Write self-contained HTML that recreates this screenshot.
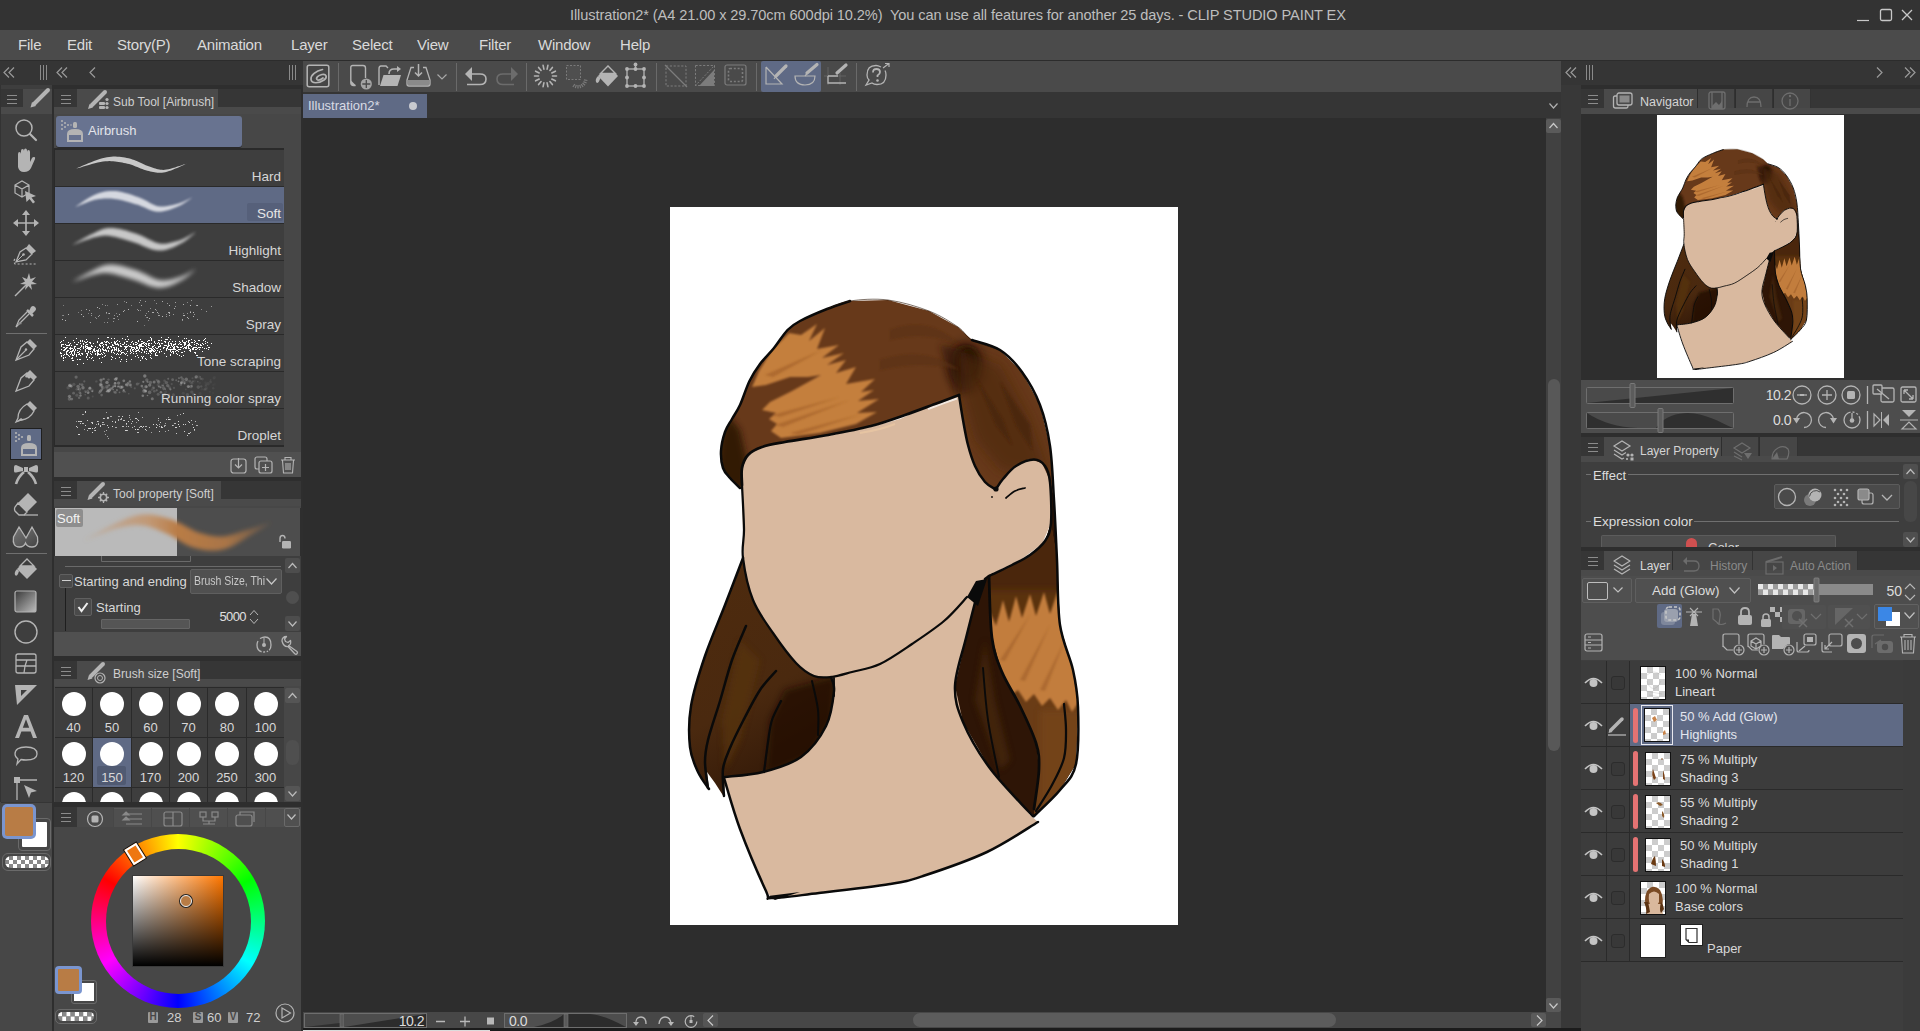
<!DOCTYPE html>
<html><head><meta charset="utf-8">
<style>
*{margin:0;padding:0;box-sizing:border-box}
html,body{width:1920px;height:1031px;overflow:hidden;background:#2e2e2e;font-family:"Liberation Sans",sans-serif;color:#d2d2d2}
.a{position:absolute}
svg{position:absolute;overflow:visible}
.t{position:absolute;white-space:nowrap;line-height:1}
</style></head><body>
<div class="a" style="left:0px;top:0px;width:1920px;height:30px;background:#333333;"></div>
<div class="t" style="left:570px;top:8px;font-size:14.6px;color:#bebebe;letter-spacing:-0.1px">Illustration2* (A4 21.00 x 29.70cm 600dpi 10.2%)&nbsp; You can use all features for another 25 days. - CLIP STUDIO PAINT EX</div>
<svg style="left:1855px;top:8px;" width="60" height="16" viewBox="0 0 60 16"><path d="M2 12.5H14" stroke="#c8c8c8" stroke-width="1.2"/><rect x="25.5" y="1.5" width="11" height="11" rx="1.5" stroke="#c8c8c8" stroke-width="1.3" fill="none"/><path d="M47 2L57 12M57 2L47 12" stroke="#c8c8c8" stroke-width="1.3"/></svg>
<div class="a" style="left:0px;top:30px;width:1920px;height:30px;background:#4b4b4b;"></div>
<div class="t" style="left:18px;top:37px;font-size:15px;color:#dadada;letter-spacing:-0.2px">File</div>
<div class="t" style="left:67px;top:37px;font-size:15px;color:#dadada;letter-spacing:-0.2px">Edit</div>
<div class="t" style="left:117px;top:37px;font-size:15px;color:#dadada;letter-spacing:-0.2px">Story(P)</div>
<div class="t" style="left:197px;top:37px;font-size:15px;color:#dadada;letter-spacing:-0.2px">Animation</div>
<div class="t" style="left:291px;top:37px;font-size:15px;color:#dadada;letter-spacing:-0.2px">Layer</div>
<div class="t" style="left:352px;top:37px;font-size:15px;color:#dadada;letter-spacing:-0.2px">Select</div>
<div class="t" style="left:417px;top:37px;font-size:15px;color:#dadada;letter-spacing:-0.2px">View</div>
<div class="t" style="left:479px;top:37px;font-size:15px;color:#dadada;letter-spacing:-0.2px">Filter</div>
<div class="t" style="left:538px;top:37px;font-size:15px;color:#dadada;letter-spacing:-0.2px">Window</div>
<div class="t" style="left:620px;top:37px;font-size:15px;color:#dadada;letter-spacing:-0.2px">Help</div>
<div class="a" style="left:0px;top:60px;width:1920px;height:1px;background:#2c2c2c;"></div>
<div class="a" style="left:303px;top:61px;width:1258px;height:31px;background:#4a4a4a;"></div>
<svg style="left:306px;top:64px;" width="24" height="24" viewBox="0 0 24 24"><rect x="1.2" y="1.2" width="21.6" height="21.6" rx="2" stroke="#b4b4b4" stroke-width="1.5" fill="#454545"/><path d="M16.5 5.5C10 7 4.5 11 5 15.5C5.5 20 13 19.5 18 16C22 13 20 9.5 16 10.5C12.5 11.5 9.5 13.5 11 15.5C12 16.5 15 15.5 17 14" stroke="#b4b4b4" stroke-width="1.7" fill="none" stroke-linecap="round"/></svg>
<div class="a" style="left:338px;top:63px;width:1px;height:28px;background:#6a6a6a;"></div>
<div class="a" style="left:456px;top:63px;width:1px;height:28px;background:#6a6a6a;"></div>
<div class="a" style="left:526px;top:63px;width:1px;height:28px;background:#6a6a6a;"></div>
<div class="a" style="left:656px;top:63px;width:1px;height:28px;background:#6a6a6a;"></div>
<div class="a" style="left:756px;top:63px;width:1px;height:28px;background:#6a6a6a;"></div>
<div class="a" style="left:856px;top:63px;width:1px;height:28px;background:#6a6a6a;"></div>
<svg style="left:349px;top:64px;" width="26" height="28" viewBox="0 0 26 28"><path d="M6.5 21.5H4.5Q1.8 21.5 1.8 18.8V3.5Q1.8 1.5 3.8 1.5H14Q16.5 1.5 16.5 4V14" stroke="#b4b4b4" stroke-width="1.4" fill="none"/><path d="M2 16.5L7 21.5H4Q2 21.5 2 19.5Z" fill="#b4b4b4"/><circle cx="17.3" cy="20" r="5.6" fill="#a4a4a4"/><path d="M17.3 16V24M13.3 20H21.3" stroke="#4a4a4a" stroke-width="1.3"/></svg>
<svg style="left:378px;top:65px;" width="25" height="22" viewBox="0 0 25 22"><path d="M1 20V4Q1 1 3 1H8L10 3" stroke="#b4b4b4" stroke-width="1.4" fill="none"/><path d="M2 21L5.5 10H23L19.5 21Z" fill="#b4b4b4"/><path d="M11 9Q11 4 16 4H20" stroke="#b4b4b4" stroke-width="1.6" fill="none"/><path d="M19 1L23 4L19 7Z" fill="#b4b4b4"/></svg>
<svg style="left:406px;top:63px;" width="26" height="26" viewBox="0 0 26 26"><path d="M8 4.5H5L1 17V21Q1 23 3 23H22Q24 23 24 21V17L20 4.5H17" stroke="#b4b4b4" stroke-width="1.3" fill="none"/><rect x="2" y="17" width="21" height="5" fill="#8a8a8a"/><path d="M12.5 1V13M9 9.5L12.5 13L16 9.5" stroke="#b4b4b4" stroke-width="1.5" fill="none"/></svg>
<svg style="left:437px;top:74px;" width="10" height="6" viewBox="0 0 10 6"><path d="M0.5 0.5L5.0 5L9.5 0.5" stroke="#a8a8a8" stroke-width="1.2" fill="none"/></svg>
<svg style="left:465px;top:64px;" width="23" height="24" viewBox="0 0 23 24"><path d="M6 10H15Q21 10 21 15Q21 20.5 15 20.5H2" stroke="#b4b4b4" stroke-width="1.6" fill="none"/><path d="M0 10L7 3V17Z" fill="#b4b4b4"/></svg>
<svg style="left:495px;top:64px;" width="23" height="24" viewBox="0 0 23 24"><path d="M17 10H8Q2 10 2 15Q2 20.5 8 20.5H19" stroke="#6c6c6c" stroke-width="1.6" fill="none"/><path d="M23 10L16 3V17Z" fill="#6c6c6c"/></svg>
<svg style="left:534px;top:64px;" width="24" height="24" viewBox="0 0 24 24"><path d="M18.5 12.0L22.5 12.0M17.8 15.0L21.4 16.8M15.9 17.5L18.4 20.6M13.1 18.8L13.9 22.7M9.9 18.8L9.1 22.7M7.1 17.5L4.6 20.6M5.2 15.0L1.6 16.8M4.5 12.0L0.5 12.0M5.2 9.0L1.6 7.2M7.1 6.5L4.6 3.4M9.9 5.2L9.1 1.3M13.1 5.2L13.9 1.3M15.9 6.5L18.4 3.4M17.8 9.0L21.4 7.2" stroke="#b4b4b4" stroke-width="1.6" stroke-linecap="round"/></svg>
<svg style="left:564px;top:64px;" width="24" height="24" viewBox="0 0 24 24"><rect x="2.5" y="1.5" width="14" height="14" stroke="#7a7a7a" stroke-width="1" stroke-dasharray="2 1.5" fill="#4f4f4f"/><path d="M19.9 15.9L23.4 16.5M19.4 17.6L22.6 19.0M18.5 19.0L21.1 21.3M17.2 20.1L19.1 23.0M15.7 20.8L16.7 24.1M14.0 21.0L14.0 24.5M12.3 20.8L11.3 24.1M10.8 20.1L8.9 23.0" stroke="#7a7a7a" stroke-width="1.2"/></svg>
<svg style="left:594px;top:64px;" width="26" height="25" viewBox="0 0 26 25"><path d="M14 1.5L24 12L14 22.5L4 12Z" fill="#b4b4b4"/><path d="M6.5 9.5L14 2L21.5 9.5Z" fill="#4a4a4a"/><path d="M14 2L21.5 9.5H6.5Z" stroke="#b4b4b4" stroke-width="1.4" fill="none"/><path d="M4 12Q1 15 2 18Q3.5 20 5 17.5L6.5 14Z" fill="#b4b4b4"/></svg>
<svg style="left:625px;top:63px;" width="22" height="27" viewBox="0 0 22 27"><rect x="2" y="6" width="17" height="17" stroke="#b4b4b4" stroke-width="1.3" fill="none"/><path d="M10.5 6V1" stroke="#b4b4b4" stroke-width="1.3"/><circle cx="2" cy="6" r="1.9" fill="#b4b4b4"/><circle cx="10.5" cy="6" r="1.9" fill="#b4b4b4"/><circle cx="19" cy="6" r="1.9" fill="#b4b4b4"/><circle cx="2" cy="14.5" r="1.9" fill="#b4b4b4"/><circle cx="19" cy="14.5" r="1.9" fill="#b4b4b4"/><circle cx="2" cy="23" r="1.9" fill="#b4b4b4"/><circle cx="10.5" cy="23" r="1.9" fill="#b4b4b4"/><circle cx="19" cy="23" r="1.9" fill="#b4b4b4"/><circle cx="10.5" cy="1.5" r="1.9" fill="#b4b4b4"/></svg>
<svg style="left:664px;top:64px;" width="25" height="25" viewBox="0 0 25 25"><rect x="2" y="2" width="20" height="20" stroke="#7c7c7c" stroke-width="1" stroke-dasharray="2.2 1.6" fill="none"/><path d="M1 1L23 23" stroke="#7c7c7c" stroke-width="1.3"/></svg>
<svg style="left:694px;top:64px;" width="25" height="25" viewBox="0 0 25 25"><rect x="1.5" y="1.5" width="19" height="20" stroke="#7c7c7c" stroke-width="1" stroke-dasharray="2.2 1.6" fill="none"/><path d="M1 22L21 1" stroke="#7c7c7c" stroke-width="1" stroke-dasharray="2 1.5"/><path d="M5 22L20 6V22Z" fill="#7c7c7c"/></svg>
<svg style="left:724px;top:64px;" width="24" height="25" viewBox="0 0 24 25"><rect x="1" y="1" width="21" height="20" rx="2" stroke="#7c7c7c" stroke-width="1.2" fill="none"/><rect x="4.5" y="4.5" width="14" height="13" rx="1.5" stroke="#7c7c7c" stroke-width="1.6" stroke-dasharray="2 1.8" fill="none"/></svg>
<div class="a" style="left:761px;top:61px;width:60px;height:31px;background:#5f6a85;border-radius:2px"></div>
<svg style="left:764px;top:63px;" width="26" height="26" viewBox="0 0 26 26"><path d="M2 4V21H18L2 4" stroke="#b4b4b4" stroke-width="1.2" fill="none"/><path d="M12 13L22 3" stroke="#b4b4b4" stroke-width="3.2" stroke-linecap="round"/><path d="M10 16L12.5 12.5" stroke="#b4b4b4" stroke-width="1.2"/></svg>
<svg style="left:794px;top:63px;" width="26" height="26" viewBox="0 0 26 26"><path d="M1 13H21Q21 22 11 22Q1 22 1 13Z" stroke="#b4b4b4" stroke-width="1.2" fill="none"/><path d="M13 10L23 1.5" stroke="#b4b4b4" stroke-width="3.2" stroke-linecap="round"/><path d="M11 13L13.5 10" stroke="#b4b4b4" stroke-width="1.2"/></svg>
<svg style="left:824px;top:63px;" width="26" height="26" viewBox="0 0 26 26"><path d="M4 4V22M0 13H22M16 10V22" stroke="#6a6a6a" stroke-width="0.8"/><path d="M4 13H14M4 13V20H22" stroke="#b4b4b4" stroke-width="1.3" fill="none"/><path d="M13 10L22 2" stroke="#b4b4b4" stroke-width="3.2" stroke-linecap="round"/></svg>
<svg style="left:864px;top:63px;" width="28" height="27" viewBox="0 0 28 27"><path d="M17 4Q14 2.5 12 2.5Q3 2.5 3 12Q3 15 5 17L2 22L8 20Q10 21.5 13 21.5Q22 21.5 22 12Q22 9 21 7.5" stroke="#b4b4b4" stroke-width="1.3" fill="none"/><path d="M9 9.5Q9 6 12.5 6Q16 6 16 9Q16 11 13.5 12.5V14" stroke="#b4b4b4" stroke-width="1.8" fill="none"/><circle cx="13.5" cy="17.5" r="1.3" fill="#b4b4b4"/><path d="M19 5L25 0.5M21 0.5H25V4" stroke="#b4b4b4" stroke-width="1.2" fill="none"/></svg>
<div class="a" style="left:0px;top:61px;width:303px;height:24px;background:#353535;"></div>
<svg style="left:3px;top:67px;" width="12" height="11" viewBox="0 0 12 11"><path d="M6 0.5L1 5.5L6 10.5M11 0.5L6 5.5L11 10.5" stroke="#9a9a9a" stroke-width="1.2" fill="none"/></svg>
<svg style="left:40px;top:65px;" width="8" height="16" viewBox="0 0 8 16"><path d="M0.5 0V15M3.5 0V15M6.5 0V15" stroke="#8a8a8a" stroke-width="1" fill="none"/></svg>
<svg style="left:56px;top:67px;" width="12" height="11" viewBox="0 0 12 11"><path d="M6 0.5L1 5.5L6 10.5M11 0.5L6 5.5L11 10.5" stroke="#9a9a9a" stroke-width="1.2" fill="none"/></svg>
<svg style="left:89px;top:67px;" width="7" height="11" viewBox="0 0 7 11"><path d="M6 0.5L1 5.5L6 10.5" stroke="#9a9a9a" stroke-width="1.2" fill="none"/></svg>
<svg style="left:289px;top:65px;" width="8" height="16" viewBox="0 0 8 16"><path d="M0.5 0V15M3.5 0V15M6.5 0V15" stroke="#8a8a8a" stroke-width="1" fill="none"/></svg>
<div class="a" style="left:1561px;top:61px;width:359px;height:24px;background:#353535;"></div>
<svg style="left:1565px;top:67px;" width="12" height="11" viewBox="0 0 12 11"><path d="M6 0.5L1 5.5L6 10.5M11 0.5L6 5.5L11 10.5" stroke="#9a9a9a" stroke-width="1.2" fill="none"/></svg>
<svg style="left:1586px;top:65px;" width="8" height="16" viewBox="0 0 8 16"><path d="M0.5 0V15M3.5 0V15M6.5 0V15" stroke="#8a8a8a" stroke-width="1" fill="none"/></svg>
<svg style="left:1876px;top:67px;" width="7" height="11" viewBox="0 0 7 11"><path d="M1 0.5L6 5.5L1 10.5" stroke="#9a9a9a" stroke-width="1.2" fill="none"/></svg>
<svg style="left:1904px;top:67px;" width="12" height="11" viewBox="0 0 12 11"><path d="M1 0.5L6 5.5L1 10.5M6 0.5L11 5.5L6 10.5" stroke="#9a9a9a" stroke-width="1.2" fill="none"/></svg>
<div class="a" style="left:302px;top:92px;width:1259px;height:26px;background:#353535;"></div>
<div class="a" style="left:302px;top:94px;width:125px;height:24px;background:#5f6a85;"></div>
<div class="t" style="left:308px;top:99px;font-size:13px;color:#d8dbe4;">Illustration2*</div>
<div class="a" style="left:409px;top:102px;width:8px;height:8px;border-radius:50%;background:#c8cad0"></div>
<svg style="left:1549px;top:103px;" width="9" height="6" viewBox="0 0 9 6"><path d="M0.5 0.5L4.5 5L8.5 0.5" stroke="#b0b0b0" stroke-width="1.2" fill="none"/></svg>
<div class="a" style="left:302px;top:118px;width:1244px;height:894px;background:#2d2d2d;"></div>
<div class="a" style="left:1546px;top:118px;width:15px;height:895px;background:#414141;"></div>
<div class="a" style="left:1546px;top:119px;width:15px;height:14px;background:#5a5a5a;border-radius:2px"></div>
<svg style="left:1549px;top:123px;" width="9" height="6" viewBox="0 0 9 6"><path d="M0.5 5L4.5 0.5L8.5 5" stroke="#c8c8c8" stroke-width="1.2" fill="none"/></svg>
<div class="a" style="left:1548px;top:379px;width:12px;height:372px;background:#585858;border-radius:6px"></div>
<div class="a" style="left:1546px;top:998px;width:15px;height:14px;background:#5a5a5a;border-radius:2px"></div>
<svg style="left:1549px;top:1003px;" width="9" height="6" viewBox="0 0 9 6"><path d="M0.5 0.5L4.5 5L8.5 0.5" stroke="#c8c8c8" stroke-width="1.2" fill="none"/></svg>
<div class="a" style="left:1561px;top:85px;width:20px;height:946px;background:#383838;"></div>
<div class="a" style="left:302px;top:1012px;width:1259px;height:16px;background:#474747;"></div>
<div class="a" style="left:0px;top:1028px;width:1920px;height:3px;background:#1c1c1c;"></div>
<div class="a" style="left:60px;top:1030px;width:430px;height:1px;background:#dcdcdc;"></div>
<svg style="left:304px;top:1013px;" width="123" height="15" viewBox="0 0 123 15"><rect x="0.5" y="0.5" width="122" height="14" fill="#3a3a3a" stroke="#6e6e6e"/><path d="M1 14L122 1V14Z" fill="#2c2c2c"/><path d="M1 14L36 10V14Z" fill="#2c2c2c"/><rect x="1" y="1" width="35" height="13" fill="#474747"/><path d="M1 14L36 10V14Z" fill="#2f2f2f"/><rect x="36" y="1" width="4" height="13" fill="#5a5a5a" stroke="#777" stroke-width="0.6"/><path d="M40 14L122 1V1H40Z" fill="#4d4d4d"/></svg>
<div class="t" style="right:1496px;top:1014px;font-size:14px;color:#dcdcdc;letter-spacing:-0.5px">10.2</div>
<svg style="left:435px;top:1015px;" width="60" height="12" viewBox="0 0 60 12"><path d="M1 6.5H10M25 6.5H35M30 1.5V11.5" stroke="#b8b8b8" stroke-width="1.3"/><rect x="52" y="2.5" width="7" height="7" fill="#b8b8b8"/></svg>
<svg style="left:504px;top:1013px;" width="123" height="15" viewBox="0 0 123 15"><rect x="0.5" y="0.5" width="122" height="14" fill="#2c2c2c" stroke="#6e6e6e"/><path d="M1 1H60Q40 14 1 14Z" fill="#4d4d4d"/><path d="M1 1V14H30Q50 10 60 1Z" fill="#4f4f4f"/><path d="M1 14Q40 14 60 1" fill="none" stroke="none"/><rect x="60" y="1" width="4" height="13" fill="#5a5a5a" stroke="#777" stroke-width="0.6"/><path d="M64 1H86Q100 2 122 14V1Z" fill="#4d4d4d"/></svg>
<div class="t" style="left:509px;top:1014px;font-size:14px;color:#dcdcdc;letter-spacing:-0.5px">0.0</div>
<svg style="left:633px;top:1014px;" width="66" height="14" viewBox="0 0 66 14"><path d="M3 11Q2 3 8 3Q13 3 13 10" stroke="#b8b8b8" stroke-width="1.3" fill="none"/><path d="M0 8L3 12L6 8Z" fill="#b8b8b8"/><path d="M38 11Q38 3 32 3Q27 3 26 10" stroke="#b8b8b8" stroke-width="1.3" fill="none"/><path d="M35 8L38 12L41 8Z" fill="#b8b8b8"/><circle cx="58" cy="7.5" r="5.8" stroke="#b8b8b8" stroke-width="1.2" fill="none" stroke-dasharray="30 6"/><rect x="56.5" y="6" width="3" height="3" fill="#b8b8b8"/><path d="M58 1.5V7" stroke="#b8b8b8" stroke-width="1"/></svg>
<div class="a" style="left:703px;top:1013px;width:15px;height:14px;background:#555555;border-radius:2px"></div>
<svg style="left:707px;top:1015px;" width="7" height="11" viewBox="0 0 7 11"><path d="M6 0.5L1 5.5L6 10.5" stroke="#c8c8c8" stroke-width="1.2" fill="none"/></svg>
<div class="a" style="left:913px;top:1013px;width:423px;height:14px;background:#5c5c5c;border-radius:7px"></div>
<div class="a" style="left:1531px;top:1013px;width:15px;height:14px;background:#5a5a5a;border-radius:2px"></div>
<svg style="left:1536px;top:1015px;" width="7" height="11" viewBox="0 0 7 11"><path d="M1 0.5L6 5.5L1 10.5" stroke="#c8c8c8" stroke-width="1.2" fill="none"/></svg>
<div class="a" style="left:670px;top:207px;width:508px;height:718px;background:#ffffff;"></div>
<div class="a" style="left:0px;top:85px;width:303px;height:946px;background:#2e2e2e;"></div>
<div class="a" style="left:0px;top:85px;width:52px;height:946px;background:#3e3e3e;"></div>
<div class="a" style="left:0px;top:85px;width:1px;height:946px;background:#333;"></div>
<div class="a" style="left:1px;top:89px;width:22px;height:18px;background:#363636;"></div>
<div class="a" style="left:23px;top:89px;width:29px;height:25px;background:#4a4a4a;"></div>
<div class="a" style="left:1px;top:107px;width:51px;height:7px;background:#4a4a4a;"></div>
<svg style="left:7px;top:94px;" width="10" height="10" viewBox="0 0 10 10"><path d="M0 1.5H10M0 5.5H10M0 9.5H10" stroke="#8c8c8c" stroke-width="1" fill="none"/></svg>
<svg style="left:28px;top:88px;" width="24" height="20" viewBox="0 0 24 20"><path d="M20 2L6 16" stroke="#b4b4b4" stroke-width="4" stroke-linecap="round"/><path d="M2.5 19.5L4 14L8 18Z" fill="#b4b4b4"/></svg>
<svg style="left:12px;top:117px;" width="28" height="28" viewBox="0 0 28 28"><circle cx="12" cy="11" r="8" stroke="#b4b4b4" stroke-width="1.5" fill="none"/><path d="M18 17L24 23" stroke="#b4b4b4" stroke-width="2.2" stroke-linecap="round"/></svg>
<svg style="left:12px;top:147px;" width="28" height="28" viewBox="0 0 28 28"><path d="M6 13V7Q6 5 7.5 5Q9 5 9 7V12V4Q9 2 10.5 2Q12 2 12 4V11V3.5Q12 1.5 13.5 1.5Q15 1.5 15 3.5V11V5Q15 3 16.5 3Q18 3 18 5V15L20 11Q21 9.5 22.5 10Q23.5 10.5 23 12L19 21Q17 25 12 25Q7 25 6 20Z" fill="#b4b4b4"/></svg>
<svg style="left:12px;top:178px;" width="28" height="28" viewBox="0 0 28 28"><path d="M3 7L10 3L17 7V15L10 19L3 15Z M3 7L10 11L17 7M10 11V19" stroke="#b4b4b4" stroke-width="1.2" fill="none"/><path d="M13 13L24 18L19.5 19.5L23 24L21 25.5L17.5 21L14.5 24Z" fill="#b4b4b4"/></svg>
<svg style="left:12px;top:209px;" width="28" height="28" viewBox="0 0 28 28"><path d="M14 3V25M3 14H25" stroke="#b4b4b4" stroke-width="1.6"/><path d="M14 1L10 6H18Z M14 27L10 22H18Z M1 14L6 10V18Z M27 14L22 10V18Z" fill="#b4b4b4"/></svg>
<svg style="left:12px;top:240px;" width="28" height="28" viewBox="0 0 28 28"><path d="M17 4L24 11L20 14L14 8Z" fill="#b4b4b4"/><path d="M14 8L20 14L14 20L4 22L8 12Z" stroke="#b4b4b4" stroke-width="1.3" fill="none"/><path d="M5 21L11 15" stroke="#b4b4b4" stroke-width="1"/><circle cx="11.5" cy="14.5" r="1.3" fill="#b4b4b4"/><path d="M3 19Q1 21 3 24H24" stroke="#b4b4b4" stroke-width="1.2" stroke-dasharray="2 2" fill="none"/></svg>
<svg style="left:12px;top:271px;" width="28" height="28" viewBox="0 0 28 28"><path d="M17 2L18.5 8L24 6L20 10.5L25 13L19 13.5L20 19L16.5 15L13 19L14 13.5L8 13L13 10.5L10 6L15 8Z" fill="#b4b4b4"/><path d="M15 13L3 25" stroke="#b4b4b4" stroke-width="1.5"/></svg>
<svg style="left:12px;top:303px;" width="28" height="28" viewBox="0 0 28 28"><path d="M19 4Q21 2 23 4Q25 6 23 8L20 11L17 8Z" fill="#b4b4b4"/><path d="M15 7L21 13" stroke="#b4b4b4" stroke-width="2.5"/><path d="M17 11L8 20L4 24L7 17L15 9" stroke="#b4b4b4" stroke-width="1.3" fill="none"/><path d="M5 22L8 19L10 21Z" fill="#8a8a8a"/></svg>
<div class="a" style="left:6px;top:333px;width:41px;height:1px;background:#6f6f6f;"></div>
<svg style="left:12px;top:336px;" width="28" height="28" viewBox="0 0 28 28"><path d="M18 3L25 10L22 13L15 6Z" fill="#b4b4b4"/><path d="M15 6L22 13L17 19L4 24L9 11Z" stroke="#b4b4b4" stroke-width="1.3" fill="none"/><path d="M5 23L14 14" stroke="#b4b4b4" stroke-width="1.1"/><circle cx="14" cy="13.5" r="1.2" fill="#b4b4b4"/></svg>
<svg style="left:12px;top:367px;" width="28" height="28" viewBox="0 0 28 28"><path d="M18 3L25 10L22 13L15 6Z" fill="#b4b4b4"/><path d="M15 6L22 13L17 19L4 24L9 11Z" stroke="#b4b4b4" stroke-width="1.3" fill="none"/><path d="M15 6L19 10Q17 13 15 10Q14 12 13 9Z" fill="#b4b4b4"/></svg>
<svg style="left:12px;top:398px;" width="28" height="28" viewBox="0 0 28 28"><path d="M18 3L25 10L22 13L15 6Z" fill="#b4b4b4"/><path d="M15 6L22 13Q18 21 9 22L4 24L6 20Q6 11 15 6Z" stroke="#b4b4b4" stroke-width="1.3" fill="none"/><path d="M4 24L9 20L12 22Z" fill="#b4b4b4"/></svg>
<div class="a" style="left:11px;top:429px;width:30px;height:30px;background:#5f6a85;outline:1px solid #1f1f1f"></div>
<svg style="left:11px;top:429px;" width="30" height="30" viewBox="0 0 30 30"><g fill="#b4b4b4"><circle cx="5" cy="4" r="1.1"/><circle cx="5" cy="8" r="1.1"/><circle cx="5" cy="12" r="1.1"/><circle cx="8" cy="6" r="1.1"/><circle cx="8" cy="10" r="1.1"/><circle cx="11" cy="8" r="1.1"/><rect x="16" y="6" width="4" height="6" rx="1.5"/><path d="M10 27V19Q10 14 18 14Q26 14 26 19V27Z"/></g><rect x="12" y="20" width="12" height="5" fill="#5f6a85"/></svg>
<svg style="left:12px;top:460px;" width="28" height="28" viewBox="0 0 28 28"><path d="M12 7H16V12H12Z M11 8L4 5Q2 5 2 7V11Q2 13 4 12.5L11 11Z M17 8L24 5Q26 5 26 7V11Q26 13 24 12.5L17 11Z" fill="#b4b4b4"/><path d="M12 12Q6 17 4 24M16 12Q22 17 24 24" stroke="#b4b4b4" stroke-width="2.6" fill="none"/></svg>
<svg style="left:12px;top:491px;" width="28" height="28" viewBox="0 0 28 28"><path d="M16 2L25 11L15 21L6 12Z" fill="#b4b4b4"/><path d="M6 12L15 21L12 24H7L3 20Q2 18 3 16Z" stroke="#b4b4b4" stroke-width="1.3" fill="none"/><path d="M12 24H26" stroke="#b4b4b4" stroke-width="1.3"/></svg>
<svg style="left:12px;top:525px;" width="28" height="24" viewBox="0 0 28 24"><defs><linearGradient id="bl" x1="0" y1="0" x2="1" y2="1"><stop offset="0" stop-color="#777"/><stop offset="1" stop-color="#444"/></linearGradient></defs><path d="M7 2L1.5 12Q0 22 7.5 22Q12 22 13.5 18Q15 22 20 22Q27 22 25.5 12L20 2L14 13Z" fill="url(#bl)" stroke="#b4b4b4" stroke-width="1.3"/></svg>
<div class="a" style="left:6px;top:553px;width:41px;height:1px;background:#6f6f6f;"></div>
<svg style="left:12px;top:556px;" width="28" height="28" viewBox="0 0 28 28"><path d="M15 3L25 13L15 23L5 13Z" fill="#b4b4b4"/><path d="M8 10L15 3L22 10Z" fill="#3e3e3e" stroke="#b4b4b4" stroke-width="1.3"/><path d="M5 13Q2 16 3 19Q4.5 21 6 18L7 15Z" fill="#b4b4b4"/></svg>
<svg style="left:13px;top:589px;" width="26" height="26" viewBox="0 0 26 26"><defs><linearGradient id="gr" x1="0" y1="0" x2="1" y2="1"><stop offset="0" stop-color="#383838"/><stop offset="1" stop-color="#bdbdbd"/></linearGradient></defs><rect x="2" y="2" width="21" height="21" rx="2" fill="url(#gr)" stroke="#b4b4b4" stroke-width="1.2"/></svg>
<svg style="left:12px;top:618px;" width="28" height="28" viewBox="0 0 28 28"><circle cx="14" cy="14" r="11" stroke="#b4b4b4" stroke-width="1.4" fill="none"/></svg>
<svg style="left:12px;top:650px;" width="28" height="28" viewBox="0 0 28 28"><rect x="4" y="4" width="20" height="19" rx="2" stroke="#b4b4b4" stroke-width="1.3" fill="none"/><path d="M4 10H24M4 16H13L15 10M13 16L12 23M13 16H24" stroke="#b4b4b4" stroke-width="1.3" fill="none"/></svg>
<svg style="left:12px;top:681px;" width="28" height="28" viewBox="0 0 28 28"><path d="M3 4H25L5 24Z" fill="#b4b4b4"/><path d="M9 9H15L9 15Z" fill="#3e3e3e"/></svg>
<svg style="left:12px;top:712px;" width="28" height="28" viewBox="0 0 28 28"><path d="M3 26L12 3H16L25 26H21L18.6 19.5H9.4L7 26Z M10.8 15.8H17.2L14 7.2Z" fill="#b4b4b4" fill-rule="evenodd"/></svg>
<svg style="left:12px;top:743px;" width="28" height="28" viewBox="0 0 28 28"><path d="M14 4Q25 4 25 11Q25 17 14 17Q11 17 9 16.5L5 21L6 16Q3 14 3 11Q3 4 14 4Z" stroke="#b4b4b4" stroke-width="1.3" fill="none"/></svg>
<svg style="left:12px;top:774px;" width="28" height="28" viewBox="0 0 28 28"><rect x="2" y="3" width="6" height="6" fill="#b4b4b4"/><path d="M8 6H25M5 9V26" stroke="#b4b4b4" stroke-width="1.3"/><path d="M12 11L25 17L19 18.5L17 24Z" fill="#b4b4b4"/></svg>
<div class="a" style="left:0px;top:802px;width:52px;height:229px;background:#474747;"></div>
<div class="a" style="left:1px;top:802px;width:51px;height:1px;background:#353535;"></div>
<div class="a" style="left:18px;top:818px;width:33px;height:33px;background:#474747;border:1px solid #6a6a6a;border-radius:4px"></div>
<div class="a" style="left:22px;top:822px;width:25px;height:25px;background:#ffffff;border-radius:1px"></div>
<div class="a" style="left:2px;top:804px;width:34px;height:35px;background:#7a95cf;border-radius:5px"></div>
<div class="a" style="left:5px;top:807px;width:28px;height:29px;background:#b87c45;border-radius:2px"></div>
<div class="a" style="left:2px;top:853px;width:49px;height:18px;background:#474747;border:1px solid #6a6a6a;border-radius:6px"></div>
<svg style="left:5px;top:856px;" width="44" height="12" viewBox="0 0 44 12"><clipPath id="ck"><rect x="0" y="0" width="44" height="12" rx="6"/></clipPath><g clip-path="url(#ck)"><rect x="0" y="0" width="4" height="4" fill="#fff"/><rect x="0" y="4" width="4" height="4" fill="#888"/><rect x="0" y="8" width="4" height="4" fill="#fff"/><rect x="4" y="0" width="4" height="4" fill="#888"/><rect x="4" y="4" width="4" height="4" fill="#fff"/><rect x="4" y="8" width="4" height="4" fill="#888"/><rect x="8" y="0" width="4" height="4" fill="#fff"/><rect x="8" y="4" width="4" height="4" fill="#888"/><rect x="8" y="8" width="4" height="4" fill="#fff"/><rect x="12" y="0" width="4" height="4" fill="#888"/><rect x="12" y="4" width="4" height="4" fill="#fff"/><rect x="12" y="8" width="4" height="4" fill="#888"/><rect x="16" y="0" width="4" height="4" fill="#fff"/><rect x="16" y="4" width="4" height="4" fill="#888"/><rect x="16" y="8" width="4" height="4" fill="#fff"/><rect x="20" y="0" width="4" height="4" fill="#888"/><rect x="20" y="4" width="4" height="4" fill="#fff"/><rect x="20" y="8" width="4" height="4" fill="#888"/><rect x="24" y="0" width="4" height="4" fill="#fff"/><rect x="24" y="4" width="4" height="4" fill="#888"/><rect x="24" y="8" width="4" height="4" fill="#fff"/><rect x="28" y="0" width="4" height="4" fill="#888"/><rect x="28" y="4" width="4" height="4" fill="#fff"/><rect x="28" y="8" width="4" height="4" fill="#888"/><rect x="32" y="0" width="4" height="4" fill="#fff"/><rect x="32" y="4" width="4" height="4" fill="#888"/><rect x="32" y="8" width="4" height="4" fill="#fff"/><rect x="36" y="0" width="4" height="4" fill="#888"/><rect x="36" y="4" width="4" height="4" fill="#fff"/><rect x="36" y="8" width="4" height="4" fill="#888"/><rect x="40" y="0" width="4" height="4" fill="#fff"/><rect x="40" y="4" width="4" height="4" fill="#888"/><rect x="40" y="8" width="4" height="4" fill="#fff"/></g></svg>
<div class="a" style="left:54px;top:85px;width:247px;height:4px;background:#2e2e2e;"></div>
<div class="a" style="left:54px;top:89px;width:23px;height:18px;background:#363636;"></div>
<div class="a" style="left:77px;top:89px;width:141px;height:18px;background:#4a4a4a;"></div>
<div class="a" style="left:218px;top:89px;width:83px;height:18px;background:#363636;"></div>
<div class="a" style="left:54px;top:107px;width:247px;height:7px;background:#4a4a4a;"></div>
<svg style="left:61px;top:94px;" width="10" height="10" viewBox="0 0 10 10"><path d="M0 1.5H10M0 5.5H10M0 9.5H10" stroke="#8c8c8c" stroke-width="1" fill="none"/></svg>
<svg style="left:86px;top:90px;" width="26" height="22" viewBox="0 0 26 22"><path d="M19 2L6 15" stroke="#b4b4b4" stroke-width="4" stroke-linecap="round"/><path d="M2 19L3.5 14L7 17.5Z" fill="#b4b4b4"/><g fill="#b4b4b4"><rect x="13" y="12" width="6" height="3" rx="1"/><rect x="13" y="16" width="6" height="3" rx="1"/><circle cx="21" cy="13.5" r="1.6"/><circle cx="21" cy="17.5" r="1.6"/><circle cx="21" cy="9.5" r="1.6"/></g></svg>
<div class="t" style="left:113px;top:96px;font-size:12px;color:#cfcfcf;">Sub Tool [Airbrush]</div>
<div class="a" style="left:54px;top:114px;width:247px;height:34px;background:#474747;"></div>
<div class="a" style="left:56px;top:116px;width:186px;height:31px;background:#687390;border-radius:3px;box-shadow:0 1px 0 #2a2a2a"></div>
<svg style="left:59px;top:118px;" width="26" height="26" viewBox="0 0 26 26"><g fill="#b4b4b4"><circle cx="3" cy="3" r="1"/><circle cx="3" cy="7" r="1"/><circle cx="3" cy="11" r="1"/><circle cx="6" cy="5" r="1"/><circle cx="6" cy="9" r="1"/><circle cx="9" cy="7" r="1"/><circle cx="12" cy="7" r="0.8"/><rect x="14" y="4" width="4" height="6" rx="1.5"/><path d="M8 24V16Q8 11 16 11Q24 11 24 16V24Z"/></g><rect x="10" y="17" width="12" height="5" fill="#687390"/></svg>
<div class="t" style="left:88px;top:124px;font-size:13px;color:#e2e4ea;">Airbrush</div>
<div class="a" style="left:54px;top:148px;width:230px;height:299px;background:#2a2a2a;"></div>
<div class="a" style="left:284px;top:148px;width:17px;height:304px;background:#474747;"></div>
<div class="a" style="left:55px;top:150px;width:229px;height:36px;background:#3e3e3e;"></div>
<svg style="left:0;top:0" width="1920" height="1031"><defs><filter id="bf0" x="-20%" y="-100%" width="140%" height="300%"><feGaussianBlur stdDeviation="0.5"/></filter></defs><path d="M75.0,169.0 L76.5,168.6 L78.4,168.1 L80.7,167.4 L83.2,166.6 L86.0,165.8 L88.8,165.0 L91.8,164.1 L94.8,163.3 L97.7,162.6 L100.4,162.0 L103.0,161.6 L105.3,161.3 L107.4,161.2 L109.4,161.1 L111.4,161.2 L113.2,161.3 L115.1,161.5 L116.9,161.7 L118.7,161.9 L120.4,162.3 L122.2,162.6 L123.9,162.9 L125.7,163.3 L127.4,163.7 L129.1,164.1 L130.7,164.6 L132.3,165.1 L134.0,165.7 L135.6,166.4 L137.3,167.1 L139.0,167.8 L140.6,168.5 L142.3,169.1 L144.0,169.8 L145.7,170.3 L147.4,170.7 L148.9,171.1 L150.3,171.4 L151.8,171.7 L153.2,172.0 L154.6,172.3 L156.0,172.5 L157.4,172.7 L158.8,172.7 L160.3,172.7 L161.9,172.7 L163.5,172.5 L165.2,172.2 L167.0,171.7 L169.0,171.1 L171.1,170.4 L173.3,169.5 L175.5,168.6 L177.8,167.7 L179.9,166.7 L181.9,165.8 L183.8,164.9 L185.5,164.1 L186.9,163.5 L188.0,163.0 L188.0,163.0 L186.8,163.4 L185.4,163.9 L183.6,164.5 L181.7,165.2 L179.6,165.9 L177.4,166.6 L175.1,167.4 L172.8,168.1 L170.6,168.7 L168.5,169.2 L166.5,169.6 L164.8,169.8 L163.3,169.9 L161.8,169.8 L160.5,169.7 L159.2,169.5 L157.9,169.3 L156.7,168.9 L155.4,168.6 L154.2,168.2 L152.9,167.7 L151.5,167.2 L150.1,166.8 L148.6,166.3 L147.2,165.8 L145.7,165.2 L144.2,164.5 L142.7,163.8 L141.1,163.1 L139.4,162.3 L137.8,161.5 L136.0,160.7 L134.2,160.0 L132.4,159.4 L130.5,158.8 L128.6,158.3 L126.8,157.9 L124.9,157.6 L123.1,157.3 L121.2,157.0 L119.3,156.8 L117.4,156.7 L115.4,156.6 L113.3,156.6 L111.3,156.8 L109.1,157.0 L107.0,157.3 L104.7,157.7 L102.3,158.3 L99.7,159.1 L96.9,160.0 L94.0,161.1 L91.1,162.2 L88.3,163.3 L85.5,164.5 L82.9,165.6 L80.4,166.7 L78.3,167.6 L76.4,168.4 L75.0,169.0 Z" fill="#d4d4d4" filter="url(#bf0)" opacity="0.92"/></svg>
<div class="t" style="right:1639px;top:169.5px;font-size:13.5px;color:#d6d6d6;">Hard</div>
<div class="a" style="left:55px;top:187px;width:229px;height:36px;background:#5f6a85;"></div>
<svg style="left:0;top:0" width="1920" height="1031"><defs><filter id="bf1" x="-20%" y="-100%" width="140%" height="300%"><feGaussianBlur stdDeviation="0.9"/></filter></defs><path d="M75.0,207.0 L76.3,206.5 L78.1,205.9 L80.1,205.1 L82.4,204.2 L84.9,203.2 L87.4,202.2 L89.9,201.3 L92.4,200.5 L94.7,199.8 L96.7,199.4 L98.7,199.1 L100.5,198.9 L102.3,198.7 L104.1,198.6 L105.8,198.5 L107.4,198.5 L109.1,198.5 L110.9,198.6 L112.7,198.8 L114.6,199.0 L116.6,199.2 L118.6,199.6 L120.8,200.0 L123.1,200.6 L125.4,201.2 L127.7,201.8 L130.0,202.5 L132.4,203.2 L134.6,203.9 L136.8,204.5 L138.8,205.1 L140.7,205.9 L142.7,206.7 L144.7,207.6 L146.7,208.6 L148.8,209.4 L150.9,210.3 L153.1,210.9 L155.4,211.4 L157.7,211.7 L160.0,211.7 L162.3,211.5 L164.5,211.1 L166.7,210.6 L168.8,210.0 L170.9,209.3 L172.9,208.5 L174.8,207.8 L176.7,207.0 L178.4,206.2 L180.2,205.4 L182.0,204.4 L183.7,203.4 L185.4,202.3 L187.0,201.3 L188.5,200.2 L189.9,199.2 L191.1,198.3 L192.2,197.6 L193.0,197.0 L193.0,197.0 L192.1,197.4 L190.9,198.0 L189.6,198.7 L188.1,199.4 L186.5,200.2 L184.7,201.1 L182.9,201.9 L181.1,202.6 L179.3,203.3 L177.6,203.8 L175.7,204.2 L173.8,204.7 L171.9,205.2 L169.9,205.6 L167.8,206.0 L165.8,206.3 L163.8,206.5 L161.9,206.6 L160.0,206.5 L158.3,206.3 L156.6,205.9 L155.0,205.3 L153.2,204.6 L151.5,203.7 L149.6,202.7 L147.7,201.6 L145.7,200.5 L143.7,199.4 L141.5,198.4 L139.2,197.5 L137.0,196.7 L134.7,195.9 L132.3,195.1 L129.9,194.3 L127.5,193.6 L125.1,192.9 L122.6,192.3 L120.2,191.7 L117.7,191.3 L115.4,191.0 L113.2,190.9 L111.1,190.9 L109.0,191.0 L107.0,191.2 L105.0,191.5 L103.0,191.9 L101.1,192.4 L99.2,193.1 L97.2,193.8 L95.3,194.6 L93.1,195.6 L90.8,196.8 L88.5,198.1 L86.1,199.6 L83.8,201.1 L81.6,202.5 L79.5,203.9 L77.7,205.2 L76.2,206.2 L75.0,207.0 Z" fill="#e0e2e8" filter="url(#bf1)" opacity="0.92"/></svg>
<div class="a" style="left:247px;top:203px;width:36px;height:18px;background:#56607a;border-radius:2px"></div>
<div class="t" style="right:1639px;top:206.5px;font-size:13.5px;color:#e6e6e6;">Soft</div>
<div class="a" style="left:55px;top:224px;width:229px;height:36px;background:#3e3e3e;"></div>
<svg style="left:0;top:0" width="1920" height="1031"><defs><filter id="bf2" x="-20%" y="-100%" width="140%" height="300%"><feGaussianBlur stdDeviation="1.6"/></filter></defs><path d="M72.0,245.0 L73.5,244.5 L75.4,243.8 L77.7,243.0 L80.2,242.1 L82.9,241.1 L85.7,240.1 L88.5,239.2 L91.1,238.3 L93.6,237.6 L95.7,237.1 L97.6,236.7 L99.4,236.3 L100.9,236.0 L102.3,235.8 L103.7,235.7 L104.9,235.6 L106.2,235.6 L107.5,235.7 L109.0,235.8 L110.7,236.0 L112.5,236.4 L114.5,236.8 L116.7,237.3 L119.0,237.9 L121.3,238.6 L123.8,239.3 L126.3,240.0 L128.7,240.8 L131.2,241.5 L133.6,242.2 L135.8,243.0 L138.1,243.8 L140.5,244.8 L143.0,245.9 L145.5,246.9 L148.0,248.0 L150.6,248.9 L153.3,249.7 L156.0,250.2 L158.7,250.5 L161.3,250.5 L163.8,250.2 L166.2,249.7 L168.5,249.1 L170.7,248.3 L172.9,247.4 L175.0,246.5 L177.0,245.5 L178.9,244.6 L180.7,243.6 L182.6,242.6 L184.4,241.4 L186.3,240.1 L188.1,238.7 L189.8,237.3 L191.3,236.0 L192.8,234.8 L194.1,233.7 L195.1,232.7 L196.0,232.0 L196.0,232.0 L195.0,232.5 L193.7,233.2 L192.3,234.1 L190.6,235.0 L188.9,236.0 L187.0,237.1 L185.1,238.0 L183.1,239.0 L181.2,239.7 L179.3,240.4 L177.4,240.9 L175.4,241.5 L173.4,242.1 L171.3,242.6 L169.3,243.1 L167.2,243.4 L165.2,243.7 L163.2,243.8 L161.2,243.7 L159.3,243.5 L157.5,243.1 L155.5,242.4 L153.4,241.6 L151.2,240.6 L148.9,239.4 L146.5,238.2 L144.1,237.0 L141.6,235.8 L139.0,234.7 L136.4,233.8 L133.9,233.0 L131.4,232.2 L128.8,231.4 L126.3,230.6 L123.7,229.9 L121.1,229.3 L118.5,228.8 L116.1,228.4 L113.6,228.1 L111.3,228.0 L109.2,228.0 L107.3,228.1 L105.5,228.4 L103.8,228.8 L102.2,229.3 L100.7,229.9 L99.2,230.6 L97.7,231.3 L96.1,232.1 L94.3,232.9 L92.2,233.9 L89.8,235.1 L87.3,236.4 L84.7,237.8 L82.1,239.3 L79.6,240.7 L77.2,242.0 L75.1,243.2 L73.3,244.2 L72.0,245.0 Z" fill="#d4d4d4" filter="url(#bf2)" opacity="0.92"/></svg>
<div class="t" style="right:1639px;top:243.5px;font-size:13.5px;color:#d6d6d6;">Highlight</div>
<div class="a" style="left:55px;top:261px;width:229px;height:36px;background:#3e3e3e;"></div>
<svg style="left:0;top:0" width="1920" height="1031"><defs><filter id="bf3" x="-20%" y="-100%" width="140%" height="300%"><feGaussianBlur stdDeviation="2.2"/></filter></defs><path d="M72.0,282.0 L73.5,281.5 L75.4,280.9 L77.7,280.1 L80.2,279.2 L83.0,278.2 L85.8,277.2 L88.5,276.3 L91.2,275.5 L93.7,274.8 L95.8,274.3 L97.7,273.9 L99.5,273.6 L101.0,273.3 L102.4,273.1 L103.7,273.0 L105.0,273.0 L106.2,273.0 L107.5,273.1 L109.0,273.3 L110.6,273.5 L112.5,273.8 L114.4,274.2 L116.6,274.8 L118.8,275.4 L121.2,276.0 L123.6,276.7 L126.1,277.5 L128.6,278.2 L131.1,279.0 L133.5,279.7 L135.7,280.4 L137.9,281.3 L140.3,282.2 L142.8,283.3 L145.3,284.3 L147.9,285.4 L150.5,286.3 L153.2,287.1 L155.9,287.6 L158.6,287.9 L161.3,287.8 L163.8,287.5 L166.2,287.0 L168.6,286.4 L170.8,285.6 L173.0,284.7 L175.1,283.7 L177.0,282.8 L178.9,281.8 L180.8,280.8 L182.6,279.7 L184.5,278.5 L186.4,277.2 L188.1,275.8 L189.8,274.4 L191.4,273.1 L192.8,271.8 L194.1,270.7 L195.1,269.7 L196.0,269.0 L196.0,269.0 L195.0,269.5 L193.7,270.2 L192.3,271.0 L190.6,272.0 L188.8,273.0 L186.9,274.0 L185.0,274.9 L183.0,275.8 L181.1,276.6 L179.2,277.2 L177.3,277.7 L175.3,278.3 L173.3,278.9 L171.2,279.4 L169.2,279.8 L167.1,280.1 L165.1,280.3 L163.1,280.4 L161.2,280.3 L159.4,280.1 L157.6,279.7 L155.6,279.0 L153.5,278.2 L151.4,277.2 L149.1,276.0 L146.7,274.8 L144.3,273.6 L141.7,272.4 L139.2,271.3 L136.5,270.3 L134.0,269.5 L131.5,268.7 L129.0,267.9 L126.4,267.2 L123.8,266.5 L121.2,265.8 L118.6,265.3 L116.1,264.9 L113.7,264.6 L111.4,264.5 L109.2,264.5 L107.3,264.7 L105.4,265.0 L103.7,265.4 L102.1,266.0 L100.6,266.6 L99.1,267.3 L97.6,268.0 L96.0,268.8 L94.2,269.7 L92.1,270.7 L89.8,271.9 L87.2,273.3 L84.6,274.7 L82.0,276.2 L79.5,277.6 L77.2,279.0 L75.1,280.2 L73.3,281.2 L72.0,282.0 Z" fill="#d4d4d4" filter="url(#bf3)" opacity="0.92"/></svg>
<div class="t" style="right:1639px;top:280.5px;font-size:13.5px;color:#d6d6d6;">Shadow</div>
<div class="a" style="left:55px;top:298px;width:229px;height:36px;background:#3e3e3e;"></div>
<svg style="left:0;top:0" width="1920" height="1031"><rect x="97" y="307" width="1" height="1" fill="#b8b8b8" opacity="0.80"/><rect x="155" y="309" width="1" height="1" fill="#b8b8b8" opacity="0.53"/><rect x="63" y="315" width="1" height="1" fill="#b8b8b8" opacity="0.62"/><rect x="211" y="306" width="1" height="1" fill="#b8b8b8" opacity="0.74"/><rect x="187" y="302" width="1" height="1" fill="#b8b8b8" opacity="0.58"/><rect x="157" y="312" width="1" height="1" fill="#b8b8b8" opacity="0.93"/><rect x="140" y="310" width="1" height="1" fill="#b8b8b8" opacity="0.53"/><rect x="175" y="302" width="1" height="1" fill="#b8b8b8" opacity="0.80"/><rect x="107" y="322" width="1" height="1" fill="#b8b8b8" opacity="0.74"/><rect x="169" y="312" width="1" height="1" fill="#b8b8b8" opacity="0.94"/><rect x="169" y="315" width="1" height="1" fill="#b8b8b8" opacity="0.90"/><rect x="128" y="309" width="1" height="1" fill="#b8b8b8" opacity="0.97"/><rect x="193" y="312" width="1" height="1" fill="#b8b8b8" opacity="0.61"/><rect x="206" y="311" width="1" height="1" fill="#b8b8b8" opacity="0.72"/><rect x="155" y="309" width="1" height="1" fill="#b8b8b8" opacity="0.69"/><rect x="114" y="318" width="1" height="1" fill="#b8b8b8" opacity="0.79"/><rect x="149" y="318" width="1" height="1" fill="#b8b8b8" opacity="0.96"/><rect x="190" y="305" width="1" height="1" fill="#b8b8b8" opacity="1.00"/><rect x="162" y="316" width="1" height="1" fill="#b8b8b8" opacity="0.98"/><rect x="197" y="319" width="1" height="1" fill="#b8b8b8" opacity="0.78"/><rect x="169" y="313" width="1" height="1" fill="#b8b8b8" opacity="0.79"/><rect x="104" y="322" width="1" height="1" fill="#b8b8b8" opacity="0.53"/><rect x="190" y="312" width="1" height="1" fill="#b8b8b8" opacity="0.90"/><rect x="123" y="311" width="1" height="1" fill="#b8b8b8" opacity="0.58"/><rect x="106" y="313" width="1" height="1" fill="#b8b8b8" opacity="0.52"/><rect x="154" y="300" width="1" height="1" fill="#b8b8b8" opacity="0.52"/><rect x="169" y="305" width="1" height="1" fill="#b8b8b8" opacity="0.99"/><rect x="137" y="321" width="1" height="1" fill="#b8b8b8" opacity="1.00"/><rect x="108" y="318" width="1" height="1" fill="#b8b8b8" opacity="0.52"/><rect x="91" y="315" width="1" height="1" fill="#b8b8b8" opacity="0.70"/><rect x="153" y="312" width="1" height="1" fill="#b8b8b8" opacity="0.93"/><rect x="109" y="313" width="1" height="1" fill="#b8b8b8" opacity="0.98"/><rect x="196" y="305" width="1" height="1" fill="#b8b8b8" opacity="0.76"/><rect x="158" y="315" width="1" height="1" fill="#b8b8b8" opacity="0.80"/><rect x="145" y="301" width="1" height="1" fill="#b8b8b8" opacity="0.75"/><rect x="126" y="302" width="1" height="1" fill="#b8b8b8" opacity="0.86"/><rect x="97" y="307" width="1" height="1" fill="#b8b8b8" opacity="0.76"/><rect x="144" y="325" width="1" height="1" fill="#b8b8b8" opacity="0.51"/><rect x="124" y="310" width="1" height="1" fill="#b8b8b8" opacity="0.81"/><rect x="156" y="310" width="1" height="1" fill="#b8b8b8" opacity="0.53"/><rect x="156" y="303" width="1" height="1" fill="#b8b8b8" opacity="0.68"/><rect x="168" y="312" width="1" height="1" fill="#b8b8b8" opacity="0.87"/><rect x="65" y="320" width="1" height="1" fill="#b8b8b8" opacity="0.98"/><rect x="99" y="315" width="1" height="1" fill="#b8b8b8" opacity="0.73"/><rect x="150" y="308" width="1" height="1" fill="#b8b8b8" opacity="0.66"/><rect x="117" y="316" width="1" height="1" fill="#b8b8b8" opacity="0.80"/><rect x="107" y="305" width="1" height="1" fill="#b8b8b8" opacity="0.51"/><rect x="147" y="317" width="1" height="1" fill="#b8b8b8" opacity="0.87"/><rect x="108" y="313" width="1" height="1" fill="#b8b8b8" opacity="0.62"/><rect x="90" y="322" width="1" height="1" fill="#b8b8b8" opacity="0.72"/><rect x="166" y="314" width="1" height="1" fill="#b8b8b8" opacity="0.67"/><rect x="187" y="313" width="1" height="1" fill="#b8b8b8" opacity="0.72"/><rect x="190" y="312" width="1" height="1" fill="#b8b8b8" opacity="0.83"/><rect x="194" y="314" width="1" height="1" fill="#b8b8b8" opacity="0.73"/><rect x="95" y="317" width="1" height="1" fill="#b8b8b8" opacity="0.60"/><rect x="183" y="315" width="1" height="1" fill="#b8b8b8" opacity="0.92"/><rect x="89" y="310" width="1" height="1" fill="#b8b8b8" opacity="0.82"/><rect x="182" y="320" width="1" height="1" fill="#b8b8b8" opacity="0.67"/><rect x="81" y="310" width="1" height="1" fill="#b8b8b8" opacity="0.64"/><rect x="113" y="321" width="1" height="1" fill="#b8b8b8" opacity="0.71"/><rect x="124" y="301" width="1" height="1" fill="#b8b8b8" opacity="0.58"/><rect x="62" y="319" width="1" height="1" fill="#b8b8b8" opacity="0.97"/><rect x="193" y="316" width="1" height="1" fill="#b8b8b8" opacity="0.98"/><rect x="201" y="309" width="1" height="1" fill="#b8b8b8" opacity="0.61"/><rect x="173" y="314" width="1" height="1" fill="#b8b8b8" opacity="0.76"/><rect x="105" y="305" width="1" height="1" fill="#b8b8b8" opacity="0.67"/><rect x="96" y="318" width="1" height="1" fill="#b8b8b8" opacity="0.64"/><rect x="183" y="313" width="1" height="1" fill="#b8b8b8" opacity="0.52"/><rect x="197" y="305" width="1" height="1" fill="#b8b8b8" opacity="0.95"/><rect x="148" y="320" width="1" height="1" fill="#b8b8b8" opacity="0.59"/><rect x="106" y="312" width="1" height="1" fill="#b8b8b8" opacity="0.83"/><rect x="140" y="300" width="1" height="1" fill="#b8b8b8" opacity="0.81"/><rect x="113" y="318" width="1" height="1" fill="#b8b8b8" opacity="0.63"/><rect x="191" y="300" width="1" height="1" fill="#b8b8b8" opacity="0.68"/><rect x="91" y="313" width="1" height="1" fill="#b8b8b8" opacity="0.77"/><rect x="184" y="315" width="1" height="1" fill="#b8b8b8" opacity="0.96"/><rect x="182" y="319" width="1" height="1" fill="#b8b8b8" opacity="0.91"/><rect x="63" y="305" width="1" height="1" fill="#b8b8b8" opacity="0.52"/><rect x="102" y="304" width="1" height="1" fill="#b8b8b8" opacity="0.63"/><rect x="141" y="305" width="1" height="1" fill="#b8b8b8" opacity="0.89"/><rect x="62" y="315" width="1" height="1" fill="#b8b8b8" opacity="0.53"/><rect x="81" y="314" width="1" height="1" fill="#b8b8b8" opacity="0.99"/><rect x="190" y="311" width="1" height="1" fill="#b8b8b8" opacity="0.54"/><rect x="137" y="309" width="1" height="1" fill="#b8b8b8" opacity="0.68"/><rect x="159" y="315" width="1" height="1" fill="#b8b8b8" opacity="0.79"/><rect x="116" y="313" width="1" height="1" fill="#b8b8b8" opacity="0.56"/><rect x="145" y="315" width="1" height="1" fill="#b8b8b8" opacity="0.86"/><rect x="119" y="314" width="1" height="1" fill="#b8b8b8" opacity="0.69"/><rect x="152" y="312" width="1" height="1" fill="#b8b8b8" opacity="0.89"/><rect x="119" y="314" width="1" height="1" fill="#b8b8b8" opacity="0.72"/><rect x="117" y="304" width="1" height="1" fill="#b8b8b8" opacity="0.75"/><rect x="167" y="303" width="1" height="1" fill="#b8b8b8" opacity="0.73"/><rect x="98" y="316" width="1" height="1" fill="#b8b8b8" opacity="0.77"/><rect x="166" y="316" width="1" height="1" fill="#b8b8b8" opacity="0.71"/><rect x="193" y="312" width="1" height="1" fill="#b8b8b8" opacity="0.97"/><rect x="118" y="319" width="1" height="1" fill="#b8b8b8" opacity="0.63"/><rect x="131" y="305" width="1" height="1" fill="#b8b8b8" opacity="0.56"/><rect x="183" y="304" width="1" height="1" fill="#b8b8b8" opacity="0.90"/><rect x="162" y="301" width="1" height="1" fill="#b8b8b8" opacity="0.87"/><rect x="146" y="317" width="1" height="1" fill="#b8b8b8" opacity="0.50"/><rect x="83" y="316" width="1" height="1" fill="#b8b8b8" opacity="0.89"/><rect x="68" y="314" width="1" height="1" fill="#b8b8b8" opacity="0.94"/><rect x="88" y="313" width="1" height="1" fill="#b8b8b8" opacity="0.51"/><rect x="188" y="318" width="1" height="1" fill="#b8b8b8" opacity="0.84"/><rect x="187" y="317" width="1" height="1" fill="#b8b8b8" opacity="0.98"/><rect x="148" y="311" width="1" height="1" fill="#b8b8b8" opacity="0.88"/><rect x="138" y="310" width="1" height="1" fill="#b8b8b8" opacity="0.86"/><rect x="78" y="312" width="1" height="1" fill="#b8b8b8" opacity="0.53"/><rect x="146" y="313" width="1" height="1" fill="#b8b8b8" opacity="0.59"/><rect x="99" y="308" width="1" height="1" fill="#b8b8b8" opacity="0.81"/><rect x="175" y="306" width="1" height="1" fill="#b8b8b8" opacity="0.70"/><rect x="114" y="315" width="1" height="1" fill="#b8b8b8" opacity="0.71"/><rect x="123" y="311" width="1" height="1" fill="#b8b8b8" opacity="0.87"/><rect x="86" y="309" width="1" height="1" fill="#b8b8b8" opacity="0.84"/><rect x="139" y="302" width="1" height="1" fill="#b8b8b8" opacity="0.74"/><rect x="158" y="313" width="1" height="1" fill="#b8b8b8" opacity="0.55"/><rect x="174" y="308" width="1" height="1" fill="#b8b8b8" opacity="0.96"/></svg>
<div class="t" style="right:1639px;top:317.5px;font-size:13.5px;color:#d6d6d6;">Spray</div>
<div class="a" style="left:55px;top:335px;width:229px;height:36px;background:#3e3e3e;"></div>
<svg style="left:0;top:0" width="1920" height="1031"><rect x="138" y="340" width="1" height="1" fill="#ffffff"/><rect x="100" y="351" width="1" height="1" fill="#ffffff"/><rect x="149" y="345" width="1" height="1" fill="#ffffff"/><rect x="204" y="348" width="1" height="1" fill="#ffffff"/><rect x="167" y="339" width="1" height="1" fill="#ffffff"/><rect x="100" y="354" width="1" height="1" fill="#ffffff"/><rect x="63" y="344" width="1" height="1" fill="#ffffff"/><rect x="114" y="349" width="1" height="1" fill="#ffffff"/><rect x="177" y="354" width="1" height="1" fill="#ffffff"/><rect x="151" y="358" width="1" height="1" fill="#ffffff"/><rect x="186" y="348" width="1" height="1" fill="#ffffff"/><rect x="169" y="341" width="1" height="1" fill="#ffffff"/><rect x="120" y="346" width="1" height="1" fill="#ffffff"/><rect x="189" y="340" width="1" height="1" fill="#ffffff"/><rect x="88" y="348" width="1" height="1" fill="#ffffff"/><rect x="98" y="351" width="1" height="1" fill="#ffffff"/><rect x="170" y="343" width="1" height="1" fill="#ffffff"/><rect x="74" y="351" width="1" height="1" fill="#ffffff"/><rect x="148" y="343" width="1" height="1" fill="#ffffff"/><rect x="61" y="346" width="1" height="1" fill="#ffffff"/><rect x="91" y="354" width="1" height="1" fill="#ffffff"/><rect x="205" y="341" width="1" height="1" fill="#ffffff"/><rect x="101" y="353" width="1" height="1" fill="#ffffff"/><rect x="77" y="359" width="1" height="1" fill="#ffffff"/><rect x="203" y="340" width="1" height="1" fill="#ffffff"/><rect x="177" y="346" width="1" height="1" fill="#ffffff"/><rect x="159" y="343" width="1" height="1" fill="#ffffff"/><rect x="100" y="349" width="1" height="1" fill="#ffffff"/><rect x="77" y="344" width="1" height="1" fill="#ffffff"/><rect x="163" y="347" width="1" height="1" fill="#ffffff"/><rect x="87" y="344" width="1" height="1" fill="#ffffff"/><rect x="195" y="341" width="1" height="1" fill="#ffffff"/><rect x="78" y="352" width="1" height="1" fill="#ffffff"/><rect x="169" y="345" width="1" height="1" fill="#ffffff"/><rect x="144" y="344" width="1" height="1" fill="#ffffff"/><rect x="86" y="344" width="1" height="1" fill="#ffffff"/><rect x="168" y="346" width="1" height="1" fill="#ffffff"/><rect x="114" y="341" width="1" height="1" fill="#ffffff"/><rect x="118" y="349" width="1" height="1" fill="#ffffff"/><rect x="97" y="347" width="1" height="1" fill="#ffffff"/><rect x="113" y="345" width="1" height="1" fill="#ffffff"/><rect x="177" y="350" width="1" height="1" fill="#ffffff"/><rect x="188" y="348" width="1" height="1" fill="#ffffff"/><rect x="77" y="352" width="1" height="1" fill="#ffffff"/><rect x="170" y="347" width="1" height="1" fill="#ffffff"/><rect x="172" y="349" width="1" height="1" fill="#ffffff"/><rect x="173" y="344" width="1" height="1" fill="#ffffff"/><rect x="89" y="347" width="1" height="1" fill="#ffffff"/><rect x="146" y="348" width="1" height="1" fill="#ffffff"/><rect x="64" y="354" width="1" height="1" fill="#ffffff"/><rect x="195" y="349" width="1" height="1" fill="#ffffff"/><rect x="148" y="345" width="1" height="1" fill="#ffffff"/><rect x="133" y="343" width="1" height="1" fill="#ffffff"/><rect x="170" y="354" width="1" height="1" fill="#ffffff"/><rect x="134" y="347" width="1" height="1" fill="#ffffff"/><rect x="130" y="350" width="1" height="1" fill="#ffffff"/><rect x="136" y="353" width="1" height="1" fill="#ffffff"/><rect x="127" y="336" width="1" height="1" fill="#ffffff"/><rect x="80" y="343" width="1" height="1" fill="#ffffff"/><rect x="154" y="351" width="1" height="1" fill="#ffffff"/><rect x="71" y="351" width="1" height="1" fill="#ffffff"/><rect x="80" y="359" width="1" height="1" fill="#ffffff"/><rect x="151" y="353" width="1" height="1" fill="#ffffff"/><rect x="112" y="344" width="1" height="1" fill="#ffffff"/><rect x="133" y="343" width="1" height="1" fill="#ffffff"/><rect x="66" y="353" width="1" height="1" fill="#ffffff"/><rect x="135" y="349" width="1" height="1" fill="#ffffff"/><rect x="141" y="341" width="1" height="1" fill="#ffffff"/><rect x="130" y="351" width="1" height="1" fill="#ffffff"/><rect x="121" y="352" width="1" height="1" fill="#ffffff"/><rect x="115" y="358" width="1" height="1" fill="#ffffff"/><rect x="140" y="344" width="1" height="1" fill="#ffffff"/><rect x="91" y="346" width="1" height="1" fill="#ffffff"/><rect x="81" y="345" width="1" height="1" fill="#ffffff"/><rect x="85" y="350" width="1" height="1" fill="#ffffff"/><rect x="85" y="351" width="1" height="1" fill="#ffffff"/><rect x="134" y="348" width="1" height="1" fill="#ffffff"/><rect x="63" y="344" width="1" height="1" fill="#ffffff"/><rect x="67" y="351" width="1" height="1" fill="#ffffff"/><rect x="120" y="361" width="1" height="1" fill="#ffffff"/><rect x="74" y="352" width="1" height="1" fill="#ffffff"/><rect x="85" y="345" width="1" height="1" fill="#ffffff"/><rect x="67" y="345" width="1" height="1" fill="#ffffff"/><rect x="105" y="342" width="1" height="1" fill="#ffffff"/><rect x="100" y="351" width="1" height="1" fill="#ffffff"/><rect x="74" y="342" width="1" height="1" fill="#ffffff"/><rect x="207" y="345" width="1" height="1" fill="#ffffff"/><rect x="73" y="349" width="1" height="1" fill="#ffffff"/><rect x="65" y="337" width="1" height="1" fill="#ffffff"/><rect x="152" y="349" width="1" height="1" fill="#ffffff"/><rect x="189" y="345" width="1" height="1" fill="#ffffff"/><rect x="86" y="356" width="1" height="1" fill="#ffffff"/><rect x="115" y="342" width="1" height="1" fill="#ffffff"/><rect x="94" y="350" width="1" height="1" fill="#ffffff"/><rect x="85" y="342" width="1" height="1" fill="#ffffff"/><rect x="152" y="346" width="1" height="1" fill="#ffffff"/><rect x="83" y="343" width="1" height="1" fill="#ffffff"/><rect x="63" y="340" width="1" height="1" fill="#ffffff"/><rect x="74" y="351" width="1" height="1" fill="#ffffff"/><rect x="188" y="340" width="1" height="1" fill="#ffffff"/><rect x="128" y="339" width="1" height="1" fill="#ffffff"/><rect x="171" y="344" width="1" height="1" fill="#ffffff"/><rect x="75" y="346" width="1" height="1" fill="#ffffff"/><rect x="158" y="346" width="1" height="1" fill="#ffffff"/><rect x="67" y="354" width="1" height="1" fill="#ffffff"/><rect x="61" y="356" width="1" height="1" fill="#ffffff"/><rect x="178" y="351" width="1" height="1" fill="#ffffff"/><rect x="179" y="343" width="1" height="1" fill="#ffffff"/><rect x="72" y="348" width="1" height="1" fill="#ffffff"/><rect x="77" y="364" width="1" height="1" fill="#ffffff"/><rect x="195" y="347" width="1" height="1" fill="#ffffff"/><rect x="130" y="349" width="1" height="1" fill="#ffffff"/><rect x="157" y="355" width="1" height="1" fill="#ffffff"/><rect x="192" y="342" width="1" height="1" fill="#ffffff"/><rect x="76" y="355" width="1" height="1" fill="#ffffff"/><rect x="150" y="348" width="1" height="1" fill="#ffffff"/><rect x="130" y="344" width="1" height="1" fill="#ffffff"/><rect x="71" y="345" width="1" height="1" fill="#ffffff"/><rect x="144" y="351" width="1" height="1" fill="#ffffff"/><rect x="124" y="343" width="1" height="1" fill="#ffffff"/><rect x="110" y="346" width="1" height="1" fill="#ffffff"/><rect x="170" y="355" width="1" height="1" fill="#ffffff"/><rect x="133" y="344" width="1" height="1" fill="#ffffff"/><rect x="121" y="359" width="1" height="1" fill="#ffffff"/><rect x="201" y="345" width="1" height="1" fill="#ffffff"/><rect x="74" y="348" width="1" height="1" fill="#ffffff"/><rect x="157" y="343" width="1" height="1" fill="#ffffff"/><rect x="173" y="345" width="1" height="1" fill="#ffffff"/><rect x="172" y="351" width="1" height="1" fill="#ffffff"/><rect x="103" y="352" width="1" height="1" fill="#ffffff"/><rect x="71" y="352" width="1" height="1" fill="#ffffff"/><rect x="116" y="350" width="1" height="1" fill="#ffffff"/><rect x="139" y="351" width="1" height="1" fill="#ffffff"/><rect x="114" y="350" width="1" height="1" fill="#ffffff"/><rect x="105" y="349" width="1" height="1" fill="#ffffff"/><rect x="79" y="359" width="1" height="1" fill="#ffffff"/><rect x="141" y="348" width="1" height="1" fill="#ffffff"/><rect x="177" y="347" width="1" height="1" fill="#ffffff"/><rect x="208" y="347" width="1" height="1" fill="#ffffff"/><rect x="62" y="344" width="1" height="1" fill="#ffffff"/><rect x="142" y="349" width="1" height="1" fill="#ffffff"/><rect x="107" y="348" width="1" height="1" fill="#ffffff"/><rect x="99" y="358" width="1" height="1" fill="#ffffff"/><rect x="182" y="341" width="1" height="1" fill="#ffffff"/><rect x="80" y="349" width="1" height="1" fill="#ffffff"/><rect x="186" y="338" width="1" height="1" fill="#ffffff"/><rect x="102" y="349" width="1" height="1" fill="#ffffff"/><rect x="131" y="342" width="1" height="1" fill="#ffffff"/><rect x="151" y="338" width="1" height="1" fill="#ffffff"/><rect x="138" y="349" width="1" height="1" fill="#ffffff"/><rect x="122" y="344" width="1" height="1" fill="#ffffff"/><rect x="83" y="346" width="1" height="1" fill="#ffffff"/><rect x="189" y="350" width="1" height="1" fill="#ffffff"/><rect x="143" y="346" width="1" height="1" fill="#ffffff"/><rect x="102" y="345" width="1" height="1" fill="#ffffff"/><rect x="161" y="337" width="1" height="1" fill="#ffffff"/><rect x="138" y="357" width="1" height="1" fill="#ffffff"/><rect x="87" y="341" width="1" height="1" fill="#ffffff"/><rect x="203" y="344" width="1" height="1" fill="#ffffff"/><rect x="79" y="354" width="1" height="1" fill="#ffffff"/><rect x="72" y="351" width="1" height="1" fill="#ffffff"/><rect x="172" y="349" width="1" height="1" fill="#ffffff"/><rect x="60" y="342" width="1" height="1" fill="#ffffff"/><rect x="100" y="350" width="1" height="1" fill="#ffffff"/><rect x="67" y="351" width="1" height="1" fill="#ffffff"/><rect x="197" y="355" width="1" height="1" fill="#ffffff"/><rect x="68" y="342" width="1" height="1" fill="#ffffff"/><rect x="86" y="353" width="1" height="1" fill="#ffffff"/><rect x="141" y="345" width="1" height="1" fill="#ffffff"/><rect x="79" y="351" width="1" height="1" fill="#ffffff"/><rect x="199" y="347" width="1" height="1" fill="#ffffff"/><rect x="97" y="341" width="1" height="1" fill="#ffffff"/><rect x="204" y="339" width="1" height="1" fill="#ffffff"/><rect x="63" y="350" width="1" height="1" fill="#ffffff"/><rect x="173" y="347" width="1" height="1" fill="#ffffff"/><rect x="141" y="341" width="1" height="1" fill="#ffffff"/><rect x="141" y="349" width="1" height="1" fill="#ffffff"/><rect x="87" y="359" width="1" height="1" fill="#ffffff"/><rect x="100" y="346" width="1" height="1" fill="#ffffff"/><rect x="68" y="355" width="1" height="1" fill="#ffffff"/><rect x="77" y="348" width="1" height="1" fill="#ffffff"/><rect x="192" y="349" width="1" height="1" fill="#ffffff"/><rect x="176" y="350" width="1" height="1" fill="#ffffff"/><rect x="82" y="353" width="1" height="1" fill="#ffffff"/><rect x="109" y="343" width="1" height="1" fill="#ffffff"/><rect x="114" y="348" width="1" height="1" fill="#ffffff"/><rect x="101" y="353" width="1" height="1" fill="#ffffff"/><rect x="111" y="352" width="1" height="1" fill="#ffffff"/><rect x="102" y="354" width="1" height="1" fill="#ffffff"/><rect x="140" y="346" width="1" height="1" fill="#ffffff"/><rect x="70" y="348" width="1" height="1" fill="#ffffff"/><rect x="188" y="346" width="1" height="1" fill="#ffffff"/><rect x="115" y="349" width="1" height="1" fill="#ffffff"/><rect x="125" y="354" width="1" height="1" fill="#ffffff"/><rect x="168" y="344" width="1" height="1" fill="#ffffff"/><rect x="120" y="351" width="1" height="1" fill="#ffffff"/><rect x="159" y="351" width="1" height="1" fill="#ffffff"/><rect x="93" y="343" width="1" height="1" fill="#ffffff"/><rect x="153" y="348" width="1" height="1" fill="#ffffff"/><rect x="103" y="350" width="1" height="1" fill="#ffffff"/><rect x="141" y="352" width="1" height="1" fill="#ffffff"/><rect x="185" y="343" width="1" height="1" fill="#ffffff"/><rect x="198" y="340" width="1" height="1" fill="#ffffff"/><rect x="193" y="348" width="1" height="1" fill="#ffffff"/><rect x="132" y="350" width="1" height="1" fill="#ffffff"/><rect x="185" y="344" width="1" height="1" fill="#ffffff"/><rect x="72" y="354" width="1" height="1" fill="#ffffff"/><rect x="186" y="346" width="1" height="1" fill="#ffffff"/><rect x="101" y="343" width="1" height="1" fill="#ffffff"/><rect x="155" y="350" width="1" height="1" fill="#ffffff"/><rect x="126" y="359" width="1" height="1" fill="#ffffff"/><rect x="72" y="358" width="1" height="1" fill="#ffffff"/><rect x="174" y="348" width="1" height="1" fill="#ffffff"/><rect x="132" y="347" width="1" height="1" fill="#ffffff"/><rect x="195" y="347" width="1" height="1" fill="#ffffff"/><rect x="148" y="343" width="1" height="1" fill="#ffffff"/><rect x="90" y="347" width="1" height="1" fill="#ffffff"/><rect x="139" y="345" width="1" height="1" fill="#ffffff"/><rect x="131" y="346" width="1" height="1" fill="#ffffff"/><rect x="141" y="344" width="1" height="1" fill="#ffffff"/><rect x="140" y="360" width="1" height="1" fill="#ffffff"/><rect x="105" y="350" width="1" height="1" fill="#ffffff"/><rect x="154" y="345" width="1" height="1" fill="#ffffff"/><rect x="176" y="353" width="1" height="1" fill="#ffffff"/><rect x="90" y="343" width="1" height="1" fill="#ffffff"/><rect x="125" y="346" width="1" height="1" fill="#ffffff"/><rect x="92" y="352" width="1" height="1" fill="#ffffff"/><rect x="202" y="351" width="1" height="1" fill="#ffffff"/><rect x="92" y="357" width="1" height="1" fill="#ffffff"/><rect x="65" y="344" width="1" height="1" fill="#ffffff"/><rect x="186" y="346" width="1" height="1" fill="#ffffff"/><rect x="120" y="345" width="1" height="1" fill="#ffffff"/><rect x="100" y="350" width="1" height="1" fill="#ffffff"/><rect x="111" y="351" width="1" height="1" fill="#ffffff"/><rect x="145" y="349" width="1" height="1" fill="#ffffff"/><rect x="166" y="348" width="1" height="1" fill="#ffffff"/><rect x="86" y="357" width="1" height="1" fill="#ffffff"/><rect x="119" y="341" width="1" height="1" fill="#ffffff"/><rect x="127" y="346" width="1" height="1" fill="#ffffff"/><rect x="179" y="349" width="1" height="1" fill="#ffffff"/><rect x="100" y="343" width="1" height="1" fill="#ffffff"/><rect x="133" y="351" width="1" height="1" fill="#ffffff"/><rect x="171" y="352" width="1" height="1" fill="#ffffff"/><rect x="76" y="338" width="1" height="1" fill="#ffffff"/><rect x="141" y="345" width="1" height="1" fill="#ffffff"/><rect x="127" y="341" width="1" height="1" fill="#ffffff"/><rect x="90" y="349" width="1" height="1" fill="#ffffff"/><rect x="175" y="343" width="1" height="1" fill="#ffffff"/><rect x="194" y="344" width="1" height="1" fill="#ffffff"/><rect x="61" y="341" width="1" height="1" fill="#ffffff"/><rect x="171" y="343" width="1" height="1" fill="#ffffff"/><rect x="97" y="353" width="1" height="1" fill="#ffffff"/><rect x="145" y="345" width="1" height="1" fill="#ffffff"/><rect x="108" y="350" width="1" height="1" fill="#ffffff"/><rect x="86" y="346" width="1" height="1" fill="#ffffff"/><rect x="147" y="349" width="1" height="1" fill="#ffffff"/><rect x="68" y="345" width="1" height="1" fill="#ffffff"/><rect x="85" y="349" width="1" height="1" fill="#ffffff"/><rect x="141" y="356" width="1" height="1" fill="#ffffff"/><rect x="120" y="343" width="1" height="1" fill="#ffffff"/><rect x="102" y="343" width="1" height="1" fill="#ffffff"/><rect x="125" y="347" width="1" height="1" fill="#ffffff"/><rect x="146" y="359" width="1" height="1" fill="#ffffff"/><rect x="90" y="351" width="1" height="1" fill="#ffffff"/><rect x="74" y="346" width="1" height="1" fill="#ffffff"/><rect x="109" y="348" width="1" height="1" fill="#ffffff"/><rect x="100" y="345" width="1" height="1" fill="#ffffff"/><rect x="116" y="354" width="1" height="1" fill="#ffffff"/><rect x="164" y="341" width="1" height="1" fill="#ffffff"/><rect x="182" y="346" width="1" height="1" fill="#ffffff"/><rect x="118" y="354" width="1" height="1" fill="#ffffff"/><rect x="85" y="346" width="1" height="1" fill="#ffffff"/><rect x="188" y="345" width="1" height="1" fill="#ffffff"/><rect x="144" y="342" width="1" height="1" fill="#ffffff"/><rect x="172" y="349" width="1" height="1" fill="#ffffff"/><rect x="172" y="349" width="1" height="1" fill="#ffffff"/><rect x="151" y="351" width="1" height="1" fill="#ffffff"/><rect x="80" y="341" width="1" height="1" fill="#ffffff"/><rect x="61" y="341" width="1" height="1" fill="#ffffff"/><rect x="152" y="350" width="1" height="1" fill="#ffffff"/><rect x="166" y="350" width="1" height="1" fill="#ffffff"/><rect x="85" y="349" width="1" height="1" fill="#ffffff"/><rect x="138" y="341" width="1" height="1" fill="#ffffff"/><rect x="181" y="356" width="1" height="1" fill="#ffffff"/><rect x="182" y="340" width="1" height="1" fill="#ffffff"/><rect x="94" y="351" width="1" height="1" fill="#ffffff"/><rect x="181" y="344" width="1" height="1" fill="#ffffff"/><rect x="74" y="353" width="1" height="1" fill="#ffffff"/><rect x="147" y="341" width="1" height="1" fill="#ffffff"/><rect x="63" y="347" width="1" height="1" fill="#ffffff"/><rect x="111" y="350" width="1" height="1" fill="#ffffff"/><rect x="175" y="351" width="1" height="1" fill="#ffffff"/><rect x="160" y="346" width="1" height="1" fill="#ffffff"/><rect x="106" y="342" width="1" height="1" fill="#ffffff"/><rect x="148" y="347" width="1" height="1" fill="#ffffff"/><rect x="126" y="361" width="1" height="1" fill="#ffffff"/><rect x="78" y="342" width="1" height="1" fill="#ffffff"/><rect x="200" y="345" width="1" height="1" fill="#ffffff"/><rect x="61" y="349" width="1" height="1" fill="#ffffff"/><rect x="67" y="347" width="1" height="1" fill="#ffffff"/><rect x="105" y="344" width="1" height="1" fill="#ffffff"/><rect x="89" y="357" width="1" height="1" fill="#ffffff"/><rect x="176" y="350" width="1" height="1" fill="#ffffff"/><rect x="155" y="353" width="1" height="1" fill="#ffffff"/><rect x="206" y="348" width="1" height="1" fill="#ffffff"/><rect x="70" y="343" width="1" height="1" fill="#ffffff"/><rect x="168" y="337" width="1" height="1" fill="#ffffff"/><rect x="119" y="341" width="1" height="1" fill="#ffffff"/><rect x="106" y="350" width="1" height="1" fill="#ffffff"/><rect x="99" y="344" width="1" height="1" fill="#ffffff"/><rect x="158" y="347" width="1" height="1" fill="#ffffff"/><rect x="68" y="350" width="1" height="1" fill="#ffffff"/><rect x="148" y="344" width="1" height="1" fill="#ffffff"/><rect x="74" y="346" width="1" height="1" fill="#ffffff"/><rect x="136" y="347" width="1" height="1" fill="#ffffff"/><rect x="111" y="359" width="1" height="1" fill="#ffffff"/><rect x="66" y="348" width="1" height="1" fill="#ffffff"/><rect x="170" y="339" width="1" height="1" fill="#ffffff"/><rect x="93" y="349" width="1" height="1" fill="#ffffff"/><rect x="157" y="350" width="1" height="1" fill="#ffffff"/><rect x="75" y="350" width="1" height="1" fill="#ffffff"/><rect x="136" y="342" width="1" height="1" fill="#ffffff"/><rect x="90" y="342" width="1" height="1" fill="#ffffff"/><rect x="199" y="349" width="1" height="1" fill="#ffffff"/><rect x="80" y="340" width="1" height="1" fill="#ffffff"/><rect x="104" y="353" width="1" height="1" fill="#ffffff"/><rect x="197" y="343" width="1" height="1" fill="#ffffff"/><rect x="186" y="347" width="1" height="1" fill="#ffffff"/><rect x="107" y="337" width="1" height="1" fill="#ffffff"/><rect x="108" y="337" width="1" height="1" fill="#ffffff"/><rect x="73" y="360" width="1" height="1" fill="#ffffff"/><rect x="97" y="351" width="1" height="1" fill="#ffffff"/><rect x="196" y="355" width="1" height="1" fill="#ffffff"/><rect x="106" y="350" width="1" height="1" fill="#ffffff"/><rect x="120" y="354" width="1" height="1" fill="#ffffff"/><rect x="105" y="355" width="1" height="1" fill="#ffffff"/><rect x="184" y="338" width="1" height="1" fill="#ffffff"/><rect x="144" y="351" width="1" height="1" fill="#ffffff"/><rect x="197" y="348" width="1" height="1" fill="#ffffff"/><rect x="107" y="347" width="1" height="1" fill="#ffffff"/><rect x="76" y="354" width="1" height="1" fill="#ffffff"/><rect x="159" y="344" width="1" height="1" fill="#ffffff"/><rect x="98" y="353" width="1" height="1" fill="#ffffff"/><rect x="192" y="349" width="1" height="1" fill="#ffffff"/><rect x="85" y="347" width="1" height="1" fill="#ffffff"/><rect x="142" y="349" width="1" height="1" fill="#ffffff"/><rect x="110" y="346" width="1" height="1" fill="#ffffff"/><rect x="126" y="353" width="1" height="1" fill="#ffffff"/><rect x="133" y="349" width="1" height="1" fill="#ffffff"/><rect x="132" y="349" width="1" height="1" fill="#ffffff"/><rect x="138" y="350" width="1" height="1" fill="#ffffff"/><rect x="115" y="344" width="1" height="1" fill="#ffffff"/><rect x="142" y="341" width="1" height="1" fill="#ffffff"/><rect x="131" y="348" width="1" height="1" fill="#ffffff"/><rect x="88" y="351" width="1" height="1" fill="#ffffff"/><rect x="86" y="348" width="1" height="1" fill="#ffffff"/><rect x="99" y="354" width="1" height="1" fill="#ffffff"/><rect x="188" y="348" width="1" height="1" fill="#ffffff"/><rect x="208" y="349" width="1" height="1" fill="#ffffff"/><rect x="174" y="347" width="1" height="1" fill="#ffffff"/><rect x="173" y="351" width="1" height="1" fill="#ffffff"/><rect x="143" y="356" width="1" height="1" fill="#ffffff"/><rect x="73" y="355" width="1" height="1" fill="#ffffff"/><rect x="102" y="348" width="1" height="1" fill="#ffffff"/><rect x="168" y="345" width="1" height="1" fill="#ffffff"/><rect x="137" y="350" width="1" height="1" fill="#ffffff"/><rect x="173" y="345" width="1" height="1" fill="#ffffff"/><rect x="176" y="346" width="1" height="1" fill="#ffffff"/><rect x="92" y="346" width="1" height="1" fill="#ffffff"/><rect x="127" y="346" width="1" height="1" fill="#ffffff"/><rect x="161" y="351" width="1" height="1" fill="#ffffff"/><rect x="190" y="351" width="1" height="1" fill="#ffffff"/><rect x="95" y="354" width="1" height="1" fill="#ffffff"/><rect x="119" y="357" width="1" height="1" fill="#ffffff"/><rect x="166" y="345" width="1" height="1" fill="#ffffff"/><rect x="178" y="349" width="1" height="1" fill="#ffffff"/><rect x="71" y="358" width="1" height="1" fill="#ffffff"/><rect x="125" y="348" width="1" height="1" fill="#ffffff"/><rect x="151" y="349" width="1" height="1" fill="#ffffff"/><rect x="151" y="343" width="1" height="1" fill="#ffffff"/><rect x="135" y="342" width="1" height="1" fill="#ffffff"/><rect x="89" y="348" width="1" height="1" fill="#ffffff"/><rect x="105" y="349" width="1" height="1" fill="#ffffff"/><rect x="127" y="346" width="1" height="1" fill="#ffffff"/><rect x="90" y="348" width="1" height="1" fill="#ffffff"/><rect x="147" y="349" width="1" height="1" fill="#ffffff"/><rect x="87" y="353" width="1" height="1" fill="#ffffff"/><rect x="145" y="358" width="1" height="1" fill="#ffffff"/><rect x="160" y="349" width="1" height="1" fill="#ffffff"/><rect x="126" y="341" width="1" height="1" fill="#ffffff"/><rect x="66" y="351" width="1" height="1" fill="#ffffff"/><rect x="155" y="343" width="1" height="1" fill="#ffffff"/><rect x="135" y="351" width="1" height="1" fill="#ffffff"/><rect x="69" y="344" width="1" height="1" fill="#ffffff"/><rect x="115" y="343" width="1" height="1" fill="#ffffff"/><rect x="65" y="348" width="1" height="1" fill="#ffffff"/><rect x="74" y="354" width="1" height="1" fill="#ffffff"/><rect x="168" y="342" width="1" height="1" fill="#ffffff"/><rect x="81" y="345" width="1" height="1" fill="#ffffff"/><rect x="97" y="355" width="1" height="1" fill="#ffffff"/><rect x="82" y="341" width="1" height="1" fill="#ffffff"/><rect x="166" y="356" width="1" height="1" fill="#ffffff"/><rect x="153" y="350" width="1" height="1" fill="#ffffff"/><rect x="78" y="348" width="1" height="1" fill="#ffffff"/><rect x="181" y="352" width="1" height="1" fill="#ffffff"/><rect x="193" y="349" width="1" height="1" fill="#ffffff"/><rect x="164" y="347" width="1" height="1" fill="#ffffff"/><rect x="116" y="347" width="1" height="1" fill="#ffffff"/><rect x="165" y="341" width="1" height="1" fill="#ffffff"/><rect x="137" y="347" width="1" height="1" fill="#ffffff"/><rect x="114" y="338" width="1" height="1" fill="#ffffff"/><rect x="94" y="349" width="1" height="1" fill="#ffffff"/><rect x="133" y="347" width="1" height="1" fill="#ffffff"/><rect x="194" y="347" width="1" height="1" fill="#ffffff"/><rect x="175" y="344" width="1" height="1" fill="#ffffff"/><rect x="92" y="351" width="1" height="1" fill="#ffffff"/><rect x="147" y="349" width="1" height="1" fill="#ffffff"/><rect x="117" y="343" width="1" height="1" fill="#ffffff"/><rect x="138" y="345" width="1" height="1" fill="#ffffff"/><rect x="89" y="342" width="1" height="1" fill="#ffffff"/><rect x="184" y="344" width="1" height="1" fill="#ffffff"/><rect x="139" y="344" width="1" height="1" fill="#ffffff"/><rect x="149" y="340" width="1" height="1" fill="#ffffff"/><rect x="209" y="347" width="1" height="1" fill="#ffffff"/><rect x="146" y="353" width="1" height="1" fill="#ffffff"/><rect x="189" y="344" width="1" height="1" fill="#ffffff"/><rect x="180" y="342" width="1" height="1" fill="#ffffff"/><rect x="154" y="342" width="1" height="1" fill="#ffffff"/><rect x="139" y="347" width="1" height="1" fill="#ffffff"/><rect x="131" y="359" width="1" height="1" fill="#ffffff"/><rect x="118" y="345" width="1" height="1" fill="#ffffff"/><rect x="176" y="346" width="1" height="1" fill="#ffffff"/><rect x="72" y="350" width="1" height="1" fill="#ffffff"/><rect x="134" y="347" width="1" height="1" fill="#ffffff"/><rect x="124" y="353" width="1" height="1" fill="#ffffff"/><rect x="183" y="342" width="1" height="1" fill="#ffffff"/><rect x="70" y="351" width="1" height="1" fill="#ffffff"/><rect x="177" y="350" width="1" height="1" fill="#ffffff"/><rect x="149" y="351" width="1" height="1" fill="#ffffff"/><rect x="175" y="349" width="1" height="1" fill="#ffffff"/><rect x="108" y="342" width="1" height="1" fill="#ffffff"/><rect x="94" y="348" width="1" height="1" fill="#ffffff"/><rect x="90" y="353" width="1" height="1" fill="#ffffff"/><rect x="123" y="344" width="1" height="1" fill="#ffffff"/><rect x="66" y="347" width="1" height="1" fill="#ffffff"/><rect x="186" y="341" width="1" height="1" fill="#ffffff"/><rect x="127" y="351" width="1" height="1" fill="#ffffff"/><rect x="136" y="350" width="1" height="1" fill="#ffffff"/><rect x="95" y="346" width="1" height="1" fill="#ffffff"/><rect x="69" y="345" width="1" height="1" fill="#ffffff"/><rect x="154" y="349" width="1" height="1" fill="#ffffff"/><rect x="86" y="344" width="1" height="1" fill="#ffffff"/><rect x="63" y="357" width="1" height="1" fill="#ffffff"/><rect x="190" y="350" width="1" height="1" fill="#ffffff"/><rect x="144" y="352" width="1" height="1" fill="#ffffff"/><rect x="124" y="342" width="1" height="1" fill="#ffffff"/><rect x="73" y="349" width="1" height="1" fill="#ffffff"/><rect x="172" y="349" width="1" height="1" fill="#ffffff"/><rect x="205" y="343" width="1" height="1" fill="#ffffff"/><rect x="79" y="353" width="1" height="1" fill="#ffffff"/><rect x="122" y="338" width="1" height="1" fill="#ffffff"/><rect x="77" y="350" width="1" height="1" fill="#ffffff"/><rect x="64" y="354" width="1" height="1" fill="#ffffff"/><rect x="131" y="346" width="1" height="1" fill="#ffffff"/><rect x="76" y="344" width="1" height="1" fill="#ffffff"/><rect x="150" y="357" width="1" height="1" fill="#ffffff"/><rect x="70" y="354" width="1" height="1" fill="#ffffff"/><rect x="155" y="354" width="1" height="1" fill="#ffffff"/><rect x="184" y="345" width="1" height="1" fill="#ffffff"/><rect x="83" y="343" width="1" height="1" fill="#ffffff"/><rect x="91" y="348" width="1" height="1" fill="#ffffff"/><rect x="143" y="343" width="1" height="1" fill="#ffffff"/><rect x="83" y="348" width="1" height="1" fill="#ffffff"/><rect x="139" y="346" width="1" height="1" fill="#ffffff"/><rect x="163" y="348" width="1" height="1" fill="#ffffff"/><rect x="130" y="353" width="1" height="1" fill="#ffffff"/><rect x="198" y="347" width="1" height="1" fill="#ffffff"/><rect x="166" y="339" width="1" height="1" fill="#ffffff"/><rect x="116" y="348" width="1" height="1" fill="#ffffff"/><rect x="149" y="343" width="1" height="1" fill="#ffffff"/><rect x="180" y="344" width="1" height="1" fill="#ffffff"/><rect x="173" y="353" width="1" height="1" fill="#ffffff"/><rect x="72" y="357" width="1" height="1" fill="#ffffff"/><rect x="130" y="346" width="1" height="1" fill="#ffffff"/><rect x="95" y="353" width="1" height="1" fill="#ffffff"/><rect x="84" y="341" width="1" height="1" fill="#ffffff"/><rect x="117" y="340" width="1" height="1" fill="#ffffff"/><rect x="172" y="346" width="1" height="1" fill="#ffffff"/><rect x="103" y="349" width="1" height="1" fill="#ffffff"/><rect x="88" y="347" width="1" height="1" fill="#ffffff"/><rect x="132" y="341" width="1" height="1" fill="#ffffff"/><rect x="83" y="363" width="1" height="1" fill="#ffffff"/><rect x="75" y="349" width="1" height="1" fill="#ffffff"/><rect x="166" y="348" width="1" height="1" fill="#ffffff"/><rect x="113" y="352" width="1" height="1" fill="#ffffff"/><rect x="107" y="341" width="1" height="1" fill="#ffffff"/><rect x="158" y="342" width="1" height="1" fill="#ffffff"/><rect x="91" y="345" width="1" height="1" fill="#ffffff"/><rect x="72" y="350" width="1" height="1" fill="#ffffff"/><rect x="148" y="353" width="1" height="1" fill="#ffffff"/><rect x="189" y="348" width="1" height="1" fill="#ffffff"/><rect x="200" y="347" width="1" height="1" fill="#ffffff"/><rect x="83" y="347" width="1" height="1" fill="#ffffff"/><rect x="74" y="352" width="1" height="1" fill="#ffffff"/><rect x="97" y="350" width="1" height="1" fill="#ffffff"/><rect x="111" y="346" width="1" height="1" fill="#ffffff"/><rect x="191" y="346" width="1" height="1" fill="#ffffff"/><rect x="108" y="351" width="1" height="1" fill="#ffffff"/><rect x="184" y="343" width="1" height="1" fill="#ffffff"/><rect x="192" y="348" width="1" height="1" fill="#ffffff"/><rect x="112" y="350" width="1" height="1" fill="#ffffff"/><rect x="79" y="353" width="1" height="1" fill="#ffffff"/><rect x="154" y="341" width="1" height="1" fill="#ffffff"/><rect x="89" y="348" width="1" height="1" fill="#ffffff"/><rect x="90" y="347" width="1" height="1" fill="#ffffff"/><rect x="155" y="350" width="1" height="1" fill="#ffffff"/><rect x="112" y="357" width="1" height="1" fill="#ffffff"/><rect x="71" y="348" width="1" height="1" fill="#ffffff"/><rect x="67" y="350" width="1" height="1" fill="#ffffff"/><rect x="190" y="350" width="1" height="1" fill="#ffffff"/><rect x="164" y="341" width="1" height="1" fill="#ffffff"/><rect x="133" y="343" width="1" height="1" fill="#ffffff"/><rect x="198" y="344" width="1" height="1" fill="#ffffff"/><rect x="76" y="356" width="1" height="1" fill="#ffffff"/><rect x="111" y="347" width="1" height="1" fill="#ffffff"/><rect x="106" y="344" width="1" height="1" fill="#ffffff"/><rect x="87" y="346" width="1" height="1" fill="#ffffff"/><rect x="139" y="348" width="1" height="1" fill="#ffffff"/><rect x="141" y="348" width="1" height="1" fill="#ffffff"/><rect x="196" y="349" width="1" height="1" fill="#ffffff"/><rect x="123" y="352" width="1" height="1" fill="#ffffff"/><rect x="80" y="355" width="1" height="1" fill="#ffffff"/><rect x="102" y="349" width="1" height="1" fill="#ffffff"/><rect x="181" y="347" width="1" height="1" fill="#ffffff"/><rect x="73" y="350" width="1" height="1" fill="#ffffff"/><rect x="82" y="340" width="1" height="1" fill="#ffffff"/><rect x="101" y="342" width="1" height="1" fill="#ffffff"/><rect x="166" y="349" width="1" height="1" fill="#ffffff"/><rect x="136" y="348" width="1" height="1" fill="#ffffff"/><rect x="160" y="346" width="1" height="1" fill="#ffffff"/><rect x="93" y="360" width="1" height="1" fill="#ffffff"/><rect x="79" y="351" width="1" height="1" fill="#ffffff"/><rect x="136" y="344" width="1" height="1" fill="#ffffff"/><rect x="112" y="349" width="1" height="1" fill="#ffffff"/><rect x="151" y="350" width="1" height="1" fill="#ffffff"/><rect x="131" y="342" width="1" height="1" fill="#ffffff"/><rect x="188" y="342" width="1" height="1" fill="#ffffff"/><rect x="111" y="356" width="1" height="1" fill="#ffffff"/><rect x="63" y="347" width="1" height="1" fill="#ffffff"/><rect x="126" y="346" width="1" height="1" fill="#ffffff"/><rect x="98" y="350" width="1" height="1" fill="#ffffff"/><rect x="140" y="345" width="1" height="1" fill="#ffffff"/><rect x="72" y="360" width="1" height="1" fill="#ffffff"/><rect x="159" y="351" width="1" height="1" fill="#ffffff"/><rect x="96" y="350" width="1" height="1" fill="#ffffff"/><rect x="63" y="355" width="1" height="1" fill="#ffffff"/><rect x="124" y="343" width="1" height="1" fill="#ffffff"/><rect x="151" y="339" width="1" height="1" fill="#ffffff"/><rect x="129" y="346" width="1" height="1" fill="#ffffff"/><rect x="136" y="346" width="1" height="1" fill="#ffffff"/><rect x="97" y="351" width="1" height="1" fill="#ffffff"/><rect x="103" y="344" width="1" height="1" fill="#ffffff"/><rect x="120" y="345" width="1" height="1" fill="#ffffff"/><rect x="136" y="351" width="1" height="1" fill="#ffffff"/><rect x="202" y="343" width="1" height="1" fill="#ffffff"/><rect x="165" y="345" width="1" height="1" fill="#ffffff"/><rect x="156" y="352" width="1" height="1" fill="#ffffff"/><rect x="159" y="346" width="1" height="1" fill="#ffffff"/><rect x="190" y="345" width="1" height="1" fill="#ffffff"/><rect x="149" y="350" width="1" height="1" fill="#ffffff"/><rect x="190" y="349" width="1" height="1" fill="#ffffff"/><rect x="165" y="341" width="1" height="1" fill="#ffffff"/><rect x="182" y="352" width="1" height="1" fill="#ffffff"/><rect x="102" y="357" width="1" height="1" fill="#ffffff"/><rect x="151" y="340" width="1" height="1" fill="#ffffff"/><rect x="193" y="347" width="1" height="1" fill="#ffffff"/><rect x="126" y="347" width="1" height="1" fill="#ffffff"/><rect x="104" y="341" width="1" height="1" fill="#ffffff"/><rect x="64" y="349" width="1" height="1" fill="#ffffff"/><rect x="73" y="360" width="1" height="1" fill="#ffffff"/><rect x="116" y="341" width="1" height="1" fill="#ffffff"/><rect x="108" y="347" width="1" height="1" fill="#ffffff"/><rect x="60" y="352" width="1" height="1" fill="#ffffff"/><rect x="106" y="344" width="1" height="1" fill="#ffffff"/><rect x="117" y="344" width="1" height="1" fill="#ffffff"/><rect x="178" y="344" width="1" height="1" fill="#ffffff"/><rect x="174" y="349" width="1" height="1" fill="#ffffff"/><rect x="79" y="351" width="1" height="1" fill="#ffffff"/><rect x="178" y="336" width="1" height="1" fill="#ffffff"/><rect x="179" y="341" width="1" height="1" fill="#ffffff"/><rect x="159" y="346" width="1" height="1" fill="#ffffff"/><rect x="104" y="350" width="1" height="1" fill="#ffffff"/><rect x="196" y="345" width="1" height="1" fill="#ffffff"/><rect x="199" y="340" width="1" height="1" fill="#ffffff"/><rect x="65" y="349" width="1" height="1" fill="#ffffff"/><rect x="149" y="348" width="1" height="1" fill="#ffffff"/><rect x="97" y="353" width="1" height="1" fill="#ffffff"/><rect x="156" y="348" width="1" height="1" fill="#ffffff"/><rect x="183" y="355" width="1" height="1" fill="#ffffff"/><rect x="155" y="347" width="1" height="1" fill="#ffffff"/><rect x="173" y="345" width="1" height="1" fill="#ffffff"/><rect x="170" y="350" width="1" height="1" fill="#ffffff"/><rect x="83" y="344" width="1" height="1" fill="#ffffff"/><rect x="150" y="352" width="1" height="1" fill="#ffffff"/><rect x="157" y="348" width="1" height="1" fill="#ffffff"/><rect x="63" y="358" width="1" height="1" fill="#ffffff"/><rect x="170" y="350" width="1" height="1" fill="#ffffff"/><rect x="91" y="354" width="1" height="1" fill="#ffffff"/><rect x="189" y="343" width="1" height="1" fill="#ffffff"/><rect x="117" y="353" width="1" height="1" fill="#ffffff"/><rect x="118" y="348" width="1" height="1" fill="#ffffff"/><rect x="174" y="346" width="1" height="1" fill="#ffffff"/><rect x="69" y="348" width="1" height="1" fill="#ffffff"/><rect x="88" y="352" width="1" height="1" fill="#ffffff"/><rect x="143" y="342" width="1" height="1" fill="#ffffff"/><rect x="137" y="355" width="1" height="1" fill="#ffffff"/><rect x="121" y="353" width="1" height="1" fill="#ffffff"/><rect x="142" y="358" width="1" height="1" fill="#ffffff"/><rect x="153" y="346" width="1" height="1" fill="#ffffff"/><rect x="196" y="347" width="1" height="1" fill="#ffffff"/><rect x="101" y="362" width="1" height="1" fill="#ffffff"/><rect x="195" y="353" width="1" height="1" fill="#ffffff"/><rect x="142" y="346" width="1" height="1" fill="#ffffff"/><rect x="185" y="347" width="1" height="1" fill="#ffffff"/><rect x="61" y="353" width="1" height="1" fill="#ffffff"/><rect x="166" y="349" width="1" height="1" fill="#ffffff"/><rect x="73" y="349" width="1" height="1" fill="#ffffff"/><rect x="87" y="348" width="1" height="1" fill="#ffffff"/><rect x="185" y="342" width="1" height="1" fill="#ffffff"/><rect x="66" y="345" width="1" height="1" fill="#ffffff"/><rect x="191" y="339" width="1" height="1" fill="#ffffff"/><rect x="153" y="351" width="1" height="1" fill="#ffffff"/><rect x="111" y="338" width="1" height="1" fill="#ffffff"/><rect x="180" y="347" width="1" height="1" fill="#ffffff"/><rect x="137" y="350" width="1" height="1" fill="#ffffff"/><rect x="141" y="349" width="1" height="1" fill="#ffffff"/><rect x="70" y="347" width="1" height="1" fill="#ffffff"/><rect x="64" y="347" width="1" height="1" fill="#ffffff"/><rect x="82" y="354" width="1" height="1" fill="#ffffff"/><rect x="127" y="346" width="1" height="1" fill="#ffffff"/><rect x="187" y="345" width="1" height="1" fill="#ffffff"/><rect x="189" y="348" width="1" height="1" fill="#ffffff"/><rect x="79" y="348" width="1" height="1" fill="#ffffff"/><rect x="195" y="352" width="1" height="1" fill="#ffffff"/><rect x="164" y="345" width="1" height="1" fill="#ffffff"/><rect x="155" y="343" width="1" height="1" fill="#ffffff"/><rect x="140" y="339" width="1" height="1" fill="#ffffff"/><rect x="86" y="339" width="1" height="1" fill="#ffffff"/><rect x="150" y="337" width="1" height="1" fill="#ffffff"/><rect x="137" y="348" width="1" height="1" fill="#ffffff"/><rect x="90" y="343" width="1" height="1" fill="#ffffff"/><rect x="72" y="355" width="1" height="1" fill="#ffffff"/><rect x="69" y="356" width="1" height="1" fill="#ffffff"/><rect x="74" y="347" width="1" height="1" fill="#ffffff"/><rect x="107" y="337" width="1" height="1" fill="#ffffff"/><rect x="106" y="351" width="1" height="1" fill="#ffffff"/><rect x="66" y="354" width="1" height="1" fill="#ffffff"/><rect x="188" y="347" width="1" height="1" fill="#ffffff"/><rect x="142" y="343" width="1" height="1" fill="#ffffff"/><rect x="106" y="341" width="1" height="1" fill="#ffffff"/><rect x="113" y="347" width="1" height="1" fill="#ffffff"/><rect x="121" y="350" width="1" height="1" fill="#ffffff"/><rect x="80" y="347" width="1" height="1" fill="#ffffff"/><rect x="154" y="351" width="1" height="1" fill="#ffffff"/><rect x="118" y="351" width="1" height="1" fill="#ffffff"/><rect x="188" y="344" width="1" height="1" fill="#ffffff"/><rect x="150" y="355" width="1" height="1" fill="#ffffff"/><rect x="146" y="346" width="1" height="1" fill="#ffffff"/><rect x="158" y="340" width="1" height="1" fill="#ffffff"/><rect x="130" y="351" width="1" height="1" fill="#ffffff"/><rect x="146" y="344" width="1" height="1" fill="#ffffff"/><rect x="87" y="347" width="1" height="1" fill="#ffffff"/><rect x="128" y="345" width="1" height="1" fill="#ffffff"/><rect x="131" y="347" width="1" height="1" fill="#ffffff"/><rect x="66" y="352" width="1" height="1" fill="#ffffff"/><rect x="106" y="345" width="1" height="1" fill="#ffffff"/><rect x="103" y="347" width="1" height="1" fill="#ffffff"/><rect x="170" y="351" width="1" height="1" fill="#ffffff"/><rect x="89" y="349" width="1" height="1" fill="#ffffff"/><rect x="161" y="340" width="1" height="1" fill="#ffffff"/><rect x="179" y="355" width="1" height="1" fill="#ffffff"/><rect x="165" y="339" width="1" height="1" fill="#ffffff"/><rect x="81" y="346" width="1" height="1" fill="#ffffff"/><rect x="64" y="347" width="1" height="1" fill="#ffffff"/><rect x="83" y="344" width="1" height="1" fill="#ffffff"/><rect x="196" y="343" width="1" height="1" fill="#ffffff"/><rect x="126" y="344" width="1" height="1" fill="#ffffff"/><rect x="99" y="345" width="1" height="1" fill="#ffffff"/><rect x="86" y="342" width="1" height="1" fill="#ffffff"/><rect x="168" y="343" width="1" height="1" fill="#ffffff"/><rect x="175" y="341" width="1" height="1" fill="#ffffff"/><rect x="173" y="344" width="1" height="1" fill="#ffffff"/><rect x="117" y="344" width="1" height="1" fill="#ffffff"/><rect x="174" y="344" width="1" height="1" fill="#ffffff"/><rect x="150" y="352" width="1" height="1" fill="#ffffff"/><rect x="114" y="343" width="1" height="1" fill="#ffffff"/><rect x="124" y="346" width="1" height="1" fill="#ffffff"/><rect x="146" y="343" width="1" height="1" fill="#ffffff"/><rect x="131" y="342" width="1" height="1" fill="#ffffff"/><rect x="171" y="349" width="1" height="1" fill="#ffffff"/><rect x="87" y="354" width="1" height="1" fill="#ffffff"/><rect x="151" y="348" width="1" height="1" fill="#ffffff"/><rect x="202" y="347" width="1" height="1" fill="#ffffff"/><rect x="141" y="343" width="1" height="1" fill="#ffffff"/><rect x="150" y="351" width="1" height="1" fill="#ffffff"/><rect x="98" y="351" width="1" height="1" fill="#ffffff"/><rect x="173" y="349" width="1" height="1" fill="#ffffff"/><rect x="195" y="353" width="1" height="1" fill="#ffffff"/><rect x="93" y="350" width="1" height="1" fill="#ffffff"/><rect x="171" y="345" width="1" height="1" fill="#ffffff"/><rect x="103" y="344" width="1" height="1" fill="#ffffff"/><rect x="97" y="342" width="1" height="1" fill="#ffffff"/><rect x="69" y="352" width="1" height="1" fill="#ffffff"/><rect x="148" y="340" width="1" height="1" fill="#ffffff"/><rect x="73" y="340" width="1" height="1" fill="#ffffff"/><rect x="170" y="349" width="1" height="1" fill="#ffffff"/><rect x="211" y="343" width="1" height="1" fill="#ffffff"/><rect x="114" y="342" width="1" height="1" fill="#ffffff"/><rect x="126" y="349" width="1" height="1" fill="#ffffff"/><rect x="81" y="353" width="1" height="1" fill="#ffffff"/><rect x="135" y="344" width="1" height="1" fill="#ffffff"/><rect x="177" y="347" width="1" height="1" fill="#ffffff"/><rect x="184" y="347" width="1" height="1" fill="#ffffff"/><rect x="63" y="360" width="1" height="1" fill="#ffffff"/><rect x="116" y="349" width="1" height="1" fill="#ffffff"/><rect x="126" y="346" width="1" height="1" fill="#ffffff"/><rect x="160" y="345" width="1" height="1" fill="#ffffff"/><rect x="131" y="352" width="1" height="1" fill="#ffffff"/><rect x="88" y="349" width="1" height="1" fill="#ffffff"/><rect x="180" y="349" width="1" height="1" fill="#ffffff"/><rect x="108" y="346" width="1" height="1" fill="#ffffff"/><rect x="165" y="342" width="1" height="1" fill="#ffffff"/><rect x="135" y="356" width="1" height="1" fill="#ffffff"/><rect x="122" y="352" width="1" height="1" fill="#ffffff"/><rect x="131" y="346" width="1" height="1" fill="#ffffff"/><rect x="137" y="343" width="1" height="1" fill="#ffffff"/><rect x="61" y="355" width="1" height="1" fill="#ffffff"/><rect x="118" y="350" width="1" height="1" fill="#ffffff"/><rect x="97" y="352" width="1" height="1" fill="#ffffff"/><rect x="87" y="355" width="1" height="1" fill="#ffffff"/><rect x="178" y="347" width="1" height="1" fill="#ffffff"/><rect x="142" y="357" width="1" height="1" fill="#ffffff"/><rect x="95" y="353" width="1" height="1" fill="#ffffff"/><rect x="149" y="345" width="1" height="1" fill="#ffffff"/><rect x="61" y="345" width="1" height="1" fill="#ffffff"/><rect x="168" y="349" width="1" height="1" fill="#ffffff"/><rect x="167" y="348" width="1" height="1" fill="#ffffff"/><rect x="156" y="355" width="1" height="1" fill="#ffffff"/><rect x="79" y="348" width="1" height="1" fill="#ffffff"/><rect x="78" y="354" width="1" height="1" fill="#ffffff"/><rect x="116" y="344" width="1" height="1" fill="#ffffff"/><rect x="126" y="347" width="1" height="1" fill="#ffffff"/><rect x="188" y="341" width="1" height="1" fill="#ffffff"/><rect x="173" y="348" width="1" height="1" fill="#ffffff"/><rect x="114" y="353" width="1" height="1" fill="#ffffff"/><rect x="92" y="351" width="1" height="1" fill="#ffffff"/><rect x="184" y="342" width="1" height="1" fill="#ffffff"/><rect x="61" y="344" width="1" height="1" fill="#ffffff"/><rect x="119" y="350" width="1" height="1" fill="#ffffff"/><rect x="194" y="352" width="1" height="1" fill="#ffffff"/><rect x="115" y="344" width="1" height="1" fill="#ffffff"/><rect x="64" y="350" width="1" height="1" fill="#ffffff"/><rect x="162" y="343" width="1" height="1" fill="#ffffff"/><rect x="112" y="345" width="1" height="1" fill="#ffffff"/><rect x="124" y="349" width="1" height="1" fill="#ffffff"/><rect x="98" y="350" width="1" height="1" fill="#ffffff"/><rect x="63" y="340" width="1" height="1" fill="#ffffff"/><rect x="98" y="354" width="1" height="1" fill="#ffffff"/><rect x="194" y="342" width="1" height="1" fill="#ffffff"/><rect x="64" y="349" width="1" height="1" fill="#ffffff"/><rect x="183" y="348" width="1" height="1" fill="#ffffff"/><rect x="173" y="352" width="1" height="1" fill="#ffffff"/><rect x="165" y="345" width="1" height="1" fill="#ffffff"/><rect x="159" y="346" width="1" height="1" fill="#ffffff"/><rect x="127" y="355" width="1" height="1" fill="#ffffff"/><rect x="167" y="346" width="1" height="1" fill="#ffffff"/><rect x="133" y="353" width="1" height="1" fill="#ffffff"/><rect x="169" y="349" width="1" height="1" fill="#ffffff"/><rect x="146" y="351" width="1" height="1" fill="#ffffff"/><rect x="101" y="342" width="1" height="1" fill="#ffffff"/><rect x="145" y="343" width="1" height="1" fill="#ffffff"/><rect x="116" y="350" width="1" height="1" fill="#ffffff"/><rect x="60" y="353" width="1" height="1" fill="#ffffff"/><rect x="145" y="349" width="1" height="1" fill="#ffffff"/><rect x="207" y="342" width="1" height="1" fill="#ffffff"/><rect x="114" y="347" width="1" height="1" fill="#ffffff"/><rect x="103" y="346" width="1" height="1" fill="#ffffff"/><rect x="138" y="349" width="1" height="1" fill="#ffffff"/><rect x="102" y="342" width="1" height="1" fill="#ffffff"/><rect x="205" y="338" width="1" height="1" fill="#ffffff"/><rect x="120" y="346" width="1" height="1" fill="#ffffff"/><rect x="200" y="344" width="1" height="1" fill="#ffffff"/><rect x="141" y="346" width="1" height="1" fill="#ffffff"/><rect x="115" y="344" width="1" height="1" fill="#ffffff"/><rect x="124" y="353" width="1" height="1" fill="#ffffff"/><rect x="98" y="338" width="1" height="1" fill="#ffffff"/><rect x="99" y="348" width="1" height="1" fill="#ffffff"/><rect x="97" y="347" width="1" height="1" fill="#ffffff"/><rect x="153" y="346" width="1" height="1" fill="#ffffff"/><rect x="125" y="339" width="1" height="1" fill="#ffffff"/><rect x="71" y="353" width="1" height="1" fill="#ffffff"/><rect x="79" y="351" width="1" height="1" fill="#ffffff"/><rect x="65" y="357" width="1" height="1" fill="#ffffff"/><rect x="152" y="347" width="1" height="1" fill="#ffffff"/><rect x="184" y="351" width="1" height="1" fill="#ffffff"/><rect x="164" y="353" width="1" height="1" fill="#ffffff"/><rect x="91" y="358" width="1" height="1" fill="#ffffff"/><rect x="178" y="344" width="1" height="1" fill="#ffffff"/><rect x="97" y="354" width="1" height="1" fill="#ffffff"/><rect x="121" y="346" width="1" height="1" fill="#ffffff"/><rect x="159" y="340" width="1" height="1" fill="#ffffff"/><rect x="167" y="347" width="1" height="1" fill="#ffffff"/><rect x="172" y="341" width="1" height="1" fill="#ffffff"/><rect x="161" y="343" width="1" height="1" fill="#ffffff"/><rect x="118" y="344" width="1" height="1" fill="#ffffff"/><rect x="104" y="356" width="1" height="1" fill="#ffffff"/><rect x="98" y="349" width="1" height="1" fill="#ffffff"/><rect x="188" y="342" width="1" height="1" fill="#ffffff"/><rect x="70" y="349" width="1" height="1" fill="#ffffff"/><rect x="186" y="341" width="1" height="1" fill="#ffffff"/><rect x="194" y="340" width="1" height="1" fill="#ffffff"/><rect x="159" y="352" width="1" height="1" fill="#ffffff"/><rect x="155" y="355" width="1" height="1" fill="#ffffff"/><rect x="146" y="351" width="1" height="1" fill="#ffffff"/><rect x="185" y="348" width="1" height="1" fill="#ffffff"/><rect x="191" y="342" width="1" height="1" fill="#ffffff"/><rect x="142" y="350" width="1" height="1" fill="#ffffff"/><rect x="149" y="350" width="1" height="1" fill="#ffffff"/><rect x="189" y="350" width="1" height="1" fill="#ffffff"/><rect x="115" y="344" width="1" height="1" fill="#ffffff"/><rect x="180" y="344" width="1" height="1" fill="#ffffff"/><rect x="125" y="347" width="1" height="1" fill="#ffffff"/><rect x="111" y="342" width="1" height="1" fill="#ffffff"/><rect x="150" y="350" width="1" height="1" fill="#ffffff"/><rect x="92" y="346" width="1" height="1" fill="#ffffff"/><rect x="95" y="351" width="1" height="1" fill="#ffffff"/><rect x="131" y="346" width="1" height="1" fill="#ffffff"/></svg>
<div class="t" style="right:1639px;top:354.5px;font-size:13.5px;color:#d6d6d6;">Tone scraping</div>
<div class="a" style="left:55px;top:372px;width:229px;height:36px;background:#3e3e3e;"></div>
<svg style="left:0;top:0" width="1920" height="1031"><defs><filter id="rcs"><feGaussianBlur stdDeviation="0.6"/></filter></defs><g filter="url(#rcs)"><circle cx="165.2" cy="389.1" r="0.9" fill="#c8c8c8" opacity="0.35"/><circle cx="85.9" cy="392.1" r="0.8" fill="#c8c8c8" opacity="0.39"/><circle cx="79.7" cy="392.5" r="1.2" fill="#c8c8c8" opacity="0.22"/><circle cx="147.5" cy="395.5" r="0.8" fill="#c8c8c8" opacity="0.41"/><circle cx="96.4" cy="381.4" r="1.2" fill="#c8c8c8" opacity="0.15"/><circle cx="151.6" cy="390.2" r="1.1" fill="#c8c8c8" opacity="0.12"/><circle cx="76.9" cy="389.3" r="1.4" fill="#c8c8c8" opacity="0.16"/><circle cx="101.8" cy="387.2" r="1.1" fill="#c8c8c8" opacity="0.30"/><circle cx="213.6" cy="378.5" r="1.3" fill="#c8c8c8" opacity="0.03"/><circle cx="181.7" cy="382.3" r="1.5" fill="#c8c8c8" opacity="0.33"/><circle cx="143.9" cy="391.1" r="1.8" fill="#c8c8c8" opacity="0.29"/><circle cx="184.1" cy="382.1" r="1.6" fill="#c8c8c8" opacity="0.23"/><circle cx="181.3" cy="383.0" r="1.2" fill="#c8c8c8" opacity="0.35"/><circle cx="119.5" cy="392.3" r="0.9" fill="#c8c8c8" opacity="0.29"/><circle cx="106.4" cy="391.6" r="0.8" fill="#c8c8c8" opacity="0.38"/><circle cx="113.2" cy="386.8" r="1.1" fill="#c8c8c8" opacity="0.28"/><circle cx="206.7" cy="387.9" r="1.7" fill="#c8c8c8" opacity="0.04"/><circle cx="184.8" cy="383.1" r="0.9" fill="#c8c8c8" opacity="0.24"/><circle cx="69.4" cy="385.8" r="1.1" fill="#c8c8c8" opacity="0.26"/><circle cx="108.5" cy="379.6" r="1.2" fill="#c8c8c8" opacity="0.23"/><circle cx="158.0" cy="381.1" r="1.5" fill="#c8c8c8" opacity="0.18"/><circle cx="205.7" cy="386.1" r="1.6" fill="#c8c8c8" opacity="0.04"/><circle cx="163.0" cy="385.5" r="0.9" fill="#c8c8c8" opacity="0.39"/><circle cx="85.5" cy="391.3" r="1.6" fill="#c8c8c8" opacity="0.13"/><circle cx="123.7" cy="391.2" r="1.3" fill="#c8c8c8" opacity="0.28"/><circle cx="89.7" cy="388.2" r="1.5" fill="#c8c8c8" opacity="0.40"/><circle cx="108.2" cy="385.6" r="1.4" fill="#c8c8c8" opacity="0.11"/><circle cx="108.3" cy="391.2" r="1.6" fill="#c8c8c8" opacity="0.33"/><circle cx="115.1" cy="385.9" r="0.8" fill="#c8c8c8" opacity="0.27"/><circle cx="125.3" cy="391.8" r="0.9" fill="#c8c8c8" opacity="0.21"/><circle cx="190.6" cy="382.0" r="1.5" fill="#c8c8c8" opacity="0.09"/><circle cx="123.8" cy="380.8" r="1.4" fill="#c8c8c8" opacity="0.41"/><circle cx="103.2" cy="387.7" r="1.6" fill="#c8c8c8" opacity="0.22"/><circle cx="116.5" cy="379.7" r="0.8" fill="#c8c8c8" opacity="0.15"/><circle cx="158.2" cy="384.9" r="1.6" fill="#c8c8c8" opacity="0.12"/><circle cx="109.0" cy="390.5" r="1.7" fill="#c8c8c8" opacity="0.40"/><circle cx="188.3" cy="386.3" r="1.6" fill="#c8c8c8" opacity="0.24"/><circle cx="201.5" cy="396.7" r="1.2" fill="#c8c8c8" opacity="0.08"/><circle cx="199.8" cy="383.1" r="1.4" fill="#c8c8c8" opacity="0.05"/><circle cx="113.1" cy="389.6" r="0.8" fill="#c8c8c8" opacity="0.43"/><circle cx="126.5" cy="384.9" r="1.4" fill="#c8c8c8" opacity="0.39"/><circle cx="196.3" cy="376.6" r="1.7" fill="#c8c8c8" opacity="0.24"/><circle cx="156.6" cy="380.0" r="1.1" fill="#c8c8c8" opacity="0.18"/><circle cx="144.4" cy="390.0" r="1.2" fill="#c8c8c8" opacity="0.25"/><circle cx="80.5" cy="393.4" r="1.1" fill="#c8c8c8" opacity="0.27"/><circle cx="149.7" cy="385.1" r="1.7" fill="#c8c8c8" opacity="0.37"/><circle cx="156.7" cy="390.3" r="1.1" fill="#c8c8c8" opacity="0.27"/><circle cx="209.9" cy="381.3" r="1.0" fill="#c8c8c8" opacity="0.03"/><circle cx="180.9" cy="384.6" r="1.3" fill="#c8c8c8" opacity="0.22"/><circle cx="134.8" cy="388.3" r="1.1" fill="#c8c8c8" opacity="0.18"/><circle cx="110.2" cy="390.3" r="1.0" fill="#c8c8c8" opacity="0.18"/><circle cx="204.6" cy="389.4" r="1.2" fill="#c8c8c8" opacity="0.12"/><circle cx="145.8" cy="386.8" r="1.7" fill="#c8c8c8" opacity="0.28"/><circle cx="79.5" cy="389.2" r="1.6" fill="#c8c8c8" opacity="0.26"/><circle cx="69.6" cy="385.3" r="1.6" fill="#c8c8c8" opacity="0.36"/><circle cx="197.8" cy="381.6" r="0.9" fill="#c8c8c8" opacity="0.18"/><circle cx="164.6" cy="380.8" r="1.3" fill="#c8c8c8" opacity="0.17"/><circle cx="130.1" cy="384.8" r="1.8" fill="#c8c8c8" opacity="0.24"/><circle cx="101.9" cy="389.5" r="1.2" fill="#c8c8c8" opacity="0.34"/><circle cx="125.9" cy="384.3" r="0.9" fill="#c8c8c8" opacity="0.27"/><circle cx="100.4" cy="384.6" r="1.5" fill="#c8c8c8" opacity="0.40"/><circle cx="160.5" cy="387.2" r="1.0" fill="#c8c8c8" opacity="0.34"/><circle cx="69.5" cy="399.0" r="1.8" fill="#c8c8c8" opacity="0.27"/><circle cx="115.6" cy="392.6" r="1.4" fill="#c8c8c8" opacity="0.23"/><circle cx="192.5" cy="378.3" r="1.0" fill="#c8c8c8" opacity="0.14"/><circle cx="201.2" cy="386.4" r="1.2" fill="#c8c8c8" opacity="0.16"/><circle cx="88.4" cy="392.4" r="1.2" fill="#c8c8c8" opacity="0.36"/><circle cx="79.8" cy="384.1" r="0.9" fill="#c8c8c8" opacity="0.36"/><circle cx="205.8" cy="385.9" r="1.0" fill="#c8c8c8" opacity="0.03"/><circle cx="163.5" cy="389.6" r="0.9" fill="#c8c8c8" opacity="0.13"/><circle cx="76.9" cy="395.2" r="1.6" fill="#c8c8c8" opacity="0.18"/><circle cx="167.7" cy="385.6" r="1.7" fill="#c8c8c8" opacity="0.28"/><circle cx="210.6" cy="379.9" r="1.0" fill="#c8c8c8" opacity="0.07"/><circle cx="183.3" cy="393.3" r="1.5" fill="#c8c8c8" opacity="0.10"/><circle cx="201.1" cy="378.7" r="1.2" fill="#c8c8c8" opacity="0.13"/><circle cx="84.3" cy="381.4" r="1.1" fill="#c8c8c8" opacity="0.23"/><circle cx="187.4" cy="394.8" r="1.7" fill="#c8c8c8" opacity="0.17"/><circle cx="71.0" cy="386.5" r="1.2" fill="#c8c8c8" opacity="0.13"/><circle cx="171.7" cy="384.1" r="1.1" fill="#c8c8c8" opacity="0.16"/><circle cx="139.1" cy="383.4" r="0.8" fill="#c8c8c8" opacity="0.16"/><circle cx="115.3" cy="386.3" r="1.0" fill="#c8c8c8" opacity="0.45"/><circle cx="179.0" cy="378.1" r="0.9" fill="#c8c8c8" opacity="0.38"/><circle cx="116.5" cy="378.3" r="1.4" fill="#c8c8c8" opacity="0.39"/><circle cx="193.7" cy="394.3" r="1.6" fill="#c8c8c8" opacity="0.15"/><circle cx="153.7" cy="387.7" r="1.3" fill="#c8c8c8" opacity="0.22"/><circle cx="71.8" cy="399.1" r="1.4" fill="#c8c8c8" opacity="0.33"/><circle cx="176.2" cy="380.3" r="1.0" fill="#c8c8c8" opacity="0.25"/><circle cx="163.4" cy="396.2" r="1.0" fill="#c8c8c8" opacity="0.38"/><circle cx="113.8" cy="386.0" r="1.4" fill="#c8c8c8" opacity="0.20"/><circle cx="200.4" cy="378.4" r="1.0" fill="#c8c8c8" opacity="0.10"/><circle cx="107.0" cy="382.4" r="1.7" fill="#c8c8c8" opacity="0.44"/><circle cx="163.9" cy="383.6" r="0.8" fill="#c8c8c8" opacity="0.11"/><circle cx="70.6" cy="385.3" r="1.8" fill="#c8c8c8" opacity="0.17"/><circle cx="152.8" cy="386.1" r="0.8" fill="#c8c8c8" opacity="0.11"/><circle cx="87.9" cy="390.6" r="1.0" fill="#c8c8c8" opacity="0.22"/><circle cx="101.6" cy="385.6" r="1.6" fill="#c8c8c8" opacity="0.15"/><circle cx="109.2" cy="385.3" r="1.1" fill="#c8c8c8" opacity="0.32"/><circle cx="170.4" cy="389.3" r="1.1" fill="#c8c8c8" opacity="0.40"/><circle cx="161.6" cy="385.5" r="0.9" fill="#c8c8c8" opacity="0.17"/><circle cx="130.4" cy="385.1" r="1.2" fill="#c8c8c8" opacity="0.28"/><circle cx="120.8" cy="387.3" r="1.7" fill="#c8c8c8" opacity="0.37"/><circle cx="127.9" cy="383.4" r="1.3" fill="#c8c8c8" opacity="0.37"/><circle cx="158.2" cy="394.3" r="1.5" fill="#c8c8c8" opacity="0.22"/><circle cx="153.0" cy="388.5" r="1.7" fill="#c8c8c8" opacity="0.12"/><circle cx="154.1" cy="382.0" r="1.5" fill="#c8c8c8" opacity="0.38"/><circle cx="181.4" cy="377.4" r="1.2" fill="#c8c8c8" opacity="0.30"/><circle cx="92.7" cy="396.5" r="1.0" fill="#c8c8c8" opacity="0.13"/><circle cx="115.1" cy="383.4" r="1.4" fill="#c8c8c8" opacity="0.44"/><circle cx="165.7" cy="391.8" r="1.5" fill="#c8c8c8" opacity="0.10"/><circle cx="146.5" cy="386.7" r="1.3" fill="#c8c8c8" opacity="0.33"/><circle cx="182.9" cy="379.4" r="1.6" fill="#c8c8c8" opacity="0.23"/><circle cx="195.7" cy="377.5" r="1.3" fill="#c8c8c8" opacity="0.19"/><circle cx="210.6" cy="382.1" r="1.3" fill="#c8c8c8" opacity="0.09"/><circle cx="169.1" cy="394.3" r="0.8" fill="#c8c8c8" opacity="0.32"/><circle cx="69.5" cy="396.3" r="1.6" fill="#c8c8c8" opacity="0.40"/><circle cx="158.7" cy="382.0" r="1.7" fill="#c8c8c8" opacity="0.27"/><circle cx="160.7" cy="387.6" r="1.0" fill="#c8c8c8" opacity="0.12"/><circle cx="80.5" cy="395.6" r="1.2" fill="#c8c8c8" opacity="0.42"/><circle cx="114.5" cy="379.2" r="1.1" fill="#c8c8c8" opacity="0.12"/><circle cx="118.6" cy="383.1" r="1.7" fill="#c8c8c8" opacity="0.35"/><circle cx="123.7" cy="390.0" r="1.1" fill="#c8c8c8" opacity="0.39"/><circle cx="107.1" cy="388.1" r="1.8" fill="#c8c8c8" opacity="0.13"/><circle cx="137.3" cy="384.0" r="1.6" fill="#c8c8c8" opacity="0.24"/><circle cx="198.9" cy="376.9" r="1.7" fill="#c8c8c8" opacity="0.07"/><circle cx="128.8" cy="393.8" r="0.8" fill="#c8c8c8" opacity="0.23"/><circle cx="78.1" cy="386.5" r="1.8" fill="#c8c8c8" opacity="0.33"/><circle cx="110.5" cy="389.0" r="1.4" fill="#c8c8c8" opacity="0.36"/><circle cx="158.9" cy="386.4" r="1.0" fill="#c8c8c8" opacity="0.39"/><circle cx="168.2" cy="378.7" r="1.0" fill="#c8c8c8" opacity="0.29"/><circle cx="101.6" cy="395.1" r="1.3" fill="#c8c8c8" opacity="0.27"/><circle cx="192.8" cy="381.5" r="1.0" fill="#c8c8c8" opacity="0.20"/><circle cx="205.9" cy="389.1" r="1.5" fill="#c8c8c8" opacity="0.09"/><circle cx="115.6" cy="379.3" r="1.5" fill="#c8c8c8" opacity="0.44"/><circle cx="92.1" cy="390.2" r="1.7" fill="#c8c8c8" opacity="0.12"/><circle cx="101.2" cy="382.3" r="0.9" fill="#c8c8c8" opacity="0.25"/><circle cx="144.8" cy="376.0" r="1.7" fill="#c8c8c8" opacity="0.43"/><circle cx="166.4" cy="382.6" r="1.7" fill="#c8c8c8" opacity="0.24"/><circle cx="101.6" cy="384.8" r="1.4" fill="#c8c8c8" opacity="0.23"/><circle cx="85.2" cy="394.8" r="0.8" fill="#c8c8c8" opacity="0.19"/><circle cx="131.2" cy="387.1" r="1.0" fill="#c8c8c8" opacity="0.19"/><circle cx="173.4" cy="394.9" r="1.6" fill="#c8c8c8" opacity="0.17"/><circle cx="145.9" cy="391.2" r="1.1" fill="#c8c8c8" opacity="0.45"/><circle cx="149.6" cy="392.4" r="1.8" fill="#c8c8c8" opacity="0.29"/><circle cx="213.2" cy="388.2" r="1.2" fill="#c8c8c8" opacity="0.08"/><circle cx="142.9" cy="388.0" r="0.8" fill="#c8c8c8" opacity="0.30"/><circle cx="73.6" cy="393.2" r="1.4" fill="#c8c8c8" opacity="0.26"/><circle cx="178.5" cy="381.3" r="0.9" fill="#c8c8c8" opacity="0.41"/><circle cx="160.9" cy="392.2" r="1.3" fill="#c8c8c8" opacity="0.39"/><circle cx="122.2" cy="387.0" r="1.5" fill="#c8c8c8" opacity="0.40"/><circle cx="202.5" cy="379.1" r="1.3" fill="#c8c8c8" opacity="0.12"/><circle cx="68.2" cy="387.8" r="1.8" fill="#c8c8c8" opacity="0.15"/><circle cx="162.9" cy="394.2" r="0.8" fill="#c8c8c8" opacity="0.36"/><circle cx="213.4" cy="385.1" r="1.3" fill="#c8c8c8" opacity="0.03"/><circle cx="172.6" cy="379.7" r="1.4" fill="#c8c8c8" opacity="0.27"/><circle cx="208.0" cy="383.8" r="1.8" fill="#c8c8c8" opacity="0.08"/><circle cx="186.3" cy="379.2" r="1.7" fill="#c8c8c8" opacity="0.34"/><circle cx="112.3" cy="388.0" r="1.1" fill="#c8c8c8" opacity="0.38"/><circle cx="76.1" cy="377.1" r="1.6" fill="#c8c8c8" opacity="0.29"/><circle cx="191.7" cy="386.1" r="1.1" fill="#c8c8c8" opacity="0.25"/><circle cx="201.9" cy="389.3" r="1.2" fill="#c8c8c8" opacity="0.05"/><circle cx="198.3" cy="387.1" r="1.8" fill="#c8c8c8" opacity="0.18"/><circle cx="150.4" cy="382.4" r="1.7" fill="#c8c8c8" opacity="0.27"/><circle cx="118.0" cy="386.6" r="1.1" fill="#c8c8c8" opacity="0.40"/><circle cx="185.8" cy="389.4" r="0.9" fill="#c8c8c8" opacity="0.12"/><circle cx="152.3" cy="398.8" r="1.5" fill="#c8c8c8" opacity="0.37"/><circle cx="127.6" cy="385.8" r="1.1" fill="#c8c8c8" opacity="0.21"/><circle cx="101.3" cy="384.0" r="1.0" fill="#c8c8c8" opacity="0.11"/><circle cx="147.6" cy="381.9" r="1.1" fill="#c8c8c8" opacity="0.31"/><circle cx="186.9" cy="381.1" r="1.6" fill="#c8c8c8" opacity="0.08"/><circle cx="200.2" cy="376.8" r="0.9" fill="#c8c8c8" opacity="0.19"/><circle cx="82.0" cy="384.7" r="1.5" fill="#c8c8c8" opacity="0.28"/><circle cx="146.8" cy="380.0" r="1.7" fill="#c8c8c8" opacity="0.26"/><circle cx="78.2" cy="389.1" r="0.9" fill="#c8c8c8" opacity="0.33"/><circle cx="191.9" cy="383.3" r="1.4" fill="#c8c8c8" opacity="0.14"/><circle cx="142.8" cy="395.8" r="1.3" fill="#c8c8c8" opacity="0.43"/><circle cx="143.3" cy="381.8" r="1.1" fill="#c8c8c8" opacity="0.43"/><circle cx="90.2" cy="388.1" r="1.5" fill="#c8c8c8" opacity="0.17"/><circle cx="101.0" cy="380.1" r="1.6" fill="#c8c8c8" opacity="0.41"/><circle cx="99.4" cy="392.6" r="1.3" fill="#c8c8c8" opacity="0.25"/><circle cx="174.0" cy="387.9" r="1.1" fill="#c8c8c8" opacity="0.18"/><circle cx="116.9" cy="390.2" r="1.1" fill="#c8c8c8" opacity="0.31"/><circle cx="88.0" cy="393.2" r="0.9" fill="#c8c8c8" opacity="0.36"/><circle cx="194.2" cy="381.0" r="1.6" fill="#c8c8c8" opacity="0.06"/><circle cx="71.3" cy="386.3" r="1.3" fill="#c8c8c8" opacity="0.36"/><circle cx="169.5" cy="387.6" r="1.4" fill="#c8c8c8" opacity="0.19"/><circle cx="209.8" cy="391.8" r="1.0" fill="#c8c8c8" opacity="0.06"/><circle cx="103.6" cy="378.9" r="1.2" fill="#c8c8c8" opacity="0.38"/><circle cx="154.3" cy="391.2" r="1.3" fill="#c8c8c8" opacity="0.22"/><circle cx="114.5" cy="392.1" r="1.4" fill="#c8c8c8" opacity="0.21"/><circle cx="100.3" cy="385.9" r="1.2" fill="#c8c8c8" opacity="0.14"/><circle cx="189.5" cy="381.1" r="1.4" fill="#c8c8c8" opacity="0.15"/><circle cx="107.6" cy="390.7" r="1.3" fill="#c8c8c8" opacity="0.29"/><circle cx="73.8" cy="384.3" r="1.6" fill="#c8c8c8" opacity="0.17"/><circle cx="79.1" cy="397.7" r="1.2" fill="#c8c8c8" opacity="0.27"/><circle cx="163.6" cy="388.0" r="1.7" fill="#c8c8c8" opacity="0.24"/><circle cx="141.8" cy="386.1" r="1.3" fill="#c8c8c8" opacity="0.40"/><circle cx="213.0" cy="393.0" r="1.0" fill="#c8c8c8" opacity="0.04"/><circle cx="145.4" cy="391.1" r="1.8" fill="#c8c8c8" opacity="0.25"/><circle cx="205.5" cy="382.8" r="1.2" fill="#c8c8c8" opacity="0.05"/><circle cx="115.2" cy="383.0" r="1.0" fill="#c8c8c8" opacity="0.18"/><circle cx="106.8" cy="386.7" r="1.8" fill="#c8c8c8" opacity="0.21"/><circle cx="191.1" cy="386.6" r="1.8" fill="#c8c8c8" opacity="0.22"/><circle cx="206.0" cy="384.9" r="1.3" fill="#c8c8c8" opacity="0.06"/><circle cx="214.6" cy="384.1" r="1.5" fill="#c8c8c8" opacity="0.02"/><circle cx="184.5" cy="383.6" r="0.9" fill="#c8c8c8" opacity="0.35"/><circle cx="164.7" cy="394.5" r="1.6" fill="#c8c8c8" opacity="0.27"/><circle cx="90.0" cy="387.7" r="1.2" fill="#c8c8c8" opacity="0.11"/><circle cx="119.0" cy="386.2" r="1.0" fill="#c8c8c8" opacity="0.25"/><circle cx="214.3" cy="377.6" r="1.7" fill="#c8c8c8" opacity="0.05"/><circle cx="92.3" cy="391.3" r="1.0" fill="#c8c8c8" opacity="0.43"/><circle cx="196.7" cy="377.2" r="1.6" fill="#c8c8c8" opacity="0.10"/><circle cx="100.5" cy="391.0" r="1.5" fill="#c8c8c8" opacity="0.38"/><circle cx="200.0" cy="393.6" r="1.6" fill="#c8c8c8" opacity="0.07"/><circle cx="83.0" cy="387.7" r="1.7" fill="#c8c8c8" opacity="0.38"/><circle cx="88.2" cy="397.9" r="1.5" fill="#c8c8c8" opacity="0.22"/><circle cx="188.4" cy="386.7" r="1.3" fill="#c8c8c8" opacity="0.33"/><circle cx="191.8" cy="392.1" r="1.7" fill="#c8c8c8" opacity="0.15"/><circle cx="129.9" cy="381.5" r="1.2" fill="#c8c8c8" opacity="0.42"/></g></svg>
<div class="t" style="right:1639px;top:391.5px;font-size:13.5px;color:#d6d6d6;">Running color spray</div>
<div class="a" style="left:55px;top:409px;width:229px;height:36px;background:#3e3e3e;"></div>
<svg style="left:0;top:0" width="1920" height="1031"><rect x="134" y="426" width="1" height="1" fill="#dedede" opacity="0.78"/><rect x="164" y="425" width="2" height="1" fill="#dedede" opacity="0.65"/><rect x="140" y="426" width="2" height="1" fill="#dedede" opacity="0.85"/><rect x="94" y="428" width="1" height="1" fill="#dedede" opacity="0.73"/><rect x="149" y="427" width="1" height="1" fill="#dedede" opacity="0.87"/><rect x="115" y="421" width="1" height="1" fill="#dedede" opacity="0.65"/><rect x="137" y="419" width="1" height="1" fill="#dedede" opacity="0.70"/><rect x="178" y="424" width="1" height="1" fill="#dedede" opacity="0.99"/><rect x="103" y="418" width="1" height="1" fill="#dedede" opacity="0.89"/><rect x="88" y="428" width="2" height="1" fill="#dedede" opacity="0.82"/><rect x="87" y="420" width="1" height="1" fill="#dedede" opacity="0.84"/><rect x="122" y="416" width="1" height="1" fill="#dedede" opacity="0.68"/><rect x="104" y="418" width="1" height="1" fill="#dedede" opacity="0.79"/><rect x="94" y="430" width="1" height="1" fill="#dedede" opacity="0.65"/><rect x="78" y="434" width="2" height="1" fill="#dedede" opacity="0.95"/><rect x="156" y="427" width="1" height="1" fill="#dedede" opacity="1.00"/><rect x="89" y="428" width="2" height="1" fill="#dedede" opacity="0.99"/><rect x="168" y="430" width="1" height="1" fill="#dedede" opacity="0.71"/><rect x="115" y="422" width="1" height="1" fill="#dedede" opacity="0.95"/><rect x="88" y="428" width="1" height="1" fill="#dedede" opacity="0.68"/><rect x="194" y="430" width="1" height="1" fill="#dedede" opacity="0.68"/><rect x="146" y="430" width="1" height="1" fill="#dedede" opacity="0.70"/><rect x="185" y="424" width="1" height="1" fill="#dedede" opacity="0.87"/><rect x="187" y="435" width="1" height="1" fill="#dedede" opacity="0.85"/><rect x="159" y="426" width="1" height="1" fill="#dedede" opacity="0.77"/><rect x="121" y="418" width="1" height="1" fill="#dedede" opacity="0.78"/><rect x="190" y="432" width="1" height="1" fill="#dedede" opacity="0.76"/><rect x="174" y="423" width="1" height="1" fill="#dedede" opacity="0.77"/><rect x="85" y="425" width="1" height="1" fill="#dedede" opacity="0.92"/><rect x="126" y="426" width="1" height="1" fill="#dedede" opacity="0.69"/><rect x="112" y="421" width="1" height="1" fill="#dedede" opacity="0.87"/><rect x="196" y="425" width="2" height="1" fill="#dedede" opacity="0.70"/><rect x="78" y="421" width="2" height="1" fill="#dedede" opacity="0.73"/><rect x="115" y="427" width="2" height="1" fill="#dedede" opacity="0.67"/><rect x="188" y="433" width="2" height="1" fill="#dedede" opacity="0.90"/><rect x="128" y="421" width="1" height="1" fill="#dedede" opacity="0.94"/><rect x="161" y="426" width="1" height="1" fill="#dedede" opacity="0.86"/><rect x="168" y="417" width="1" height="1" fill="#dedede" opacity="0.69"/><rect x="95" y="427" width="1" height="1" fill="#dedede" opacity="0.96"/><rect x="173" y="425" width="1" height="1" fill="#dedede" opacity="0.62"/><rect x="138" y="412" width="1" height="1" fill="#dedede" opacity="0.75"/><rect x="166" y="419" width="1" height="1" fill="#dedede" opacity="0.79"/><rect x="137" y="429" width="2" height="1" fill="#dedede" opacity="0.78"/><rect x="107" y="417" width="2" height="1" fill="#dedede" opacity="0.79"/><rect x="92" y="423" width="1" height="1" fill="#dedede" opacity="0.98"/><rect x="80" y="421" width="2" height="1" fill="#dedede" opacity="0.90"/><rect x="96" y="424" width="1" height="1" fill="#dedede" opacity="0.63"/><rect x="157" y="425" width="1" height="1" fill="#dedede" opacity="0.72"/><rect x="188" y="421" width="1" height="1" fill="#dedede" opacity="0.79"/><rect x="98" y="423" width="1" height="1" fill="#dedede" opacity="0.75"/><rect x="107" y="436" width="1" height="1" fill="#dedede" opacity="0.64"/><rect x="177" y="415" width="1" height="1" fill="#dedede" opacity="0.70"/><rect x="123" y="420" width="2" height="1" fill="#dedede" opacity="0.84"/><rect x="87" y="430" width="1" height="1" fill="#dedede" opacity="0.74"/><rect x="85" y="412" width="1" height="1" fill="#dedede" opacity="0.95"/><rect x="126" y="424" width="1" height="1" fill="#dedede" opacity="0.67"/><rect x="192" y="424" width="1" height="1" fill="#dedede" opacity="0.79"/><rect x="108" y="427" width="1" height="1" fill="#dedede" opacity="0.87"/><rect x="175" y="423" width="1" height="1" fill="#dedede" opacity="0.79"/><rect x="168" y="419" width="2" height="1" fill="#dedede" opacity="0.97"/><rect x="104" y="431" width="1" height="1" fill="#dedede" opacity="0.61"/><rect x="91" y="422" width="1" height="1" fill="#dedede" opacity="0.76"/><rect x="175" y="427" width="2" height="1" fill="#dedede" opacity="0.95"/><rect x="122" y="416" width="1" height="1" fill="#dedede" opacity="0.83"/><rect x="158" y="420" width="1" height="1" fill="#dedede" opacity="0.61"/><rect x="135" y="418" width="2" height="1" fill="#dedede" opacity="0.92"/><rect x="142" y="427" width="1" height="1" fill="#dedede" opacity="0.74"/><rect x="131" y="423" width="1" height="1" fill="#dedede" opacity="0.80"/><rect x="105" y="434" width="1" height="1" fill="#dedede" opacity="0.64"/><rect x="135" y="429" width="1" height="1" fill="#dedede" opacity="1.00"/><rect x="145" y="429" width="1" height="1" fill="#dedede" opacity="1.00"/><rect x="160" y="422" width="1" height="1" fill="#dedede" opacity="0.87"/><rect x="184" y="431" width="1" height="1" fill="#dedede" opacity="0.89"/><rect x="118" y="416" width="2" height="1" fill="#dedede" opacity="0.61"/><rect x="122" y="426" width="2" height="1" fill="#dedede" opacity="0.81"/><rect x="178" y="421" width="1" height="1" fill="#dedede" opacity="0.93"/><rect x="82" y="414" width="2" height="1" fill="#dedede" opacity="0.65"/><rect x="84" y="429" width="1" height="1" fill="#dedede" opacity="0.67"/><rect x="180" y="414" width="1" height="1" fill="#dedede" opacity="0.71"/><rect x="179" y="426" width="1" height="1" fill="#dedede" opacity="0.92"/><rect x="137" y="429" width="1" height="1" fill="#dedede" opacity="0.74"/><rect x="132" y="427" width="1" height="1" fill="#dedede" opacity="0.78"/><rect x="145" y="426" width="2" height="1" fill="#dedede" opacity="0.71"/><rect x="80" y="423" width="1" height="1" fill="#dedede" opacity="0.83"/><rect x="183" y="413" width="1" height="1" fill="#dedede" opacity="0.97"/><rect x="158" y="418" width="1" height="1" fill="#dedede" opacity="0.86"/><rect x="98" y="424" width="1" height="1" fill="#dedede" opacity="0.87"/><rect x="127" y="430" width="1" height="1" fill="#dedede" opacity="0.80"/><rect x="102" y="424" width="1" height="1" fill="#dedede" opacity="0.64"/><rect x="92" y="432" width="1" height="1" fill="#dedede" opacity="0.95"/><rect x="137" y="432" width="2" height="1" fill="#dedede" opacity="0.84"/><rect x="76" y="421" width="1" height="1" fill="#dedede" opacity="0.60"/><rect x="108" y="418" width="1" height="1" fill="#dedede" opacity="0.71"/><rect x="100" y="425" width="1" height="1" fill="#dedede" opacity="0.82"/><rect x="106" y="430" width="1" height="1" fill="#dedede" opacity="0.72"/><rect x="161" y="427" width="2" height="1" fill="#dedede" opacity="0.95"/><rect x="110" y="416" width="2" height="1" fill="#dedede" opacity="0.65"/><rect x="118" y="419" width="1" height="1" fill="#dedede" opacity="0.78"/><rect x="195" y="421" width="1" height="1" fill="#dedede" opacity="0.76"/><rect x="164" y="426" width="1" height="1" fill="#dedede" opacity="0.73"/><rect x="136" y="422" width="1" height="1" fill="#dedede" opacity="0.62"/><rect x="141" y="426" width="1" height="1" fill="#dedede" opacity="0.84"/><rect x="132" y="421" width="1" height="1" fill="#dedede" opacity="0.91"/><rect x="151" y="432" width="1" height="1" fill="#dedede" opacity="0.64"/><rect x="104" y="424" width="1" height="1" fill="#dedede" opacity="0.69"/><rect x="106" y="412" width="1" height="1" fill="#dedede" opacity="0.66"/><rect x="159" y="431" width="1" height="1" fill="#dedede" opacity="0.88"/><rect x="165" y="423" width="1" height="1" fill="#dedede" opacity="0.67"/><rect x="108" y="438" width="1" height="1" fill="#dedede" opacity="0.67"/><rect x="159" y="424" width="1" height="1" fill="#dedede" opacity="0.67"/><rect x="194" y="429" width="1" height="1" fill="#dedede" opacity="0.94"/><rect x="191" y="420" width="1" height="1" fill="#dedede" opacity="0.81"/><rect x="120" y="419" width="2" height="1" fill="#dedede" opacity="0.73"/><rect x="142" y="417" width="1" height="1" fill="#dedede" opacity="0.69"/><rect x="183" y="424" width="1" height="1" fill="#dedede" opacity="0.95"/><rect x="138" y="420" width="1" height="1" fill="#dedede" opacity="1.00"/><rect x="156" y="424" width="1" height="1" fill="#dedede" opacity="0.88"/><rect x="107" y="425" width="1" height="1" fill="#dedede" opacity="0.89"/><rect x="97" y="421" width="1" height="1" fill="#dedede" opacity="0.89"/><rect x="100" y="426" width="1" height="1" fill="#dedede" opacity="0.93"/><rect x="143" y="426" width="1" height="1" fill="#dedede" opacity="0.93"/><rect x="172" y="425" width="1" height="1" fill="#dedede" opacity="0.86"/><rect x="129" y="415" width="1" height="1" fill="#dedede" opacity="0.79"/><rect x="92" y="428" width="1" height="1" fill="#dedede" opacity="0.86"/><rect x="176" y="433" width="1" height="1" fill="#dedede" opacity="0.85"/><rect x="112" y="426" width="1" height="1" fill="#dedede" opacity="0.97"/><rect x="165" y="431" width="1" height="1" fill="#dedede" opacity="0.65"/><rect x="193" y="427" width="1" height="1" fill="#dedede" opacity="0.99"/><rect x="107" y="418" width="1" height="1" fill="#dedede" opacity="0.83"/><rect x="153" y="424" width="1" height="1" fill="#dedede" opacity="0.94"/><rect x="102" y="424" width="2" height="1" fill="#dedede" opacity="0.62"/><rect x="98" y="421" width="1" height="1" fill="#dedede" opacity="0.68"/><rect x="76" y="426" width="1" height="1" fill="#dedede" opacity="0.93"/><rect x="92" y="422" width="1" height="1" fill="#dedede" opacity="0.86"/><rect x="125" y="430" width="2" height="1" fill="#dedede" opacity="0.94"/><rect x="130" y="419" width="1" height="1" fill="#dedede" opacity="0.63"/><rect x="77" y="427" width="1" height="1" fill="#dedede" opacity="0.85"/><rect x="129" y="417" width="1" height="1" fill="#dedede" opacity="0.66"/><rect x="139" y="427" width="1" height="1" fill="#dedede" opacity="0.78"/><rect x="85" y="411" width="1" height="1" fill="#dedede" opacity="0.95"/><rect x="189" y="422" width="1" height="1" fill="#dedede" opacity="0.98"/><rect x="169" y="419" width="2" height="1" fill="#dedede" opacity="0.60"/><rect x="102" y="422" width="2" height="1" fill="#dedede" opacity="0.72"/><rect x="118" y="420" width="1" height="1" fill="#dedede" opacity="0.80"/><rect x="92" y="423" width="1" height="1" fill="#dedede" opacity="0.81"/><rect x="82" y="423" width="2" height="1" fill="#dedede" opacity="0.79"/><rect x="78" y="421" width="1" height="1" fill="#dedede" opacity="0.68"/><rect x="95" y="430" width="1" height="1" fill="#dedede" opacity="0.90"/><rect x="128" y="426" width="1" height="1" fill="#dedede" opacity="0.84"/><rect x="126" y="423" width="1" height="1" fill="#dedede" opacity="0.95"/></svg>
<div class="t" style="right:1639px;top:428.5px;font-size:13.5px;color:#d6d6d6;">Droplet</div>
<div class="a" style="left:54px;top:447px;width:247px;height:5px;background:#474747;"></div>
<div class="a" style="left:54px;top:452px;width:247px;height:25px;background:#505050;"></div>
<svg style="left:229px;top:455px;" width="70" height="20" viewBox="0 0 70 20"><rect x="2" y="4" width="15" height="14" rx="2.5" stroke="#b4b4b4" stroke-width="1.2" fill="none"/><path d="M9.5 3V13M6 9.5L9.5 13L13 9.5" stroke="#b4b4b4" stroke-width="1.2" fill="none"/><rect x="26" y="2" width="12" height="12" rx="2" stroke="#b4b4b4" stroke-width="1.2" fill="none"/><rect x="30" y="6" width="13" height="12" rx="2" fill="#505050" stroke="#b4b4b4" stroke-width="1.2"/><path d="M36.5 9V16M33 12.5H40" stroke="#b4b4b4" stroke-width="1.2"/><path d="M52 5H66M56 5V2.5H62V5M53.5 5.5L54.5 18H63.5L64.5 5.5M57 8V15M59 8V15M61 8V15" stroke="#b4b4b4" stroke-width="1.1" fill="none"/></svg>
<div class="a" style="left:54px;top:477px;width:247px;height:4px;background:#2e2e2e;"></div>
<div class="a" style="left:54px;top:477px;width:247px;height:4px;background:#2e2e2e;"></div>
<div class="a" style="left:54px;top:481px;width:23px;height:18px;background:#363636;"></div>
<div class="a" style="left:77px;top:481px;width:144px;height:18px;background:#4a4a4a;"></div>
<div class="a" style="left:221px;top:481px;width:80px;height:18px;background:#363636;"></div>
<div class="a" style="left:54px;top:499px;width:247px;height:7px;background:#4a4a4a;"></div>
<svg style="left:61px;top:486px;" width="10" height="10" viewBox="0 0 10 10"><path d="M0 1.5H10M0 5.5H10M0 9.5H10" stroke="#8c8c8c" stroke-width="1" fill="none"/></svg>
<svg style="left:86px;top:482px;" width="26" height="22" viewBox="0 0 26 22"><path d="M17 2L5 14" stroke="#b4b4b4" stroke-width="4" stroke-linecap="round"/><path d="M1.5 18L3 13L6.5 16.5Z" fill="#b4b4b4"/><circle cx="17.5" cy="15.5" r="3.2" stroke="#b4b4b4" stroke-width="1.6" fill="none"/><path d="M17.5 10V12M17.5 19V21M12 15.5H14M21 15.5H23M13.8 11.8L15 13M20 18L21.2 19.2M21.2 11.8L20 13M15 18L13.8 19.2" stroke="#b4b4b4" stroke-width="1.3"/></svg>
<div class="t" style="left:113px;top:488px;font-size:12px;color:#cfcfcf;">Tool property [Soft]</div>
<div class="a" style="left:54px;top:506px;width:247px;height:2px;background:#474747;"></div>
<div class="a" style="left:55px;top:508px;width:122px;height:48px;background:#bababa;"></div>
<div class="a" style="left:177px;top:508px;width:123px;height:48px;background:#4d4d4d;"></div>
<svg style="left:0;top:0" width="1920" height="1031"><defs><clipPath id="tpc"><rect x="55" y="508" width="245" height="48"/></clipPath><filter id="tpb" x="-10%" y="-50%" width="120%" height="200%"><feGaussianBlur stdDeviation="2.3"/></filter><linearGradient id="tpg" gradientUnits="userSpaceOnUse" x1="80" y1="0" x2="275" y2="0"><stop offset="0" stop-color="#c48a58" stop-opacity="0.15"/><stop offset="0.35" stop-color="#c48a58" stop-opacity="0.7"/><stop offset="0.5" stop-color="#b97c46" stop-opacity="1"/><stop offset="0.75" stop-color="#b97c46" stop-opacity="0.85"/><stop offset="1" stop-color="#b97c46" stop-opacity="0.1"/></linearGradient></defs><g clip-path="url(#tpc)"><path d="M83.0,541.0 L85.5,540.1 L88.8,538.8 L92.7,537.2 L97.0,535.5 L101.6,533.7 L106.2,531.9 L110.7,530.3 L114.8,529.0 L118.4,528.1 L121.8,527.3 L125.1,526.6 L128.3,526.0 L131.3,525.6 L134.2,525.3 L137.0,525.1 L139.8,525.2 L142.5,525.4 L145.2,525.8 L147.9,526.5 L150.7,527.3 L153.5,528.2 L156.4,529.3 L159.3,530.5 L162.2,531.7 L165.2,533.0 L168.1,534.3 L170.6,535.6 L173.3,537.1 L176.1,538.8 L179.1,540.6 L182.2,542.4 L185.5,544.2 L188.9,545.9 L192.5,547.3 L196.0,548.3 L199.3,549.1 L202.7,549.7 L206.1,550.2 L209.5,550.5 L213.0,550.5 L216.4,550.4 L219.9,550.0 L223.4,549.3 L227.0,548.3 L230.4,547.0 L233.6,545.4 L236.7,543.7 L239.7,542.0 L242.6,540.2 L245.4,538.4 L248.1,536.7 L250.9,535.1 L253.9,533.3 L257.0,531.4 L260.1,529.6 L263.1,527.7 L265.9,526.0 L268.3,524.4 L270.4,523.0 L272.0,522.0 L272.0,522.0 L270.2,522.6 L267.8,523.3 L265.0,524.2 L261.9,525.2 L258.6,526.3 L255.2,527.4 L251.8,528.5 L248.5,529.5 L245.4,530.3 L242.1,531.3 L238.9,532.4 L235.8,533.4 L232.7,534.4 L229.6,535.2 L226.7,535.9 L224.0,536.4 L221.5,536.6 L218.9,536.6 L216.3,536.4 L213.7,536.1 L211.1,535.7 L208.5,535.2 L205.8,534.6 L203.1,533.8 L200.3,533.0 L197.7,532.2 L195.3,531.2 L192.7,530.0 L190.0,528.5 L187.0,526.9 L183.9,525.2 L180.7,523.5 L177.3,521.9 L173.7,520.4 L170.4,519.3 L167.1,518.3 L163.8,517.3 L160.4,516.4 L156.9,515.7 L153.4,515.0 L149.8,514.6 L146.2,514.5 L142.6,514.6 L139.1,515.0 L135.8,515.6 L132.5,516.4 L129.3,517.5 L126.2,518.6 L123.0,519.9 L119.8,521.4 L116.6,522.8 L113.0,524.5 L109.0,526.5 L104.8,528.7 L100.4,531.1 L96.1,533.5 L92.0,535.8 L88.4,537.9 L85.3,539.7 L83.0,541.0 Z" fill="url(#tpg)" filter="url(#tpb)"/></g></svg>
<div class="a" style="left:56px;top:509px;width:27px;height:18px;background:#8e8e8e;border-radius:2px"></div>
<div class="t" style="left:57px;top:512px;font-size:13px;color:#f4f4f4;">Soft</div>
<svg style="left:276px;top:534px;" width="17" height="16" viewBox="0 0 17 16"><path d="M4 8V4.5Q4 1.5 6.5 1.5Q9 1.5 9 4.5" stroke="#b4b4b4" stroke-width="1.4" fill="none"/><rect x="6" y="7" width="9" height="7.5" rx="1.3" fill="#b4b4b4"/></svg>
<div class="a" style="left:54px;top:556px;width:247px;height:76px;background:#3e3e3e;"></div>
<svg style="left:101px;top:556px;" width="90" height="7" viewBox="0 0 90 7"><path d="M0.5 0V5.5H89.5V0" stroke="#6a6a6a" fill="none"/></svg>
<div class="a" style="left:65px;top:566px;width:216px;height:1px;background:#6a6a6a;"></div>
<div class="a" style="left:59px;top:574px;width:14px;height:14px;background:#4a4a4a;border:1px solid #606060;border-radius:2px"></div>
<div class="a" style="left:62px;top:580px;width:9px;height:1px;background:#d0d0d0;"></div>
<div class="t" style="left:74px;top:575px;font-size:13px;color:#d8d8d8;">Starting and ending</div>
<div class="a" style="left:65px;top:588px;width:1px;height:43px;background:#1e1e1e;"></div>
<div class="a" style="left:190px;top:569px;width:92px;height:25px;background:#505050;border:1px solid #5f5f5f;border-radius:2px"></div>
<div class="a" style="left:193px;top:572px;width:72px;height:20px;overflow:hidden"><div class="t" style="left:1px;top:3px;font-size:12.5px;color:#c8c8c8;transform:scaleX(0.84);transform-origin:0 0">Brush Size, Thic</div></div>
<svg style="left:266px;top:578px;" width="11" height="7" viewBox="0 0 11 7"><path d="M0.5 0.5L5.5 6L10.5 0.5" stroke="#c8c8c8" stroke-width="1.2" fill="none"/></svg>
<div class="a" style="left:74px;top:598px;width:18px;height:18px;background:#4a4a4a;border:1px solid #606060;border-radius:2px"></div>
<svg style="left:76px;top:600px;" width="14" height="14" viewBox="0 0 14 14"><path d="M2.5 7L5.5 11L11.5 3" stroke="#f0f0f0" stroke-width="2" fill="none"/></svg>
<div class="t" style="left:96px;top:601px;font-size:13px;color:#d8d8d8;">Starting</div>
<div class="a" style="left:101px;top:619px;width:89px;height:10px;background:#555555;border:1px solid #656565;border-radius:1px"></div>
<div class="t" style="right:1674px;top:610px;font-size:13px;color:#e0e0e0;letter-spacing:-0.6px">5000</div>
<svg style="left:249px;top:609px;" width="10" height="16" viewBox="0 0 10 16"><path d="M1 6L5 1.5L9 6M1 10L5 14.5L9 10" stroke="#b8b8b8" stroke-width="1" fill="none"/></svg>
<div class="a" style="left:284px;top:556px;width:17px;height:76px;background:#3e3e3e;"></div>
<div class="a" style="left:285px;top:558px;width:15px;height:15px;background:#4d4d4d;border-radius:2px"></div>
<svg style="left:288px;top:563px;" width="9" height="6" viewBox="0 0 9 6"><path d="M0.5 5L4.5 0.5L8.5 5" stroke="#bbb" stroke-width="1.2" fill="none"/></svg>
<div class="a" style="left:286px;top:591px;width:13px;height:13px;border-radius:50%;background:#4f4f4f"></div>
<div class="a" style="left:285px;top:616px;width:15px;height:15px;background:#4d4d4d;border-radius:2px"></div>
<svg style="left:288px;top:621px;" width="9" height="6" viewBox="0 0 9 6"><path d="M0.5 0.5L4.5 5L8.5 0.5" stroke="#bbb" stroke-width="1.2" fill="none"/></svg>
<div class="a" style="left:54px;top:632px;width:247px;height:24px;background:#505050;"></div>
<svg style="left:254px;top:635px;" width="46" height="20" viewBox="0 0 46 20"><path d="M6 3.5Q9 2 11 2Q17 2 17 10Q17 17 10 17Q3 17 3 10Q3 8 4 6" stroke="#b4b4b4" stroke-width="1.3" fill="none" stroke-dasharray="22 1.5 1.5 1.5 1.5 1.5"/><circle cx="10" cy="10" r="2" fill="#b4b4b4"/><path d="M10 3V9" stroke="#b4b4b4" stroke-width="1"/><path d="M28 6Q28 1.5 32.5 1.5L30.5 4L31.5 6.5L34 7.5L36.5 5.5Q37.5 9.5 34.5 10.5L43 16.5Q44 17.8 43 18.8Q42 19.8 40.8 18.8L34 11.5Q29.5 12 28 6Z" stroke="#b4b4b4" stroke-width="1.3" fill="none" stroke-linejoin="round"/></svg>
<div class="a" style="left:54px;top:656px;width:247px;height:5px;background:#2e2e2e;"></div>
<div class="a" style="left:54px;top:657px;width:247px;height:4px;background:#2e2e2e;"></div>
<div class="a" style="left:54px;top:661px;width:23px;height:18px;background:#363636;"></div>
<div class="a" style="left:77px;top:661px;width:123px;height:18px;background:#4a4a4a;"></div>
<div class="a" style="left:200px;top:661px;width:101px;height:18px;background:#363636;"></div>
<div class="a" style="left:54px;top:679px;width:247px;height:7px;background:#4a4a4a;"></div>
<svg style="left:61px;top:666px;" width="10" height="10" viewBox="0 0 10 10"><path d="M0 1.5H10M0 5.5H10M0 9.5H10" stroke="#8c8c8c" stroke-width="1" fill="none"/></svg>
<svg style="left:86px;top:662px;" width="26" height="22" viewBox="0 0 26 22"><path d="M17 2L5 14" stroke="#b4b4b4" stroke-width="4" stroke-linecap="round"/><path d="M1.5 18L3 13L6.5 16.5Z" fill="#b4b4b4"/><circle cx="14" cy="16" r="5" stroke="#b4b4b4" stroke-width="1.2" fill="none"/><circle cx="14" cy="16" r="2.5" stroke="#b4b4b4" stroke-width="1" fill="none"/></svg>
<div class="t" style="left:113px;top:668px;font-size:12px;color:#cfcfcf;">Brush size [Soft]</div>
<div class="a" style="left:54px;top:686px;width:247px;height:116px;background:#474747;"></div>
<div class="a" style="left:55px;top:687px;width:229px;height:115px;background:#2a2a2a;"></div>
<div class="a" style="left:55px;top:688px;width:37px;height:49px;background:#3e3e3e;"></div>
<div class="a" style="left:61.5px;top:692px;width:24px;height:24px;border-radius:50%;background:#fff"></div>
<div class="t" style="left:55px;width:37px;text-align:center;top:721px;font-size:13px;color:#d8d8d8">40</div>
<div class="a" style="left:93px;top:688px;width:38px;height:49px;background:#3e3e3e;"></div>
<div class="a" style="left:100.0px;top:692px;width:24px;height:24px;border-radius:50%;background:#fff"></div>
<div class="t" style="left:93px;width:38px;text-align:center;top:721px;font-size:13px;color:#d8d8d8">50</div>
<div class="a" style="left:132px;top:688px;width:37px;height:49px;background:#3e3e3e;"></div>
<div class="a" style="left:138.5px;top:692px;width:24px;height:24px;border-radius:50%;background:#fff"></div>
<div class="t" style="left:132px;width:37px;text-align:center;top:721px;font-size:13px;color:#d8d8d8">60</div>
<div class="a" style="left:170px;top:688px;width:37px;height:49px;background:#3e3e3e;"></div>
<div class="a" style="left:176.5px;top:692px;width:24px;height:24px;border-radius:50%;background:#fff"></div>
<div class="t" style="left:170px;width:37px;text-align:center;top:721px;font-size:13px;color:#d8d8d8">70</div>
<div class="a" style="left:208px;top:688px;width:38px;height:49px;background:#3e3e3e;"></div>
<div class="a" style="left:215.0px;top:692px;width:24px;height:24px;border-radius:50%;background:#fff"></div>
<div class="t" style="left:208px;width:38px;text-align:center;top:721px;font-size:13px;color:#d8d8d8">80</div>
<div class="a" style="left:247px;top:688px;width:37px;height:49px;background:#3e3e3e;"></div>
<div class="a" style="left:253.5px;top:692px;width:24px;height:24px;border-radius:50%;background:#fff"></div>
<div class="t" style="left:247px;width:37px;text-align:center;top:721px;font-size:13px;color:#d8d8d8">100</div>
<div class="a" style="left:55px;top:738px;width:37px;height:49px;background:#3e3e3e;"></div>
<div class="a" style="left:61.5px;top:742px;width:24px;height:24px;border-radius:50%;background:#fff"></div>
<div class="t" style="left:55px;width:37px;text-align:center;top:771px;font-size:13px;color:#d8d8d8">120</div>
<div class="a" style="left:93px;top:738px;width:38px;height:49px;background:#5f6a85;"></div>
<div class="a" style="left:100.0px;top:742px;width:24px;height:24px;border-radius:50%;background:#fff"></div>
<div class="a" style="left:97px;top:766px;width:29px;height:19px;background:#505a72;border-radius:2px"></div>
<div class="t" style="left:93px;width:38px;text-align:center;top:771px;font-size:13px;color:#d8d8d8">150</div>
<div class="a" style="left:132px;top:738px;width:37px;height:49px;background:#3e3e3e;"></div>
<div class="a" style="left:138.5px;top:742px;width:24px;height:24px;border-radius:50%;background:#fff"></div>
<div class="t" style="left:132px;width:37px;text-align:center;top:771px;font-size:13px;color:#d8d8d8">170</div>
<div class="a" style="left:170px;top:738px;width:37px;height:49px;background:#3e3e3e;"></div>
<div class="a" style="left:176.5px;top:742px;width:24px;height:24px;border-radius:50%;background:#fff"></div>
<div class="t" style="left:170px;width:37px;text-align:center;top:771px;font-size:13px;color:#d8d8d8">200</div>
<div class="a" style="left:208px;top:738px;width:38px;height:49px;background:#3e3e3e;"></div>
<div class="a" style="left:215.0px;top:742px;width:24px;height:24px;border-radius:50%;background:#fff"></div>
<div class="t" style="left:208px;width:38px;text-align:center;top:771px;font-size:13px;color:#d8d8d8">250</div>
<div class="a" style="left:247px;top:738px;width:37px;height:49px;background:#3e3e3e;"></div>
<div class="a" style="left:253.5px;top:742px;width:24px;height:24px;border-radius:50%;background:#fff"></div>
<div class="t" style="left:247px;width:37px;text-align:center;top:771px;font-size:13px;color:#d8d8d8">300</div>
<div class="a" style="left:55px;top:788px;width:37px;height:14px;background:#3e3e3e;"></div>
<div class="a" style="left:61.5px;top:792px;width:24px;height:24px;border-radius:50%;background:#fff"></div>
<div class="a" style="left:93px;top:788px;width:38px;height:14px;background:#3e3e3e;"></div>
<div class="a" style="left:100.0px;top:792px;width:24px;height:24px;border-radius:50%;background:#fff"></div>
<div class="a" style="left:132px;top:788px;width:37px;height:14px;background:#3e3e3e;"></div>
<div class="a" style="left:138.5px;top:792px;width:24px;height:24px;border-radius:50%;background:#fff"></div>
<div class="a" style="left:170px;top:788px;width:37px;height:14px;background:#3e3e3e;"></div>
<div class="a" style="left:176.5px;top:792px;width:24px;height:24px;border-radius:50%;background:#fff"></div>
<div class="a" style="left:208px;top:788px;width:38px;height:14px;background:#3e3e3e;"></div>
<div class="a" style="left:215.0px;top:792px;width:24px;height:24px;border-radius:50%;background:#fff"></div>
<div class="a" style="left:247px;top:788px;width:37px;height:14px;background:#3e3e3e;"></div>
<div class="a" style="left:253.5px;top:792px;width:24px;height:24px;border-radius:50%;background:#fff"></div>
<div class="a" style="left:284px;top:686px;width:17px;height:116px;background:#474747;"></div>
<div class="a" style="left:285px;top:688px;width:15px;height:15px;background:#555;border-radius:2px"></div>
<svg style="left:288px;top:693px;" width="9" height="6" viewBox="0 0 9 6"><path d="M0.5 5L4.5 0.5L8.5 5" stroke="#bbb" stroke-width="1.2" fill="none"/></svg>
<div class="a" style="left:286px;top:740px;width:13px;height:25px;background:#4f4f4f;border-radius:6px"></div>
<div class="a" style="left:285px;top:786px;width:15px;height:15px;background:#555;border-radius:2px"></div>
<svg style="left:288px;top:791px;" width="9" height="6" viewBox="0 0 9 6"><path d="M0.5 0.5L4.5 5L8.5 0.5" stroke="#bbb" stroke-width="1.2" fill="none"/></svg>
<div class="a" style="left:54px;top:802px;width:247px;height:5px;background:#2e2e2e;"></div>
<div class="a" style="left:54px;top:807px;width:247px;height:224px;background:#474747;"></div>
<div class="a" style="left:54px;top:807px;width:23px;height:20px;background:#363636;"></div>
<svg style="left:61px;top:812px;" width="10" height="10" viewBox="0 0 10 10"><path d="M0 1.5H10M0 5.5H10M0 9.5H10" stroke="#8c8c8c" stroke-width="1" fill="none"/></svg>
<div class="a" style="left:77px;top:808px;width:36px;height:19px;background:#4a4a4a;"></div>
<svg style="left:85px;top:809px;" width="20" height="18" viewBox="0 0 20 18"><circle cx="10" cy="10" r="7.5" stroke="#b4b4b4" stroke-width="1.2" fill="none"/><rect x="6.5" y="6.5" width="7" height="7" rx="1.5" fill="#b4b4b4"/></svg>
<div class="a" style="left:114px;top:808px;width:37px;height:19px;background:#4f4f4f;border-top:1px solid #5a5a5a"></div>
<div class="a" style="left:152px;top:808px;width:37px;height:19px;background:#4f4f4f;border-top:1px solid #5a5a5a"></div>
<div class="a" style="left:190px;top:808px;width:37px;height:19px;background:#4f4f4f;border-top:1px solid #5a5a5a"></div>
<div class="a" style="left:228px;top:808px;width:37px;height:19px;background:#4f4f4f;border-top:1px solid #5a5a5a"></div>
<div class="a" style="left:266px;top:808px;width:19px;height:19px;background:#4f4f4f;border-top:1px solid #5a5a5a"></div>
<svg style="left:120px;top:810px;" width="150" height="17" viewBox="0 0 150 17"><g fill="none" stroke="#8a8a8a" stroke-width="1.2"><path d="M6 4H22M6 9H22M6 14H22"/><path d="M6 2L9 5H3Z M6 7L9 10H3Z" fill="#8a8a8a"/><rect x="44" y="2" width="18" height="14" rx="2"/><path d="M44 8H53V16M53 8V2" /><rect x="80" y="2" width="6" height="5"/><rect x="92" y="2" width="6" height="5"/><path d="M83 7V11H95V7M89 11V14M83 14H95"/><rect x="116" y="5" width="16" height="11" rx="2"/><path d="M120 5V2H134V12"/></g></svg>
<div class="a" style="left:284px;top:808px;width:16px;height:19px;background:#505050;border:1px solid #6a6a6a;border-radius:2px"></div>
<svg style="left:287px;top:814px;" width="9" height="6" viewBox="0 0 9 6"><path d="M0.5 0.5L4.5 5L8.5 0.5" stroke="#c0c0c0" stroke-width="1.2" fill="none"/></svg>
<div class="a" style="left:91px;top:834px;width:174px;height:174px;border-radius:50%;background:conic-gradient(from -60deg,#ff0000,#ffff00,#00ff00,#00ffff,#0000ff,#ff00ff,#ff0000)"></div>
<div class="a" style="left:105.5px;top:848.5px;width:145px;height:145px;border-radius:50%;background:#474747"></div>
<div class="a" style="left:133px;top:876px;width:90px;height:90px;background:linear-gradient(to bottom,rgba(0,0,0,0),#000),linear-gradient(to right,#fff,#ff7700);box-shadow:0 0 0 1px #3a3a3a"></div>
<div class="a" style="left:180px;top:895px;width:12px;height:12px;border-radius:50%;background:#b87c45;border:1.5px solid #f0f0f0;box-shadow:0 0 0 1px #222"></div>
<div class="a" style="left:128px;top:845px;width:14px;height:18px;transform:rotate(-32deg);background:#ee7711;border:2.5px solid #fff;box-shadow:0 0 0 1px #111"></div>
<div class="a" style="left:71px;top:980px;width:26px;height:24px;background:#474747;border:1px solid #6a6a6a;border-radius:3px"></div>
<div class="a" style="left:74px;top:983px;width:20px;height:18px;background:#ffffff;"></div>
<div class="a" style="left:55px;top:966px;width:27px;height:28px;background:#7a95cf;border-radius:4px"></div>
<div class="a" style="left:58px;top:969px;width:21px;height:22px;background:#b87c45;border-radius:1px"></div>
<div class="a" style="left:55px;top:1009px;width:42px;height:15px;background:#474747;border:1px solid #6a6a6a;border-radius:5px"></div>
<svg style="left:58px;top:1012px;" width="36" height="9" viewBox="0 0 36 9"><clipPath id="ck2"><rect x="0" y="0" width="36" height="9" rx="4.5"/></clipPath><g clip-path="url(#ck2)"><rect x="0.0" y="0.0" width="4.2" height="4.5" fill="#fff"/><rect x="0.0" y="4.5" width="4.2" height="4.5" fill="#888"/><rect x="4.2" y="0.0" width="4.2" height="4.5" fill="#888"/><rect x="4.2" y="4.5" width="4.2" height="4.5" fill="#fff"/><rect x="8.4" y="0.0" width="4.2" height="4.5" fill="#fff"/><rect x="8.4" y="4.5" width="4.2" height="4.5" fill="#888"/><rect x="12.6" y="0.0" width="4.2" height="4.5" fill="#888"/><rect x="12.6" y="4.5" width="4.2" height="4.5" fill="#fff"/><rect x="16.8" y="0.0" width="4.2" height="4.5" fill="#fff"/><rect x="16.8" y="4.5" width="4.2" height="4.5" fill="#888"/><rect x="21.0" y="0.0" width="4.2" height="4.5" fill="#888"/><rect x="21.0" y="4.5" width="4.2" height="4.5" fill="#fff"/><rect x="25.2" y="0.0" width="4.2" height="4.5" fill="#fff"/><rect x="25.2" y="4.5" width="4.2" height="4.5" fill="#888"/><rect x="29.4" y="0.0" width="4.2" height="4.5" fill="#888"/><rect x="29.4" y="4.5" width="4.2" height="4.5" fill="#fff"/><rect x="33.6" y="0.0" width="4.2" height="4.5" fill="#fff"/><rect x="33.6" y="4.5" width="4.2" height="4.5" fill="#888"/></g></svg>
<div class="a" style="left:148px;top:1012px;width:10px;height:11px;background:#9a9a9a;border-radius:1px"></div>
<div class="t" style="left:148px;width:10px;text-align:center;top:1012px;font-size:10px;font-weight:bold;color:#474747">H</div>
<div class="a" style="left:193px;top:1012px;width:10px;height:11px;background:#9a9a9a;border-radius:1px"></div>
<div class="t" style="left:193px;width:10px;text-align:center;top:1012px;font-size:10px;font-weight:bold;color:#474747">S</div>
<div class="a" style="left:228px;top:1012px;width:10px;height:11px;background:#9a9a9a;border-radius:1px"></div>
<div class="t" style="left:228px;width:10px;text-align:center;top:1012px;font-size:10px;font-weight:bold;color:#474747">V</div>
<div class="t" style="left:167px;top:1011px;font-size:13px;color:#d0d0d0;">28</div>
<div class="t" style="left:207px;top:1011px;font-size:13px;color:#d0d0d0;">60</div>
<div class="t" style="left:246px;top:1011px;font-size:13px;color:#d0d0d0;">72</div>
<svg style="left:275px;top:1003px;" width="21" height="21" viewBox="0 0 21 21"><circle cx="10" cy="10" r="9" stroke="#b4b4b4" stroke-width="1.2" fill="none"/><path d="M7 5V15L15.5 10Z" stroke="#b4b4b4" stroke-width="1.2" fill="none"/></svg>
<div class="a" style="left:1581px;top:85px;width:339px;height:4px;background:#2e2e2e;"></div>
<div class="a" style="left:1581px;top:89px;width:23px;height:19px;background:#363636;"></div>
<svg style="left:1588px;top:94px;" width="10" height="10" viewBox="0 0 10 10"><path d="M0 1.5H10M0 5.5H10M0 9.5H10" stroke="#8c8c8c" stroke-width="1" fill="none"/></svg>
<div class="a" style="left:1604px;top:89px;width:93px;height:19px;background:#4a4a4a;"></div>
<div class="a" style="left:1698px;top:89px;width:36px;height:19px;background:#464646;"></div>
<div class="a" style="left:1734px;top:89px;width:1px;height:19px;background:#333;"></div>
<div class="a" style="left:1736px;top:89px;width:36px;height:19px;background:#464646;"></div>
<div class="a" style="left:1772px;top:89px;width:1px;height:19px;background:#333;"></div>
<div class="a" style="left:1774px;top:89px;width:36px;height:19px;background:#464646;"></div>
<div class="a" style="left:1810px;top:89px;width:1px;height:19px;background:#333;"></div>
<div class="a" style="left:1811px;top:89px;width:109px;height:19px;background:#363636;"></div>
<div class="a" style="left:1581px;top:108px;width:339px;height:6px;background:#4a4a4a;"></div>
<svg style="left:1612px;top:92px;" width="22" height="19" viewBox="0 0 22 19"><rect x="5" y="1" width="15" height="12" rx="2" stroke="#b4b4b4" stroke-width="1.3" fill="none"/><rect x="7.5" y="3.5" width="10" height="7" fill="#8a8a8a"/><path d="M5 4H3Q1.5 4 1.5 5.5V14Q1.5 16 3.5 16H14.5Q16 16 16 14V13" stroke="#b4b4b4" stroke-width="1.3" fill="none"/></svg>
<div class="t" style="left:1640px;top:96px;font-size:12.5px;color:#d4d4d4;">Navigator</div>
<svg style="left:1707px;top:90px;" width="140" height="19" viewBox="0 0 140 19"><g stroke="#6e6e6e" stroke-width="1.3" fill="none"><rect x="2" y="2" width="16" height="17" rx="2"/><path d="M5 2V19M15 2V19"/><path d="M40 17Q40 7 47 7Q54 7 54 17M41 12H53"/><circle cx="83" cy="11" r="8"/><path d="M83 9V16"/></g><circle cx="83" cy="6" r="1.2" fill="#6e6e6e"/><path d="M5 16L9 12L12 15L15 11V19H5Z" fill="#6e6e6e"/></svg>
<div class="a" style="left:1581px;top:114px;width:339px;height:266px;background:#2e2e2e;"></div>
<div class="a" style="left:1657px;top:115px;width:187px;height:263px;background:#ffffff;"></div>
<div class="a" style="left:1581px;top:380px;width:339px;height:53px;background:#4d4d4d;"></div>
<svg style="left:1586px;top:383px;" width="150" height="50" viewBox="0 0 150 50"><rect x="0.5" y="4.5" width="147" height="16" rx="1" fill="#4a4a4a" stroke="#6e6e6e"/><path d="M1 20L147 5V20Z" fill="#2f2f2f"/><rect x="44" y="0.5" width="5" height="24" rx="1" fill="#5c5c5c" stroke="#7a7a7a"/><rect x="0.5" y="29.5" width="147" height="16" rx="1" fill="#4a4a4a" stroke="#6e6e6e"/><path d="M1 30Q22 44 52 45H1Z" fill="#2f2f2f"/><path d="M70 45C78 33 92 30 102 30C118 30 134 39 147 45Z" fill="#2f2f2f"/><rect x="72" y="25.5" width="5" height="24" rx="1" fill="#5c5c5c" stroke="#7a7a7a"/></svg>
<div class="t" style="right:129px;top:388px;font-size:14px;color:#dcdcdc;letter-spacing:-0.5px">10.2</div>
<div class="t" style="right:129px;top:413px;font-size:14px;color:#dcdcdc;letter-spacing:-0.5px">0.0</div>
<svg style="left:1792px;top:384px;" width="128" height="48" viewBox="0 0 128 48"><g stroke="#b4b4b4" stroke-width="1.3" fill="none"><circle cx="10" cy="11" r="9"/><path d="M5 11H15"/><circle cx="35" cy="11" r="9"/><path d="M30 11H40M35 6V16"/><circle cx="59" cy="11" r="9"/><path d="M75.5 2V20M75.5 27V45"/><rect x="89" y="4" width="13" height="14" rx="1.5"/><rect x="81" y="1" width="9" height="9" rx="1" fill="#4d4d4d"/><path d="M85 5L97 15"/><rect x="109" y="3" width="15" height="15" rx="1.5"/><path d="M112 6L121 15M112 6H116M112 6V10M121 15H117M121 15V11"/><path d="M4.5 35A7.5 7.5 0 1 1 12 43.5"/><path d="M41.5 35A7.5 7.5 0 1 0 34 43.5"/><circle cx="60" cy="36" r="8" stroke-dasharray="36 2 2 2 2 2"/><path d="M60 29V35"/></g><rect x="8" y="10" width="4" height="2" fill="#b4b4b4"/><rect x="55" y="7" width="8" height="8" rx="1.5" fill="#b4b4b4"/><path d="M1 34H8L4.5 39.5Z M38 34H45L41.5 39.5Z" fill="#b4b4b4"/><circle cx="60" cy="36.5" r="2.3" fill="#b4b4b4"/><path d="M82 30V42L88 36Z" stroke="#b4b4b4" stroke-width="1.2" fill="none"/><path d="M89.5 28V44" stroke="#b4b4b4" stroke-width="1"/><path d="M97 30V42L91 36Z" fill="#b4b4b4"/><path d="M108 36H126" stroke="#b4b4b4" stroke-width="1"/><path d="M110 26H124L117 33Z" fill="#b4b4b4"/><path d="M110 45H124L117 38Z" stroke="#b4b4b4" stroke-width="1.2" fill="none"/></svg>
<div class="a" style="left:1581px;top:433px;width:339px;height:4px;background:#2e2e2e;"></div>
<div class="a" style="left:1581px;top:437px;width:23px;height:19px;background:#363636;"></div>
<svg style="left:1588px;top:442px;" width="10" height="10" viewBox="0 0 10 10"><path d="M0 1.5H10M0 5.5H10M0 9.5H10" stroke="#8c8c8c" stroke-width="1" fill="none"/></svg>
<div class="a" style="left:1604px;top:437px;width:117px;height:19px;background:#4a4a4a;"></div>
<div class="a" style="left:1722px;top:437px;width:36px;height:19px;background:#464646;"></div>
<div class="a" style="left:1758px;top:437px;width:1px;height:19px;background:#333;"></div>
<div class="a" style="left:1760px;top:437px;width:37px;height:19px;background:#464646;"></div>
<div class="a" style="left:1797px;top:437px;width:1px;height:19px;background:#333;"></div>
<div class="a" style="left:1798px;top:437px;width:122px;height:19px;background:#363636;"></div>
<div class="a" style="left:1581px;top:456px;width:339px;height:6px;background:#4a4a4a;"></div>
<svg style="left:1612px;top:438px;" width="28" height="26" viewBox="0 0 28 26"><g stroke="#b4b4b4" stroke-width="1.2" fill="none"><path d="M2 8L10 3L18 8L10 13Z"/><path d="M2 12L10 17L14 14.5M2 16L10 21L12 20"/></g><g fill="#b4b4b4"><circle cx="16" cy="17" r="1.6"/><circle cx="20" cy="17" r="1.6"/><rect x="18.5" y="19.5" width="3" height="3"/></g><path d="M14 20L16 22M16 20L14 22" stroke="#b4b4b4" stroke-width="0.8"/></svg>
<div class="t" style="left:1640px;top:445px;font-size:12px;color:#d4d4d4;">Layer Property</div>
<svg style="left:1732px;top:440px;" width="70" height="20" viewBox="0 0 70 20"><g stroke="#6e6e6e" stroke-width="1.2" fill="none"><path d="M2 8L10 3L18 8L10 13Z M2 12L10 17M2 16L10 20"/></g><path d="M12 13L20 13L16 19Z" fill="#6e6e6e"/><path d="M40 19Q40 11 46 8Q52 5 56 9Q58 13 55 19Z" stroke="#6e6e6e" stroke-width="1.2" fill="none"/><path d="M40 19L45 12L47 19Z" fill="#6e6e6e"/></svg>
<div class="a" style="left:1581px;top:462px;width:339px;height:85px;background:#3e3e3e;"></div>
<div class="a" style="left:1586px;top:474px;width:5px;height:1px;background:#707070;"></div>
<div class="a" style="left:1628px;top:474px;width:271px;height:1px;background:#707070;"></div>
<div class="t" style="left:1593px;top:469px;font-size:13px;color:#dcdcdc;">Effect</div>
<div class="a" style="left:1694px;top:521px;width:205px;height:1px;background:#707070;"></div>
<div class="a" style="left:1586px;top:521px;width:5px;height:1px;background:#707070;"></div>
<div class="t" style="left:1593px;top:515px;font-size:13.5px;color:#dcdcdc;">Expression color</div>
<div class="a" style="left:1774px;top:484px;width:126px;height:25px;background:#4a4a4a;border:1px solid #5c5c5c;border-radius:2px"></div>
<svg style="left:1776px;top:486px;" width="124" height="22" viewBox="0 0 124 22"><circle cx="11" cy="11" r="8.5" stroke="#b4b4b4" stroke-width="1.3" fill="none"/><circle cx="34" cy="14" r="6" fill="#7a7a7a"/><circle cx="39" cy="9" r="6.5" fill="#b4b4b4"/><circle cx="39" cy="9" r="4.5" fill="#4a4a4a" opacity="0.0"/><path d="M33.5 10.5A6.5 6.5 0 0 1 44 6" stroke="#4a4a4a" stroke-width="1" fill="none"/><circle cx="59" cy="4" r="1.3" fill="#b4b4b4"/><circle cx="65" cy="4" r="1.3" fill="#b4b4b4"/><circle cx="71" cy="4" r="1.3" fill="#b4b4b4"/><circle cx="62" cy="8" r="1.3" fill="#b4b4b4"/><circle cx="68" cy="8" r="1.3" fill="#b4b4b4"/><circle cx="59" cy="12" r="1.3" fill="#b4b4b4"/><circle cx="65" cy="12" r="1.3" fill="#b4b4b4"/><circle cx="71" cy="12" r="1.3" fill="#b4b4b4"/><circle cx="62" cy="16" r="1.3" fill="#b4b4b4"/><circle cx="68" cy="16" r="1.3" fill="#b4b4b4"/><circle cx="59" cy="19" r="1.3" fill="#b4b4b4"/><circle cx="65" cy="19" r="1.3" fill="#b4b4b4"/><circle cx="71" cy="19" r="1.3" fill="#b4b4b4"/><rect x="86" y="7" width="11" height="11" rx="2" stroke="#b4b4b4" stroke-width="1.2" fill="none"/><rect x="82" y="3" width="11" height="11" rx="2" fill="#8a8a8a" stroke="#b4b4b4" stroke-width="1.2"/><path d="M106 9L111 14L116 9" stroke="#b4b4b4" stroke-width="1.3" fill="none"/></svg>
<div class="a" style="left:1601px;top:535px;width:235px;height:12px;background:#4d4d4d;border:1px solid #5c5c5c;border-bottom:none;border-radius:2px 2px 0 0"></div>
<div class="a" style="left:1686px;top:538px;width:11px;height:9px;border-radius:6px 6px 0 0;background:#d05050"></div>
<div class="t" style="left:1708px;top:541px;font-size:13px;color:#d8d8d8;height:6px;overflow:hidden">Color</div>
<div class="a" style="left:1903px;top:464px;width:15px;height:15px;background:#4f4f4f;border-radius:2px"></div>
<svg style="left:1906px;top:469px;" width="9" height="6" viewBox="0 0 9 6"><path d="M0.5 5L4.5 0.5L8.5 5" stroke="#bbb" stroke-width="1.2" fill="none"/></svg>
<div class="a" style="left:1904px;top:481px;width:13px;height:41px;background:#474747;border-radius:6px"></div>
<div class="a" style="left:1903px;top:532px;width:15px;height:15px;background:#4f4f4f;border-radius:2px"></div>
<svg style="left:1906px;top:537px;" width="9" height="6" viewBox="0 0 9 6"><path d="M0.5 0.5L4.5 5L8.5 0.5" stroke="#bbb" stroke-width="1.2" fill="none"/></svg>
<div class="a" style="left:1581px;top:547px;width:339px;height:4px;background:#2e2e2e;"></div>
<div class="a" style="left:1581px;top:551px;width:23px;height:19px;background:#363636;"></div>
<svg style="left:1588px;top:556px;" width="10" height="10" viewBox="0 0 10 10"><path d="M0 1.5H10M0 5.5H10M0 9.5H10" stroke="#8c8c8c" stroke-width="1" fill="none"/></svg>
<div class="a" style="left:1604px;top:551px;width:68px;height:19px;background:#4a4a4a;"></div>
<div class="a" style="left:1673px;top:551px;width:79px;height:19px;background:#464646;"></div>
<div class="a" style="left:1752px;top:551px;width:1px;height:19px;background:#333;"></div>
<div class="a" style="left:1753px;top:551px;width:104px;height:19px;background:#464646;"></div>
<div class="a" style="left:1857px;top:551px;width:1px;height:19px;background:#333;"></div>
<div class="a" style="left:1858px;top:551px;width:62px;height:19px;background:#363636;"></div>
<div class="a" style="left:1581px;top:570px;width:339px;height:6px;background:#4a4a4a;"></div>
<svg style="left:1612px;top:554px;" width="22" height="22" viewBox="0 0 22 22"><g stroke="#b4b4b4" stroke-width="1.3" fill="none" stroke-linejoin="round"><path d="M2 7L10 2L18 7L10 12Z"/><path d="M2 11L10 16L18 11M2 15L10 20L18 15"/></g></svg>
<div class="t" style="left:1640px;top:560px;font-size:12px;color:#d8d8d8;">Layer</div>
<svg style="left:1680px;top:556px;" width="24" height="20" viewBox="0 0 24 20"><path d="M5 5H14Q19 5 19 10Q19 15 14 15H4" stroke="#6c6c6c" stroke-width="1.3" fill="none"/><path d="M3 5L7 1V9Z" fill="#6c6c6c"/></svg>
<div class="t" style="left:1710px;top:560px;font-size:12px;color:#8a8a8a;">History</div>
<svg style="left:1764px;top:554px;" width="24" height="22" viewBox="0 0 24 22"><rect x="2" y="8" width="17" height="12" stroke="#6c6c6c" stroke-width="1.2" fill="none"/><path d="M2 8L18 3" stroke="#6c6c6c" stroke-width="2"/><path d="M9 11V17L13 14Z" fill="#6c6c6c"/></svg>
<div class="t" style="left:1790px;top:560px;font-size:12px;color:#8a8a8a;">Auto Action</div>
<div class="a" style="left:1581px;top:576px;width:339px;height:84px;background:#4d4d4d;"></div>
<div class="a" style="left:1582px;top:578px;width:50px;height:25px;background:#505050;border:1px solid #5f5f5f;border-radius:2px"></div>
<div class="a" style="left:1587px;top:582px;width:21px;height:18px;background:#4d4d4d;border:1.3px solid #bdbdbd;border-radius:2px"></div>
<svg style="left:1613px;top:587px;" width="10" height="6" viewBox="0 0 10 6"><path d="M0.5 0.5L5.0 5L9.5 0.5" stroke="#c0c0c0" stroke-width="1.2" fill="none"/></svg>
<div class="a" style="left:1635px;top:578px;width:116px;height:25px;background:#505050;border:1px solid #5f5f5f;border-radius:2px"></div>
<div class="t" style="left:1652px;top:584px;font-size:13.5px;color:#dcdcdc;">Add (Glow)</div>
<svg style="left:1729px;top:587px;" width="11" height="7" viewBox="0 0 11 7"><path d="M0.5 0.5L5.5 6L10.5 0.5" stroke="#c0c0c0" stroke-width="1.2" fill="none"/></svg>
<svg style="left:1758px;top:584px;" width="115" height="11" viewBox="0 0 115 11"><rect x="0" y="0" width="115" height="11" fill="#8a8a8a"/><rect x="0" y="0.0" width="5" height="5.5" fill="#e8e8e8"/><rect x="0" y="5.5" width="5" height="5.5" fill="#9a9a9a"/><rect x="5" y="0.0" width="5" height="5.5" fill="#9a9a9a"/><rect x="5" y="5.5" width="5" height="5.5" fill="#e8e8e8"/><rect x="10" y="0.0" width="5" height="5.5" fill="#e8e8e8"/><rect x="10" y="5.5" width="5" height="5.5" fill="#9a9a9a"/><rect x="15" y="0.0" width="5" height="5.5" fill="#9a9a9a"/><rect x="15" y="5.5" width="5" height="5.5" fill="#e8e8e8"/><rect x="20" y="0.0" width="5" height="5.5" fill="#e8e8e8"/><rect x="20" y="5.5" width="5" height="5.5" fill="#9a9a9a"/><rect x="25" y="0.0" width="5" height="5.5" fill="#9a9a9a"/><rect x="25" y="5.5" width="5" height="5.5" fill="#e8e8e8"/><rect x="30" y="0.0" width="5" height="5.5" fill="#e8e8e8"/><rect x="30" y="5.5" width="5" height="5.5" fill="#9a9a9a"/><rect x="35" y="0.0" width="5" height="5.5" fill="#9a9a9a"/><rect x="35" y="5.5" width="5" height="5.5" fill="#e8e8e8"/><rect x="40" y="0.0" width="5" height="5.5" fill="#e8e8e8"/><rect x="40" y="5.5" width="5" height="5.5" fill="#9a9a9a"/><rect x="45" y="0.0" width="5" height="5.5" fill="#9a9a9a"/><rect x="45" y="5.5" width="5" height="5.5" fill="#e8e8e8"/><rect x="50" y="0.0" width="5" height="5.5" fill="#e8e8e8"/><rect x="50" y="5.5" width="5" height="5.5" fill="#9a9a9a"/><rect x="55" y="0.0" width="5" height="5.5" fill="#9a9a9a"/><rect x="55" y="5.5" width="5" height="5.5" fill="#e8e8e8"/><rect x="56" y="-6" width="5" height="24" rx="1" fill="#6a6a6a" stroke="#858585" stroke-width="0.8"/></svg>
<div class="t" style="right:18px;top:584px;font-size:14px;color:#dcdcdc;">50</div>
<svg style="left:1904px;top:582px;" width="12" height="20" viewBox="0 0 12 20"><path d="M1 7L6 2L11 7M1 13L6 18L11 13" stroke="#b8b8b8" stroke-width="1.1" fill="none"/></svg>
<div class="a" style="left:1657px;top:604px;width:25px;height:24px;background:#5f6a85;border-radius:2px"></div>
<svg style="left:1659px;top:605px;" width="260" height="24" viewBox="0 0 260 24"><rect x="2" y="7" width="14" height="13" rx="3" fill="#7e879c"/><rect x="5" y="4" width="14" height="13" rx="3" fill="#9aa0ae"/><rect x="7" y="2" width="14" height="13" rx="3" stroke="#c8c8c8" stroke-width="1.5" stroke-dasharray="3 2" fill="none"/><path d="M27 7H43M31 3L39 11M39 3L31 11" stroke="#b4b4b4" stroke-width="1.1"/><path d="M33 9H37L39 21H31Z" fill="#b4b4b4"/><path d="M54 4V14L60 19L61 12Q62 7 59 4Z" stroke="#6f6f6f" stroke-width="1.2" fill="none"/><path d="M58 18Q62 21 67 18" stroke="#6f6f6f" stroke-width="1.2" fill="none"/><path d="M82 10V7Q82 3 86 3Q90 3 90 7V10" stroke="#b4b4b4" stroke-width="1.8" fill="none"/><rect x="79" y="10" width="14" height="10" rx="2" fill="#b4b4b4"/><rect x="111" y="2" width="5" height="5" fill="#b4b4b4"/><rect x="121" y="2" width="5" height="5" fill="#b4b4b4"/><rect x="116" y="7" width="5" height="5" fill="#b4b4b4"/><rect x="121" y="12" width="5" height="5" fill="#b4b4b4"/><path d="M104 15V12Q104 9 107 9Q110 9 110 12V15" stroke="#b4b4b4" stroke-width="1.5" fill="none"/><rect x="102" y="14" width="10" height="8" rx="1.5" fill="#b4b4b4"/><rect x="123" y="0" width="44" height="24" rx="2" fill="#505050"/><rect x="129" y="4" width="17" height="15" rx="3" fill="#666"/><circle cx="138" cy="11" r="5" fill="#505050"/><path d="M140 14L148 22M148 14L140 22" stroke="#707070" stroke-width="1.5"/><path d="M152 9L157 14L162 9" stroke="#707070" stroke-width="1.2" fill="none"/><rect x="169" y="0" width="42" height="24" rx="2" fill="#505050"/><path d="M176 3H194L176 20Z" fill="#666"/><path d="M186 14L194 22M194 14L186 22" stroke="#707070" stroke-width="1.5"/><path d="M198 9L203 14L208 9" stroke="#707070" stroke-width="1.2" fill="none"/></svg>
<div class="a" style="left:1874px;top:604px;width:45px;height:25px;background:#505050;border:1px solid #626262;border-radius:2px"></div>
<div class="a" style="left:1886px;top:612px;width:14px;height:14px;background:#ffffff;"></div>
<div class="a" style="left:1878px;top:607px;width:14px;height:14px;background:#3b87e6;"></div>
<svg style="left:1904px;top:612px;" width="11" height="7" viewBox="0 0 11 7"><path d="M0.5 0.5L5.5 6L10.5 0.5" stroke="#c0c0c0" stroke-width="1.2" fill="none"/></svg>
<svg style="left:1583px;top:632px;" width="337" height="26" viewBox="0 0 337 26"><rect x="2" y="2" width="17" height="17" rx="2" stroke="#b4b4b4" stroke-width="1.2" fill="none"/><path d="M2 8H19M2 13H19M5 5H8M5 10.5H8M5 16H8" stroke="#b4b4b4" stroke-width="1.1"/><g stroke="#b4b4b4" stroke-width="1.2" fill="none"><path d="M140 15V4Q140 2 142 2H154Q156 2 156 4V12"/><path d="M140 14L144 18H150"/><circle cx="156" cy="18" r="5" fill="#4d4d4d"/><path d="M156 15V21M153 18H159"/><path d="M165 15V4Q165 2 167 2H179Q181 2 181 4V12M165 14L169 18H175"/><path d="M168 9L173 6L178 9V14L173 17L168 14Z M168 9L173 12L178 9M173 12V17"/><circle cx="181" cy="18" r="5" fill="#4d4d4d"/><path d="M181 15V21M178 18H184"/><circle cx="206" cy="18" r="5" fill="#4d4d4d"/><path d="M206 15V21M203 18H209"/></g><path d="M189 17V4Q189 3 190 3H196L198 5H206Q207 5 207 6V12Q203 12 201 16L200 17Z" fill="#b4b4b4"/><g stroke="#b4b4b4" stroke-width="1.2" fill="none"><rect x="221" y="2" width="12" height="11" rx="2"/><path d="M214 10V18Q214 20 216 20H224Q226 20 226 18"/><path d="M222 14L216 19"/><rect x="246" y="2" width="13" height="12" rx="2"/><path d="M239 10V18Q239 20 241 20H249"/><path d="M249 10L242 17M242 13V17H246"/></g><rect x="224" y="5" width="6" height="5" fill="#b4b4b4"/><rect x="264" y="2" width="19" height="19" rx="3" fill="#b4b4b4"/><circle cx="273.5" cy="11.5" r="5.5" fill="#4d4d4d"/><g stroke="#6c6c6c" stroke-width="1.2" fill="none"><path d="M289 16V5Q289 3 291 3H301"/><path d="M298 8L292 12"/></g><rect x="294" y="9" width="16" height="12" rx="3" fill="#6c6c6c"/><circle cx="302" cy="15" r="3.2" fill="#4d4d4d"/><path d="M317 5H333M321 5V2.5H329V5M318.5 5.5L319.5 21H330.5L331.5 5.5M322 8V18M325 8V18M328 8V18" stroke="#b4b4b4" stroke-width="1.1" fill="none"/></svg>
<div class="a" style="left:1581px;top:660px;width:339px;height:371px;background:#3e3e3e;"></div>
<div class="a" style="left:1903px;top:660px;width:17px;height:371px;background:#3b3b3b;"></div>
<div class="a" style="left:1581px;top:661px;width:322px;height:43px;background:#3c3c3c;"></div>
<div class="a" style="left:1581px;top:703px;width:322px;height:1px;background:#2a2a2a;"></div>
<div class="a" style="left:1606px;top:661px;width:1px;height:42px;background:#2a2a2a;"></div>
<div class="a" style="left:1629px;top:661px;width:1px;height:42px;background:#2a2a2a;"></div>
<svg style="left:1584px;top:673px;" width="19" height="18" viewBox="0 0 19 18"><path d="M1 10Q9.5 1 18 10" stroke="#c4c4c4" stroke-width="1.6" fill="none"/><circle cx="9.5" cy="10" r="4" fill="#c4c4c4"/></svg>
<div class="a" style="left:1611px;top:676px;width:14px;height:14px;background:#383838;border:1px solid #2c2c2c;border-radius:3px"></div>
<div class="a" style="left:1640px;top:666px;width:26px;height:34px;background:#111;"></div>
<svg style="left:1641px;top:667px;" width="24" height="32" viewBox="0 0 24 32"><clipPath id="clline"><rect width="24" height="32"/></clipPath><g clip-path="url(#clline)"><rect x="0" y="0" width="6" height="6" fill="#ffffff"/><rect x="0" y="6" width="6" height="6" fill="#cccccc"/><rect x="0" y="12" width="6" height="6" fill="#ffffff"/><rect x="0" y="18" width="6" height="6" fill="#cccccc"/><rect x="0" y="24" width="6" height="6" fill="#ffffff"/><rect x="0" y="30" width="6" height="6" fill="#cccccc"/><rect x="6" y="0" width="6" height="6" fill="#cccccc"/><rect x="6" y="6" width="6" height="6" fill="#ffffff"/><rect x="6" y="12" width="6" height="6" fill="#cccccc"/><rect x="6" y="18" width="6" height="6" fill="#ffffff"/><rect x="6" y="24" width="6" height="6" fill="#cccccc"/><rect x="6" y="30" width="6" height="6" fill="#ffffff"/><rect x="12" y="0" width="6" height="6" fill="#ffffff"/><rect x="12" y="6" width="6" height="6" fill="#cccccc"/><rect x="12" y="12" width="6" height="6" fill="#ffffff"/><rect x="12" y="18" width="6" height="6" fill="#cccccc"/><rect x="12" y="24" width="6" height="6" fill="#ffffff"/><rect x="12" y="30" width="6" height="6" fill="#cccccc"/><rect x="18" y="0" width="6" height="6" fill="#cccccc"/><rect x="18" y="6" width="6" height="6" fill="#ffffff"/><rect x="18" y="12" width="6" height="6" fill="#cccccc"/><rect x="18" y="18" width="6" height="6" fill="#ffffff"/><rect x="18" y="24" width="6" height="6" fill="#cccccc"/><rect x="18" y="30" width="6" height="6" fill="#ffffff"/><rect x="24" y="0" width="6" height="6" fill="#ffffff"/><rect x="24" y="6" width="6" height="6" fill="#cccccc"/><rect x="24" y="12" width="6" height="6" fill="#ffffff"/><rect x="24" y="18" width="6" height="6" fill="#cccccc"/><rect x="24" y="24" width="6" height="6" fill="#ffffff"/><rect x="24" y="30" width="6" height="6" fill="#cccccc"/><path d="M6 8Q13 2 20 8M6 14Q7 20 13 22Q18 20 20 14M5 24L21 27M8 28L19 30" stroke="#999" stroke-width="0.5" fill="none" opacity="0.5"/></g></svg>
<div class="t" style="left:1675px;top:667px;font-size:13px;color:#dcdcdc;letter-spacing:0px">100 % Normal</div>
<div class="t" style="left:1675px;top:685px;font-size:13px;color:#dcdcdc;">Lineart</div>
<div class="a" style="left:1581px;top:704px;width:322px;height:43px;background:#3c3c3c;"></div>
<div class="a" style="left:1581px;top:746px;width:322px;height:1px;background:#2a2a2a;"></div>
<div class="a" style="left:1606px;top:704px;width:1px;height:42px;background:#2a2a2a;"></div>
<div class="a" style="left:1629px;top:704px;width:1px;height:42px;background:#2a2a2a;"></div>
<div class="a" style="left:1630px;top:704px;width:273px;height:42px;background:#5f6a85;"></div>
<svg style="left:1584px;top:716px;" width="19" height="18" viewBox="0 0 19 18"><path d="M1 10Q9.5 1 18 10" stroke="#c4c4c4" stroke-width="1.6" fill="none"/><circle cx="9.5" cy="10" r="4" fill="#c4c4c4"/></svg>
<svg style="left:1607px;top:717px;" width="20" height="20" viewBox="0 0 20 20"><path d="M15 2L4 13" stroke="#b4b4b4" stroke-width="3.5" stroke-linecap="round"/><path d="M1.5 16L2.5 12L5.5 15Z" fill="#b4b4b4"/><path d="M1 18H19" stroke="#b4b4b4" stroke-width="1.3"/></svg>
<div class="a" style="left:1633px;top:708px;width:5px;height:35px;background:#e57373;border-radius:3px"></div>
<div class="a" style="left:1641px;top:705px;width:32px;height:40px;background:#5f6a85;border:1.3px solid #e8e8ee"></div>
<div class="a" style="left:1644px;top:708px;width:26px;height:34px;background:#111;"></div>
<svg style="left:1645px;top:709px;" width="24" height="32" viewBox="0 0 24 32"><clipPath id="clhl"><rect width="24" height="32"/></clipPath><g clip-path="url(#clhl)"><rect x="0" y="0" width="6" height="6" fill="#ffffff"/><rect x="0" y="6" width="6" height="6" fill="#cccccc"/><rect x="0" y="12" width="6" height="6" fill="#ffffff"/><rect x="0" y="18" width="6" height="6" fill="#cccccc"/><rect x="0" y="24" width="6" height="6" fill="#ffffff"/><rect x="0" y="30" width="6" height="6" fill="#cccccc"/><rect x="6" y="0" width="6" height="6" fill="#cccccc"/><rect x="6" y="6" width="6" height="6" fill="#ffffff"/><rect x="6" y="12" width="6" height="6" fill="#cccccc"/><rect x="6" y="18" width="6" height="6" fill="#ffffff"/><rect x="6" y="24" width="6" height="6" fill="#cccccc"/><rect x="6" y="30" width="6" height="6" fill="#ffffff"/><rect x="12" y="0" width="6" height="6" fill="#ffffff"/><rect x="12" y="6" width="6" height="6" fill="#cccccc"/><rect x="12" y="12" width="6" height="6" fill="#ffffff"/><rect x="12" y="18" width="6" height="6" fill="#cccccc"/><rect x="12" y="24" width="6" height="6" fill="#ffffff"/><rect x="12" y="30" width="6" height="6" fill="#cccccc"/><rect x="18" y="0" width="6" height="6" fill="#cccccc"/><rect x="18" y="6" width="6" height="6" fill="#ffffff"/><rect x="18" y="12" width="6" height="6" fill="#cccccc"/><rect x="18" y="18" width="6" height="6" fill="#ffffff"/><rect x="18" y="24" width="6" height="6" fill="#cccccc"/><rect x="18" y="30" width="6" height="6" fill="#ffffff"/><rect x="24" y="0" width="6" height="6" fill="#ffffff"/><rect x="24" y="6" width="6" height="6" fill="#cccccc"/><rect x="24" y="12" width="6" height="6" fill="#ffffff"/><rect x="24" y="18" width="6" height="6" fill="#cccccc"/><rect x="24" y="24" width="6" height="6" fill="#ffffff"/><rect x="24" y="30" width="6" height="6" fill="#cccccc"/><path d="M7 9L10 7L12 11L9 13Z" fill="#c9844a"/><path d="M18 23L20 21L21 25L18 26Z" fill="#c9844a"/></g></svg>
<div class="t" style="left:1680px;top:710px;font-size:13px;color:#e4e6ee;letter-spacing:0px">50 % Add (Glow)</div>
<div class="t" style="left:1680px;top:728px;font-size:13px;color:#e4e6ee;">Highlights</div>
<div class="a" style="left:1581px;top:747px;width:322px;height:43px;background:#3c3c3c;"></div>
<div class="a" style="left:1581px;top:789px;width:322px;height:1px;background:#2a2a2a;"></div>
<div class="a" style="left:1606px;top:747px;width:1px;height:42px;background:#2a2a2a;"></div>
<div class="a" style="left:1629px;top:747px;width:1px;height:42px;background:#2a2a2a;"></div>
<svg style="left:1584px;top:759px;" width="19" height="18" viewBox="0 0 19 18"><path d="M1 10Q9.5 1 18 10" stroke="#c4c4c4" stroke-width="1.6" fill="none"/><circle cx="9.5" cy="10" r="4" fill="#c4c4c4"/></svg>
<div class="a" style="left:1611px;top:762px;width:14px;height:14px;background:#383838;border:1px solid #2c2c2c;border-radius:3px"></div>
<div class="a" style="left:1633px;top:751px;width:5px;height:35px;background:#e57373;border-radius:3px"></div>
<div class="a" style="left:1645px;top:752px;width:26px;height:34px;background:#111;"></div>
<svg style="left:1646px;top:753px;" width="24" height="32" viewBox="0 0 24 32"><clipPath id="cls3"><rect width="24" height="32"/></clipPath><g clip-path="url(#cls3)"><rect x="0" y="0" width="6" height="6" fill="#ffffff"/><rect x="0" y="6" width="6" height="6" fill="#cccccc"/><rect x="0" y="12" width="6" height="6" fill="#ffffff"/><rect x="0" y="18" width="6" height="6" fill="#cccccc"/><rect x="0" y="24" width="6" height="6" fill="#ffffff"/><rect x="0" y="30" width="6" height="6" fill="#cccccc"/><rect x="6" y="0" width="6" height="6" fill="#cccccc"/><rect x="6" y="6" width="6" height="6" fill="#ffffff"/><rect x="6" y="12" width="6" height="6" fill="#cccccc"/><rect x="6" y="18" width="6" height="6" fill="#ffffff"/><rect x="6" y="24" width="6" height="6" fill="#cccccc"/><rect x="6" y="30" width="6" height="6" fill="#ffffff"/><rect x="12" y="0" width="6" height="6" fill="#ffffff"/><rect x="12" y="6" width="6" height="6" fill="#cccccc"/><rect x="12" y="12" width="6" height="6" fill="#ffffff"/><rect x="12" y="18" width="6" height="6" fill="#cccccc"/><rect x="12" y="24" width="6" height="6" fill="#ffffff"/><rect x="12" y="30" width="6" height="6" fill="#cccccc"/><rect x="18" y="0" width="6" height="6" fill="#cccccc"/><rect x="18" y="6" width="6" height="6" fill="#ffffff"/><rect x="18" y="12" width="6" height="6" fill="#cccccc"/><rect x="18" y="18" width="6" height="6" fill="#ffffff"/><rect x="18" y="24" width="6" height="6" fill="#cccccc"/><rect x="18" y="30" width="6" height="6" fill="#ffffff"/><rect x="24" y="0" width="6" height="6" fill="#ffffff"/><rect x="24" y="6" width="6" height="6" fill="#cccccc"/><rect x="24" y="12" width="6" height="6" fill="#ffffff"/><rect x="24" y="18" width="6" height="6" fill="#cccccc"/><rect x="24" y="24" width="6" height="6" fill="#ffffff"/><rect x="24" y="30" width="6" height="6" fill="#cccccc"/><path d="M7 16Q5 22 8 27L10 25Z M17 17Q19 22 19 27L17 26Z" fill="#7a4218"/><circle cx="16" cy="6" r="0.8" fill="#7a4218"/></g></svg>
<div class="t" style="left:1680px;top:753px;font-size:13px;color:#dcdcdc;letter-spacing:0px">75 % Multiply</div>
<div class="t" style="left:1680px;top:771px;font-size:13px;color:#dcdcdc;">Shading 3</div>
<div class="a" style="left:1581px;top:790px;width:322px;height:43px;background:#3c3c3c;"></div>
<div class="a" style="left:1581px;top:832px;width:322px;height:1px;background:#2a2a2a;"></div>
<div class="a" style="left:1606px;top:790px;width:1px;height:42px;background:#2a2a2a;"></div>
<div class="a" style="left:1629px;top:790px;width:1px;height:42px;background:#2a2a2a;"></div>
<svg style="left:1584px;top:802px;" width="19" height="18" viewBox="0 0 19 18"><path d="M1 10Q9.5 1 18 10" stroke="#c4c4c4" stroke-width="1.6" fill="none"/><circle cx="9.5" cy="10" r="4" fill="#c4c4c4"/></svg>
<div class="a" style="left:1611px;top:805px;width:14px;height:14px;background:#383838;border:1px solid #2c2c2c;border-radius:3px"></div>
<div class="a" style="left:1633px;top:794px;width:5px;height:35px;background:#e57373;border-radius:3px"></div>
<div class="a" style="left:1645px;top:795px;width:26px;height:34px;background:#111;"></div>
<svg style="left:1646px;top:796px;" width="24" height="32" viewBox="0 0 24 32"><clipPath id="cls2"><rect width="24" height="32"/></clipPath><g clip-path="url(#cls2)"><rect x="0" y="0" width="6" height="6" fill="#ffffff"/><rect x="0" y="6" width="6" height="6" fill="#cccccc"/><rect x="0" y="12" width="6" height="6" fill="#ffffff"/><rect x="0" y="18" width="6" height="6" fill="#cccccc"/><rect x="0" y="24" width="6" height="6" fill="#ffffff"/><rect x="0" y="30" width="6" height="6" fill="#cccccc"/><rect x="6" y="0" width="6" height="6" fill="#cccccc"/><rect x="6" y="6" width="6" height="6" fill="#ffffff"/><rect x="6" y="12" width="6" height="6" fill="#cccccc"/><rect x="6" y="18" width="6" height="6" fill="#ffffff"/><rect x="6" y="24" width="6" height="6" fill="#cccccc"/><rect x="6" y="30" width="6" height="6" fill="#ffffff"/><rect x="12" y="0" width="6" height="6" fill="#ffffff"/><rect x="12" y="6" width="6" height="6" fill="#cccccc"/><rect x="12" y="12" width="6" height="6" fill="#ffffff"/><rect x="12" y="18" width="6" height="6" fill="#cccccc"/><rect x="12" y="24" width="6" height="6" fill="#ffffff"/><rect x="12" y="30" width="6" height="6" fill="#cccccc"/><rect x="18" y="0" width="6" height="6" fill="#cccccc"/><rect x="18" y="6" width="6" height="6" fill="#ffffff"/><rect x="18" y="12" width="6" height="6" fill="#cccccc"/><rect x="18" y="18" width="6" height="6" fill="#ffffff"/><rect x="18" y="24" width="6" height="6" fill="#cccccc"/><rect x="18" y="30" width="6" height="6" fill="#ffffff"/><rect x="24" y="0" width="6" height="6" fill="#ffffff"/><rect x="24" y="6" width="6" height="6" fill="#cccccc"/><rect x="24" y="12" width="6" height="6" fill="#ffffff"/><rect x="24" y="18" width="6" height="6" fill="#cccccc"/><rect x="24" y="24" width="6" height="6" fill="#ffffff"/><rect x="24" y="30" width="6" height="6" fill="#cccccc"/><path d="M10 7Q14 5 17 9L14 10Z M16 15Q19 18 18 22L16 20Z" fill="#8a5a2a"/></g></svg>
<div class="t" style="left:1680px;top:796px;font-size:13px;color:#dcdcdc;letter-spacing:0px">55 % Multiply</div>
<div class="t" style="left:1680px;top:814px;font-size:13px;color:#dcdcdc;">Shading 2</div>
<div class="a" style="left:1581px;top:833px;width:322px;height:43px;background:#3c3c3c;"></div>
<div class="a" style="left:1581px;top:875px;width:322px;height:1px;background:#2a2a2a;"></div>
<div class="a" style="left:1606px;top:833px;width:1px;height:42px;background:#2a2a2a;"></div>
<div class="a" style="left:1629px;top:833px;width:1px;height:42px;background:#2a2a2a;"></div>
<svg style="left:1584px;top:845px;" width="19" height="18" viewBox="0 0 19 18"><path d="M1 10Q9.5 1 18 10" stroke="#c4c4c4" stroke-width="1.6" fill="none"/><circle cx="9.5" cy="10" r="4" fill="#c4c4c4"/></svg>
<div class="a" style="left:1611px;top:848px;width:14px;height:14px;background:#383838;border:1px solid #2c2c2c;border-radius:3px"></div>
<div class="a" style="left:1633px;top:837px;width:5px;height:35px;background:#e57373;border-radius:3px"></div>
<div class="a" style="left:1645px;top:838px;width:26px;height:34px;background:#111;"></div>
<svg style="left:1646px;top:839px;" width="24" height="32" viewBox="0 0 24 32"><clipPath id="cls1"><rect width="24" height="32"/></clipPath><g clip-path="url(#cls1)"><rect x="0" y="0" width="6" height="6" fill="#ffffff"/><rect x="0" y="6" width="6" height="6" fill="#cccccc"/><rect x="0" y="12" width="6" height="6" fill="#ffffff"/><rect x="0" y="18" width="6" height="6" fill="#cccccc"/><rect x="0" y="24" width="6" height="6" fill="#ffffff"/><rect x="0" y="30" width="6" height="6" fill="#cccccc"/><rect x="6" y="0" width="6" height="6" fill="#cccccc"/><rect x="6" y="6" width="6" height="6" fill="#ffffff"/><rect x="6" y="12" width="6" height="6" fill="#cccccc"/><rect x="6" y="18" width="6" height="6" fill="#ffffff"/><rect x="6" y="24" width="6" height="6" fill="#cccccc"/><rect x="6" y="30" width="6" height="6" fill="#ffffff"/><rect x="12" y="0" width="6" height="6" fill="#ffffff"/><rect x="12" y="6" width="6" height="6" fill="#cccccc"/><rect x="12" y="12" width="6" height="6" fill="#ffffff"/><rect x="12" y="18" width="6" height="6" fill="#cccccc"/><rect x="12" y="24" width="6" height="6" fill="#ffffff"/><rect x="12" y="30" width="6" height="6" fill="#cccccc"/><rect x="18" y="0" width="6" height="6" fill="#cccccc"/><rect x="18" y="6" width="6" height="6" fill="#ffffff"/><rect x="18" y="12" width="6" height="6" fill="#cccccc"/><rect x="18" y="18" width="6" height="6" fill="#ffffff"/><rect x="18" y="24" width="6" height="6" fill="#cccccc"/><rect x="18" y="30" width="6" height="6" fill="#ffffff"/><rect x="24" y="0" width="6" height="6" fill="#ffffff"/><rect x="24" y="6" width="6" height="6" fill="#cccccc"/><rect x="24" y="12" width="6" height="6" fill="#ffffff"/><rect x="24" y="18" width="6" height="6" fill="#cccccc"/><rect x="24" y="24" width="6" height="6" fill="#ffffff"/><rect x="24" y="30" width="6" height="6" fill="#cccccc"/><path d="M5 25Q7 18 9 17Q10 22 10 27Z M16 20Q19 23 19 28L16 27Z" fill="#6a3a12"/></g></svg>
<div class="t" style="left:1680px;top:839px;font-size:13px;color:#dcdcdc;letter-spacing:0px">50 % Multiply</div>
<div class="t" style="left:1680px;top:857px;font-size:13px;color:#dcdcdc;">Shading 1</div>
<div class="a" style="left:1581px;top:876px;width:322px;height:43px;background:#3c3c3c;"></div>
<div class="a" style="left:1581px;top:918px;width:322px;height:1px;background:#2a2a2a;"></div>
<div class="a" style="left:1606px;top:876px;width:1px;height:42px;background:#2a2a2a;"></div>
<div class="a" style="left:1629px;top:876px;width:1px;height:42px;background:#2a2a2a;"></div>
<svg style="left:1584px;top:888px;" width="19" height="18" viewBox="0 0 19 18"><path d="M1 10Q9.5 1 18 10" stroke="#c4c4c4" stroke-width="1.6" fill="none"/><circle cx="9.5" cy="10" r="4" fill="#c4c4c4"/></svg>
<div class="a" style="left:1611px;top:891px;width:14px;height:14px;background:#383838;border:1px solid #2c2c2c;border-radius:3px"></div>
<div class="a" style="left:1640px;top:881px;width:26px;height:34px;background:#111;"></div>
<svg style="left:1641px;top:882px;" width="24" height="32" viewBox="0 0 24 32"><clipPath id="clbase"><rect width="24" height="32"/></clipPath><g clip-path="url(#clbase)"><rect x="0" y="0" width="6" height="6" fill="#ffffff"/><rect x="0" y="6" width="6" height="6" fill="#cccccc"/><rect x="0" y="12" width="6" height="6" fill="#ffffff"/><rect x="0" y="18" width="6" height="6" fill="#cccccc"/><rect x="0" y="24" width="6" height="6" fill="#ffffff"/><rect x="0" y="30" width="6" height="6" fill="#cccccc"/><rect x="6" y="0" width="6" height="6" fill="#cccccc"/><rect x="6" y="6" width="6" height="6" fill="#ffffff"/><rect x="6" y="12" width="6" height="6" fill="#cccccc"/><rect x="6" y="18" width="6" height="6" fill="#ffffff"/><rect x="6" y="24" width="6" height="6" fill="#cccccc"/><rect x="6" y="30" width="6" height="6" fill="#ffffff"/><rect x="12" y="0" width="6" height="6" fill="#ffffff"/><rect x="12" y="6" width="6" height="6" fill="#cccccc"/><rect x="12" y="12" width="6" height="6" fill="#ffffff"/><rect x="12" y="18" width="6" height="6" fill="#cccccc"/><rect x="12" y="24" width="6" height="6" fill="#ffffff"/><rect x="12" y="30" width="6" height="6" fill="#cccccc"/><rect x="18" y="0" width="6" height="6" fill="#cccccc"/><rect x="18" y="6" width="6" height="6" fill="#ffffff"/><rect x="18" y="12" width="6" height="6" fill="#cccccc"/><rect x="18" y="18" width="6" height="6" fill="#ffffff"/><rect x="18" y="24" width="6" height="6" fill="#cccccc"/><rect x="18" y="30" width="6" height="6" fill="#ffffff"/><rect x="24" y="0" width="6" height="6" fill="#ffffff"/><rect x="24" y="6" width="6" height="6" fill="#cccccc"/><rect x="24" y="12" width="6" height="6" fill="#ffffff"/><rect x="24" y="18" width="6" height="6" fill="#cccccc"/><rect x="24" y="24" width="6" height="6" fill="#ffffff"/><rect x="24" y="30" width="6" height="6" fill="#cccccc"/><path d="M6 28Q2 18 6 9Q12 1 19 8Q24 16 20 30Z" fill="#7a4a24"/><path d="M8 12Q13 7 18 12V20Q15 26 10 24Q7 20 8 12Z" fill="#d9b89d"/><path d="M7 22H20L22 32H6Z" fill="#d9b89d"/><path d="M3 20Q6 26 5 32L9 30Q8 24 7 20Z M20 20Q18 28 20 31L23 27Q22 22 20 20Z" fill="#5a3212"/></g></svg>
<div class="t" style="left:1675px;top:882px;font-size:13px;color:#dcdcdc;letter-spacing:0px">100 % Normal</div>
<div class="t" style="left:1675px;top:900px;font-size:13px;color:#dcdcdc;">Base colors</div>
<div class="a" style="left:1581px;top:919px;width:322px;height:43px;background:#3c3c3c;"></div>
<div class="a" style="left:1581px;top:961px;width:322px;height:1px;background:#2a2a2a;"></div>
<div class="a" style="left:1606px;top:919px;width:1px;height:42px;background:#2a2a2a;"></div>
<div class="a" style="left:1629px;top:919px;width:1px;height:42px;background:#2a2a2a;"></div>
<svg style="left:1584px;top:931px;" width="19" height="18" viewBox="0 0 19 18"><path d="M1 10Q9.5 1 18 10" stroke="#c4c4c4" stroke-width="1.6" fill="none"/><circle cx="9.5" cy="10" r="4" fill="#c4c4c4"/></svg>
<div class="a" style="left:1611px;top:934px;width:14px;height:14px;background:#383838;border:1px solid #2c2c2c;border-radius:3px"></div>
<div class="a" style="left:1640px;top:924px;width:26px;height:34px;background:#ffffff;border:1px solid #222"></div>
<div class="a" style="left:1680px;top:924px;width:23px;height:22px;background:#ffffff;border:1px solid #222"></div>
<svg style="left:1684px;top:927px;" width="16" height="17" viewBox="0 0 16 17"><path d="M2 1.5H13V15.5H5L2 12.5Z" stroke="#333" stroke-width="1.2" fill="none"/><path d="M2 12.5H5V15.5Z" fill="#333"/></svg>
<div class="t" style="left:1707px;top:942px;font-size:13px;color:#d8d8d8;">Paper</div>
<svg style="left:0;top:0" width="1920" height="1031" viewBox="0 0 1920 1031"><defs>
<filter id="b1c" x="-20%" y="-20%" width="140%" height="140%"><feGaussianBlur stdDeviation="1.0"/></filter>
<filter id="b3c" x="-50%" y="-50%" width="200%" height="200%"><feGaussianBlur stdDeviation="6"/></filter>
<filter id="b2c" x="-50%" y="-50%" width="200%" height="200%"><feGaussianBlur stdDeviation="3"/></filter>
<linearGradient id="lhc" gradientUnits="userSpaceOnUse" x1="700" y1="560" x2="830" y2="790"><stop offset="0" stop-color="#4e2b0e"/><stop offset="0.55" stop-color="#4a290f"/><stop offset="1" stop-color="#2a1305"/></linearGradient>
<linearGradient id="rhc" gradientUnits="userSpaceOnUse" x1="960" y1="0" x2="1076" y2="0"><stop offset="0" stop-color="#2a1204"/><stop offset="0.3" stop-color="#3a1c08"/><stop offset="0.45" stop-color="#4a260c"/><stop offset="0.62" stop-color="#6a3c16"/><stop offset="1" stop-color="#6e4018"/></linearGradient>
</defs><path d="M742.0,461.0 L742.0,500.0 L744.0,560.0 L732.0,620.0 L722.0,700.0 L724.0,775.0 L740.0,829.0 L766.0,891.0 L772.0,898.0 L819.0,893.0 L890.0,884.0 L923.0,876.0 L987.0,852.0 L1038.0,822.0 L1029.0,814.0 L1000.0,700.0 L991.0,574.0 L1019.0,561.0 L1042.0,544.0 L1051.0,523.0 L1051.0,483.0 L1042.0,463.0 L1029.0,459.0 L1012.0,468.0 L1000.0,483.0 L995.0,489.0 L982.0,478.0 L972.0,457.0 L965.0,429.0 L959.0,395.0 L929.0,406.0 L900.0,419.0 L871.0,427.0 L828.0,436.0 L785.0,442.0 L755.0,449.0 Z" fill="#d9b99f"/><clipPath id="lcc"><path d="M743.0,558.0 C740.0,565.8 731.3,588.7 725.0,605.0 C718.7,621.3 710.7,639.2 705.0,656.0 C699.3,672.8 693.5,690.8 691.0,706.0 C688.5,721.2 688.8,736.0 690.0,747.0 C691.2,758.0 694.8,765.0 698.0,772.0 C701.2,779.0 707.2,786.2 709.0,789.0 L707.0,772.0 L715.0,783.0 L724.0,797.0 L725.0,777.0 C731.3,776.2 750.3,775.3 763.0,772.0 C775.7,768.7 790.5,764.7 801.0,757.0 C811.5,749.3 820.5,737.0 826.0,726.0 C831.5,715.0 833.2,699.2 834.0,691.0 C834.8,682.8 831.5,679.3 831.0,677.0 L831.0,677.0 C828.2,676.8 819.8,678.3 814.0,676.0 C808.2,673.7 802.8,670.2 796.0,663.0 C789.2,655.8 780.2,643.5 773.0,633.0 C765.8,622.5 758.0,612.5 753.0,600.0 C748.0,587.5 744.7,565.0 743.0,558.0 Z"/></clipPath><path d="M743.0,558.0 C740.0,565.8 731.3,588.7 725.0,605.0 C718.7,621.3 710.7,639.2 705.0,656.0 C699.3,672.8 693.5,690.8 691.0,706.0 C688.5,721.2 688.8,736.0 690.0,747.0 C691.2,758.0 694.8,765.0 698.0,772.0 C701.2,779.0 707.2,786.2 709.0,789.0 L707.0,772.0 L715.0,783.0 L724.0,797.0 L725.0,777.0 C731.3,776.2 750.3,775.3 763.0,772.0 C775.7,768.7 790.5,764.7 801.0,757.0 C811.5,749.3 820.5,737.0 826.0,726.0 C831.5,715.0 833.2,699.2 834.0,691.0 C834.8,682.8 831.5,679.3 831.0,677.0 L831.0,677.0 C828.2,676.8 819.8,678.3 814.0,676.0 C808.2,673.7 802.8,670.2 796.0,663.0 C789.2,655.8 780.2,643.5 773.0,633.0 C765.8,622.5 758.0,612.5 753.0,600.0 C748.0,587.5 744.7,565.0 743.0,558.0 Z" fill="url(#lhc)"/><g clip-path="url(#lcc)"><path d="M785,690 L836,676 L832,720 L810,755 L766,775 L770,720 Z" fill="#241004" filter="url(#b2c)" opacity="0.75"/><path d="M740,640 L760,660 L740,740 L725,770 L722,720 Z" fill="#58340f" filter="url(#b2c)" opacity="0.7"/></g><clipPath id="rcc"><path d="M1051.0,480.0 L1054.0,500.0 L1057.0,560.0 L1060.0,625.0 L1073.0,670.0 L1078.0,707.0 L1076.0,764.0 L1060.0,790.0 L1034.0,816.0 L1034.0,816.0 L1028.0,811.0 L989.0,767.0 L963.0,722.0 L955.0,686.0 L966.0,638.0 L980.0,583.0 L985.0,579.0 L991.0,575.0 L1012.0,565.0 L1030.0,555.0 L1045.0,541.0 L1051.0,523.0 Z"/></clipPath><path d="M1051.0,480.0 L1054.0,500.0 L1057.0,560.0 L1060.0,625.0 L1073.0,670.0 L1078.0,707.0 L1076.0,764.0 L1060.0,790.0 L1034.0,816.0 L1034.0,816.0 L1028.0,811.0 L989.0,767.0 L963.0,722.0 L955.0,686.0 L966.0,638.0 L980.0,583.0 L985.0,579.0 L991.0,575.0 L1012.0,565.0 L1030.0,555.0 L1045.0,541.0 L1051.0,523.0 Z" fill="#2e1506"/><g clip-path="url(#rcc)"><path d="M985,640 L995,700 L1010,760 L1000,770 L975,700 Z" fill="#4a2a10" filter="url(#b2c)" opacity="0.7"/><clipPath id="rpcc"><path d="M989.0,576.0 L992.0,638.0 L1002.0,672.0 L1020.0,706.0 L1036.0,743.0 L1039.0,769.0 L1034.0,809.0 L1034.0,816.0 L1060.0,790.0 L1076.0,764.0 L1078.0,707.0 L1073.0,670.0 L1060.0,625.0 L1057.0,560.0 L1051.0,523.0 L1045.0,541.0 L1030.0,555.0 L1012.0,565.0 L991.0,575.0 Z"/></clipPath><g clip-path="url(#rpcc)"><rect x="960" y="500" width="130" height="330" fill="#6a3c16"/><rect x="960" y="500" width="130" height="110" fill="#4a260c"/><rect x="960" y="590" width="130" height="30" fill="#5a3010" filter="url(#b2c)"/><rect x="1040" y="710" width="50" height="100" fill="#7a4a1c" filter="url(#b2c)" opacity="0.6"/><path d="M985.0,630.0 L990.0,612.0 L996.0,626.0 L1003.0,600.0 L1009.0,622.0 L1016.0,596.0 L1022.0,618.0 L1030.0,594.0 L1036.0,616.0 L1044.0,592.0 L1050.0,614.0 L1058.0,590.0 L1064.0,618.0 L1080.0,640.0 L1080.0,700.0 L1072.0,712.0 L1066.0,700.0 L1058.0,710.0 L1050.0,698.0 L1042.0,706.0 L1034.0,694.0 L1026.0,702.0 L1018.0,690.0 L1010.0,696.0 L1000.0,680.0 L985.0,670.0 Z" fill="#c27d3c" filter="url(#b1c)"/><path d="M1000,660 L1030,615 L1005,661 Z" fill="#9a5a26" filter="url(#b1c)" opacity="0.5"/><path d="M1020,680 L1050,625 L1025,681 Z" fill="#9a5a26" filter="url(#b1c)" opacity="0.5"/><path d="M1040,690 L1065,640 L1045,691 Z" fill="#9a5a26" filter="url(#b1c)" opacity="0.5"/></g></g><clipPath id="tcc"><path d="M740.0,488.0 L730.0,478.0 L723.0,468.0 L721.0,451.0 L725.0,432.0 L732.0,419.0 L740.0,405.0 L749.5,381.0 L760.0,364.0 L774.0,348.0 L787.5,330.0 L800.0,321.0 L827.0,309.0 L850.0,301.0 L888.0,300.0 L929.0,311.0 L958.0,327.0 L972.0,340.0 L1000.0,350.0 L1022.0,372.0 L1040.0,405.0 L1050.0,446.0 L1054.0,500.0 L1051.0,483.0 L1042.0,463.0 L1029.0,459.0 L1012.0,468.0 L1000.0,483.0 L995.0,489.0 L985.0,482.0 L975.0,466.0 L968.0,445.0 L963.0,420.0 L959.0,395.0 L935.0,404.0 L905.0,415.0 L871.0,426.0 L828.0,435.0 L785.0,442.0 L762.0,447.0 L748.0,455.0 L742.0,468.0 L742.0,485.0 Z"/></clipPath><path d="M740.0,488.0 L730.0,478.0 L723.0,468.0 L721.0,451.0 L725.0,432.0 L732.0,419.0 L740.0,405.0 L749.5,381.0 L760.0,364.0 L774.0,348.0 L787.5,330.0 L800.0,321.0 L827.0,309.0 L850.0,301.0 L888.0,300.0 L929.0,311.0 L958.0,327.0 L972.0,340.0 L1000.0,350.0 L1022.0,372.0 L1040.0,405.0 L1050.0,446.0 L1054.0,500.0 L1051.0,483.0 L1042.0,463.0 L1029.0,459.0 L1012.0,468.0 L1000.0,483.0 L995.0,489.0 L985.0,482.0 L975.0,466.0 L968.0,445.0 L963.0,420.0 L959.0,395.0 L935.0,404.0 L905.0,415.0 L871.0,426.0 L828.0,435.0 L785.0,442.0 L762.0,447.0 L748.0,455.0 L742.0,468.0 L742.0,485.0 Z" fill="#67391a"/><g clip-path="url(#tcc)"><ellipse cx="966" cy="366" rx="16" ry="22" fill="#1e0c02" filter="url(#b3c)"/><ellipse cx="968" cy="362" rx="9" ry="13" fill="#241004" filter="url(#b2c)"/><path d="M940,345 L965,350 L975,390 L955,395 Z" fill="#3a1c08" filter="url(#b2c)" opacity="0.7"/><path d="M960,350 L1000,365 L1030,420 L1050,480 L1000,470 L975,440 L962,395 Z" fill="#50290e" filter="url(#b3c)" opacity="0.7"/><path d="M716,480 L720,440 L728,415 L740,430 L748,465 L745,492 Z" fill="#2a1304" filter="url(#b2c)" opacity="0.85"/><path d="M976,378 L1003,420 L1012,445 L996,425 Z M1000,382 L1030,425 L1032,450 L1016,425 Z" fill="#4a260c" filter="url(#b1c)" opacity="0.8"/><path d="M890,330 Q930,315 960,345 Q925,330 890,340 Z M880,360 Q925,345 960,370 Q920,360 880,370 Z" fill="#5a3012" filter="url(#b1c)" opacity="0.6"/><path d="M789.0,333.0 L772.0,350.0 L759.0,371.0 L752.0,387.0 L766.0,385.0 L790.0,377.0 L808.0,377.0 L821.0,375.0 L792.0,391.0 L770.0,402.0 L762.0,410.0 L776.0,413.0 L769.0,419.0 L777.0,424.0 L771.0,431.0 L781.0,438.0 L820.0,433.0 L856.0,424.0 L877.0,412.0 L857.0,413.0 L879.0,399.0 L858.0,401.0 L874.0,390.0 L861.0,392.0 L875.0,379.0 L846.0,384.0 L856.0,367.0 L836.0,373.0 L846.0,360.0 L827.0,365.0 L844.0,353.0 L822.0,358.0 L839.0,345.0 L817.0,349.0 L825.0,328.0 L809.0,341.0 L817.0,324.0 L801.0,335.0 Z" fill="#c47f3e" filter="url(#b1c)"/><path d="M775,425 L850,400 L783,427 Z" fill="#9c5a26" filter="url(#b1c)" opacity="0.55"/><path d="M790,433 L862,414 L798,435 Z" fill="#9c5a26" filter="url(#b1c)" opacity="0.55"/><path d="M765,375 L822,350 L773,377 Z" fill="#9c5a26" filter="url(#b1c)" opacity="0.55"/><path d="M772,415 L840,397 L780,417 Z" fill="#9c5a26" filter="url(#b1c)" opacity="0.55"/></g><path d="M928,409 Q943,403 957,398.5" stroke="#ffffff" stroke-width="2" fill="none" opacity="0.7"/><path d="M860,433 Q880,430 895,424" stroke="#ffd9a8" stroke-width="2" fill="none" opacity="0.35"/><path d="M740.0,488.0 C738.3,486.3 732.8,481.3 730.0,478.0 C727.2,474.7 724.5,472.5 723.0,468.0 C721.5,463.5 720.7,457.0 721.0,451.0 C721.3,445.0 723.2,437.3 725.0,432.0 C726.8,426.7 729.5,423.5 732.0,419.0 C734.5,414.5 737.1,411.3 740.0,405.0 C742.9,398.7 746.2,387.8 749.5,381.0 C752.8,374.2 755.9,369.5 760.0,364.0 C764.1,358.5 769.4,353.7 774.0,348.0 C778.6,342.3 783.2,334.5 787.5,330.0 C791.8,325.5 793.4,324.5 800.0,321.0 C806.6,317.5 818.7,312.3 827.0,309.0 C835.3,305.7 846.2,302.3 850.0,301.0" stroke="#0a0a0a" stroke-width="2.50" fill="none" stroke-linejoin="round" stroke-linecap="round"/><path d="M827.0,309.0 C830.8,307.7 839.8,302.5 850.0,301.0 C860.2,299.5 874.8,298.3 888.0,300.0 C901.2,301.7 917.3,306.5 929.0,311.0 C940.7,315.5 950.8,322.2 958.0,327.0 C965.2,331.8 965.0,336.2 972.0,340.0 C979.0,343.8 995.3,348.3 1000.0,350.0" stroke="#2a1606" stroke-width="1" fill="none" opacity="0.6"/><path d="M972.0,340.0 C976.7,341.7 991.7,344.7 1000.0,350.0 C1008.3,355.3 1015.3,362.8 1022.0,372.0 C1028.7,381.2 1035.3,392.7 1040.0,405.0 C1044.7,417.3 1047.7,430.2 1050.0,446.0 C1052.3,461.8 1052.8,481.0 1054.0,500.0 C1055.2,519.0 1056.0,539.2 1057.0,560.0 C1058.0,580.8 1057.3,606.7 1060.0,625.0 C1062.7,643.3 1070.0,656.3 1073.0,670.0 C1076.0,683.7 1077.5,691.3 1078.0,707.0 C1078.5,722.7 1079.0,750.2 1076.0,764.0 C1073.0,777.8 1067.0,781.3 1060.0,790.0 C1053.0,798.7 1038.3,811.7 1034.0,816.0" stroke="#0a0a0a" stroke-width="2.50" fill="none" stroke-linejoin="round" stroke-linecap="round"/><path d="M980,583 L976,590" stroke="#0a0a0a" stroke-width="2.50" fill="none" stroke-linejoin="round" stroke-linecap="round"/><path d="M742.0,485.0 C742.0,482.2 741.0,473.0 742.0,468.0 C743.0,463.0 744.7,458.5 748.0,455.0 C751.3,451.5 755.8,449.2 762.0,447.0 C768.2,444.8 774.0,444.0 785.0,442.0 C796.0,440.0 813.7,437.7 828.0,435.0 C842.3,432.3 858.2,429.3 871.0,426.0 C883.8,422.7 894.3,418.7 905.0,415.0 C915.7,411.3 926.0,407.3 935.0,404.0 C944.0,400.7 955.0,396.5 959.0,395.0" stroke="#0a0a0a" stroke-width="2.75" fill="none" stroke-linejoin="round" stroke-linecap="round"/><path d="M959.0,395.0 C959.7,399.2 961.5,411.7 963.0,420.0 C964.5,428.3 966.0,437.3 968.0,445.0 C970.0,452.7 972.2,459.8 975.0,466.0 C977.8,472.2 981.7,478.2 985.0,482.0 C988.3,485.8 993.3,487.8 995.0,489.0" stroke="#0a0a0a" stroke-width="2.50" fill="none" stroke-linejoin="round" stroke-linecap="round"/><path d="M996.0,489.0 C997.2,487.3 999.7,482.8 1003.0,479.0 C1006.3,475.2 1010.8,469.2 1016.0,466.0 C1021.2,462.8 1029.2,459.6 1034.0,459.6 C1038.8,459.6 1042.3,462.3 1045.0,466.0 C1047.7,469.7 1049.0,472.5 1050.0,482.0 C1051.0,491.5 1051.8,513.2 1051.0,523.0 C1050.2,532.8 1048.5,535.7 1045.0,541.0 C1041.5,546.3 1035.5,551.0 1030.0,555.0 C1024.5,559.0 1018.5,561.7 1012.0,565.0 C1005.5,568.3 995.5,572.7 991.0,575.0 C986.5,577.3 986.0,578.3 985.0,579.0" stroke="#0a0a0a" stroke-width="2.50" fill="none" stroke-linejoin="round" stroke-linecap="round"/><path d="M1006.0,498.0 C1007.5,496.8 1011.8,492.7 1015.0,491.0 C1018.2,489.3 1023.3,488.5 1025.0,488.0" stroke="#0a0a0a" stroke-width="1.75" fill="none" stroke-linejoin="round" stroke-linecap="round"/><path d="M742.0,485.0 C742.3,492.3 743.8,516.8 744.0,529.0 C744.2,541.2 741.5,546.2 743.0,558.0 C744.5,569.8 748.0,587.5 753.0,600.0 C758.0,612.5 765.8,622.5 773.0,633.0 C780.2,643.5 789.2,655.8 796.0,663.0 C802.8,670.2 808.2,673.7 814.0,676.0 C819.8,678.3 824.7,677.7 831.0,677.0 C837.3,676.3 843.8,674.2 852.0,672.0 C860.2,669.8 870.0,668.7 880.0,664.0 C890.0,659.3 901.3,651.2 912.0,644.0 C922.7,636.8 934.8,628.8 944.0,621.0 C953.2,613.2 963.2,601.0 967.0,597.0" stroke="#0a0a0a" stroke-width="2.25" fill="none" stroke-linejoin="round" stroke-linecap="round"/><path d="M743.0,558.0 C740.0,565.8 731.3,588.7 725.0,605.0 C718.7,621.3 710.7,639.2 705.0,656.0 C699.3,672.8 693.5,690.8 691.0,706.0 C688.5,721.2 688.8,736.0 690.0,747.0 C691.2,758.0 694.8,765.0 698.0,772.0 C701.2,779.0 707.2,786.2 709.0,789.0" stroke="#0a0a0a" stroke-width="2.50" fill="none" stroke-linejoin="round" stroke-linecap="round"/><path d="M746.0,626.0 C743.7,631.7 736.3,647.5 732.0,660.0 C727.7,672.5 724.0,687.7 720.0,701.0 C716.0,714.3 710.5,729.8 708.0,740.0 C705.5,750.2 705.0,754.0 705.0,762.0 C705.0,770.0 707.5,783.7 708.0,788.0" stroke="#0a0a0a" stroke-width="2.50" fill="none" stroke-linejoin="round" stroke-linecap="round"/><path d="M776.0,671.0 C773.3,674.2 765.5,681.7 760.0,690.0 C754.5,698.3 748.0,711.3 743.0,721.0 C738.0,730.7 733.3,740.0 730.0,748.0 C726.7,756.0 724.0,761.0 723.0,769.0 C722.0,777.0 723.8,791.5 724.0,796.0" stroke="#0a0a0a" stroke-width="2.50" fill="none" stroke-linejoin="round" stroke-linecap="round"/><path d="M781.0,701.0 C779.5,704.2 774.2,713.2 772.0,720.0 C769.8,726.8 769.3,733.3 768.0,742.0 C766.7,750.7 764.7,767.0 764.0,772.0" stroke="#0a0a0a" stroke-width="2.25" fill="none" stroke-linejoin="round" stroke-linecap="round"/><path d="M812.0,681.0 C813.0,685.8 817.0,701.0 818.0,710.0 C819.0,719.0 818.0,730.8 818.0,735.0" stroke="#0a0a0a" stroke-width="2.00" fill="none" stroke-linejoin="round" stroke-linecap="round"/><path d="M725.0,777.0 C731.3,776.2 750.3,775.3 763.0,772.0 C775.7,768.7 790.5,764.7 801.0,757.0 C811.5,749.3 820.5,737.0 826.0,726.0 C831.5,715.0 833.2,699.2 834.0,691.0 C834.8,682.8 831.5,679.3 831.0,677.0" stroke="#0a0a0a" stroke-width="2.50" fill="none" stroke-linejoin="round" stroke-linecap="round"/><path d="M834,678 L834,696" stroke="#0a0a0a" stroke-width="1.88" fill="none" stroke-linejoin="round" stroke-linecap="round"/><path d="M724.0,778.0 C726.7,786.5 733.0,810.2 740.0,829.0 C747.0,847.8 760.7,879.5 766.0,891.0 C771.3,902.5 763.2,897.7 772.0,898.0 C780.8,898.3 799.3,895.3 819.0,893.0 C838.7,890.7 872.7,886.8 890.0,884.0 C907.3,881.2 906.8,881.3 923.0,876.0 C939.2,870.7 967.8,861.0 987.0,852.0 C1006.2,843.0 1029.5,827.0 1038.0,822.0" stroke="#0a0a0a" stroke-width="2.50" fill="none" stroke-linejoin="round" stroke-linecap="round"/><path d="M980.0,583.0 C977.7,592.2 970.2,620.8 966.0,638.0 C961.8,655.2 955.5,672.0 955.0,686.0 C954.5,700.0 957.3,708.5 963.0,722.0 C968.7,735.5 978.2,752.2 989.0,767.0 C999.8,781.8 1020.5,802.8 1028.0,811.0 C1035.5,819.2 1033.0,815.2 1034.0,816.0" stroke="#0a0a0a" stroke-width="2.50" fill="none" stroke-linejoin="round" stroke-linecap="round"/><path d="M989.0,576.0 C989.5,586.3 989.8,622.0 992.0,638.0 C994.2,654.0 997.3,660.7 1002.0,672.0 C1006.7,683.3 1014.3,694.2 1020.0,706.0 C1025.7,717.8 1032.8,732.5 1036.0,743.0 C1039.2,753.5 1039.3,758.0 1039.0,769.0 C1038.7,780.0 1034.8,802.3 1034.0,809.0" stroke="#0a0a0a" stroke-width="2.75" fill="none" stroke-linejoin="round" stroke-linecap="round"/><path d="M983.0,668.0 C983.8,676.7 985.3,701.8 988.0,720.0 C990.7,738.2 997.2,767.5 999.0,777.0" stroke="#0a0a0a" stroke-width="1.88" fill="none" stroke-linejoin="round" stroke-linecap="round"/><path d="M1064.0,704.0 C1064.3,708.3 1066.0,721.0 1066.0,730.0 C1066.0,739.0 1066.3,748.8 1064.0,758.0 C1061.7,767.2 1056.7,776.2 1052.0,785.0 C1047.3,793.8 1038.7,806.7 1036.0,811.0" stroke="#0a0a0a" stroke-width="2.25" fill="none" stroke-linejoin="round" stroke-linecap="round"/><path d="M967,597 L976,581 L987,579 L978,606 Z" fill="#0a0a0a"/><path d="M768,896 L800,892 L775,900 Z" fill="#0a0a0a"/><circle cx="996" cy="489" r="2.6" fill="#0a0a0a"/><circle cx="992" cy="497" r="0.9" fill="#0a0a0a"/></svg>
<svg style="left:0;top:0" width="1920" height="1031" viewBox="0 0 1920 1031"><g transform="translate(1657,115) scale(0.36811) translate(-670,-207)"><defs>
<filter id="b1n" x="-20%" y="-20%" width="140%" height="140%"><feGaussianBlur stdDeviation="1.0"/></filter>
<filter id="b3n" x="-50%" y="-50%" width="200%" height="200%"><feGaussianBlur stdDeviation="6"/></filter>
<filter id="b2n" x="-50%" y="-50%" width="200%" height="200%"><feGaussianBlur stdDeviation="3"/></filter>
<linearGradient id="lhn" gradientUnits="userSpaceOnUse" x1="700" y1="560" x2="830" y2="790"><stop offset="0" stop-color="#4e2b0e"/><stop offset="0.55" stop-color="#4a290f"/><stop offset="1" stop-color="#2a1305"/></linearGradient>
<linearGradient id="rhn" gradientUnits="userSpaceOnUse" x1="960" y1="0" x2="1076" y2="0"><stop offset="0" stop-color="#2a1204"/><stop offset="0.3" stop-color="#3a1c08"/><stop offset="0.45" stop-color="#4a260c"/><stop offset="0.62" stop-color="#6a3c16"/><stop offset="1" stop-color="#6e4018"/></linearGradient>
</defs><path d="M742.0,461.0 L742.0,500.0 L744.0,560.0 L732.0,620.0 L722.0,700.0 L724.0,775.0 L740.0,829.0 L766.0,891.0 L772.0,898.0 L819.0,893.0 L890.0,884.0 L923.0,876.0 L987.0,852.0 L1038.0,822.0 L1029.0,814.0 L1000.0,700.0 L991.0,574.0 L1019.0,561.0 L1042.0,544.0 L1051.0,523.0 L1051.0,483.0 L1042.0,463.0 L1029.0,459.0 L1012.0,468.0 L1000.0,483.0 L995.0,489.0 L982.0,478.0 L972.0,457.0 L965.0,429.0 L959.0,395.0 L929.0,406.0 L900.0,419.0 L871.0,427.0 L828.0,436.0 L785.0,442.0 L755.0,449.0 Z" fill="#d9b99f"/><clipPath id="lcn"><path d="M743.0,558.0 C740.0,565.8 731.3,588.7 725.0,605.0 C718.7,621.3 710.7,639.2 705.0,656.0 C699.3,672.8 693.5,690.8 691.0,706.0 C688.5,721.2 688.8,736.0 690.0,747.0 C691.2,758.0 694.8,765.0 698.0,772.0 C701.2,779.0 707.2,786.2 709.0,789.0 L707.0,772.0 L715.0,783.0 L724.0,797.0 L725.0,777.0 C731.3,776.2 750.3,775.3 763.0,772.0 C775.7,768.7 790.5,764.7 801.0,757.0 C811.5,749.3 820.5,737.0 826.0,726.0 C831.5,715.0 833.2,699.2 834.0,691.0 C834.8,682.8 831.5,679.3 831.0,677.0 L831.0,677.0 C828.2,676.8 819.8,678.3 814.0,676.0 C808.2,673.7 802.8,670.2 796.0,663.0 C789.2,655.8 780.2,643.5 773.0,633.0 C765.8,622.5 758.0,612.5 753.0,600.0 C748.0,587.5 744.7,565.0 743.0,558.0 Z"/></clipPath><path d="M743.0,558.0 C740.0,565.8 731.3,588.7 725.0,605.0 C718.7,621.3 710.7,639.2 705.0,656.0 C699.3,672.8 693.5,690.8 691.0,706.0 C688.5,721.2 688.8,736.0 690.0,747.0 C691.2,758.0 694.8,765.0 698.0,772.0 C701.2,779.0 707.2,786.2 709.0,789.0 L707.0,772.0 L715.0,783.0 L724.0,797.0 L725.0,777.0 C731.3,776.2 750.3,775.3 763.0,772.0 C775.7,768.7 790.5,764.7 801.0,757.0 C811.5,749.3 820.5,737.0 826.0,726.0 C831.5,715.0 833.2,699.2 834.0,691.0 C834.8,682.8 831.5,679.3 831.0,677.0 L831.0,677.0 C828.2,676.8 819.8,678.3 814.0,676.0 C808.2,673.7 802.8,670.2 796.0,663.0 C789.2,655.8 780.2,643.5 773.0,633.0 C765.8,622.5 758.0,612.5 753.0,600.0 C748.0,587.5 744.7,565.0 743.0,558.0 Z" fill="url(#lhn)"/><g clip-path="url(#lcn)"><path d="M785,690 L836,676 L832,720 L810,755 L766,775 L770,720 Z" fill="#241004" filter="url(#b2n)" opacity="0.75"/><path d="M740,640 L760,660 L740,740 L725,770 L722,720 Z" fill="#58340f" filter="url(#b2n)" opacity="0.7"/></g><clipPath id="rcn"><path d="M1051.0,480.0 L1054.0,500.0 L1057.0,560.0 L1060.0,625.0 L1073.0,670.0 L1078.0,707.0 L1076.0,764.0 L1060.0,790.0 L1034.0,816.0 L1034.0,816.0 L1028.0,811.0 L989.0,767.0 L963.0,722.0 L955.0,686.0 L966.0,638.0 L980.0,583.0 L985.0,579.0 L991.0,575.0 L1012.0,565.0 L1030.0,555.0 L1045.0,541.0 L1051.0,523.0 Z"/></clipPath><path d="M1051.0,480.0 L1054.0,500.0 L1057.0,560.0 L1060.0,625.0 L1073.0,670.0 L1078.0,707.0 L1076.0,764.0 L1060.0,790.0 L1034.0,816.0 L1034.0,816.0 L1028.0,811.0 L989.0,767.0 L963.0,722.0 L955.0,686.0 L966.0,638.0 L980.0,583.0 L985.0,579.0 L991.0,575.0 L1012.0,565.0 L1030.0,555.0 L1045.0,541.0 L1051.0,523.0 Z" fill="#2e1506"/><g clip-path="url(#rcn)"><path d="M985,640 L995,700 L1010,760 L1000,770 L975,700 Z" fill="#4a2a10" filter="url(#b2n)" opacity="0.7"/><clipPath id="rpcn"><path d="M989.0,576.0 L992.0,638.0 L1002.0,672.0 L1020.0,706.0 L1036.0,743.0 L1039.0,769.0 L1034.0,809.0 L1034.0,816.0 L1060.0,790.0 L1076.0,764.0 L1078.0,707.0 L1073.0,670.0 L1060.0,625.0 L1057.0,560.0 L1051.0,523.0 L1045.0,541.0 L1030.0,555.0 L1012.0,565.0 L991.0,575.0 Z"/></clipPath><g clip-path="url(#rpcn)"><rect x="960" y="500" width="130" height="330" fill="#6a3c16"/><rect x="960" y="500" width="130" height="110" fill="#4a260c"/><rect x="960" y="590" width="130" height="30" fill="#5a3010" filter="url(#b2n)"/><rect x="1040" y="710" width="50" height="100" fill="#7a4a1c" filter="url(#b2n)" opacity="0.6"/><path d="M985.0,630.0 L990.0,612.0 L996.0,626.0 L1003.0,600.0 L1009.0,622.0 L1016.0,596.0 L1022.0,618.0 L1030.0,594.0 L1036.0,616.0 L1044.0,592.0 L1050.0,614.0 L1058.0,590.0 L1064.0,618.0 L1080.0,640.0 L1080.0,700.0 L1072.0,712.0 L1066.0,700.0 L1058.0,710.0 L1050.0,698.0 L1042.0,706.0 L1034.0,694.0 L1026.0,702.0 L1018.0,690.0 L1010.0,696.0 L1000.0,680.0 L985.0,670.0 Z" fill="#c27d3c" filter="url(#b1n)"/><path d="M1000,660 L1030,615 L1005,661 Z" fill="#9a5a26" filter="url(#b1n)" opacity="0.5"/><path d="M1020,680 L1050,625 L1025,681 Z" fill="#9a5a26" filter="url(#b1n)" opacity="0.5"/><path d="M1040,690 L1065,640 L1045,691 Z" fill="#9a5a26" filter="url(#b1n)" opacity="0.5"/></g></g><clipPath id="tcn"><path d="M740.0,488.0 L730.0,478.0 L723.0,468.0 L721.0,451.0 L725.0,432.0 L732.0,419.0 L740.0,405.0 L749.5,381.0 L760.0,364.0 L774.0,348.0 L787.5,330.0 L800.0,321.0 L827.0,309.0 L850.0,301.0 L888.0,300.0 L929.0,311.0 L958.0,327.0 L972.0,340.0 L1000.0,350.0 L1022.0,372.0 L1040.0,405.0 L1050.0,446.0 L1054.0,500.0 L1051.0,483.0 L1042.0,463.0 L1029.0,459.0 L1012.0,468.0 L1000.0,483.0 L995.0,489.0 L985.0,482.0 L975.0,466.0 L968.0,445.0 L963.0,420.0 L959.0,395.0 L935.0,404.0 L905.0,415.0 L871.0,426.0 L828.0,435.0 L785.0,442.0 L762.0,447.0 L748.0,455.0 L742.0,468.0 L742.0,485.0 Z"/></clipPath><path d="M740.0,488.0 L730.0,478.0 L723.0,468.0 L721.0,451.0 L725.0,432.0 L732.0,419.0 L740.0,405.0 L749.5,381.0 L760.0,364.0 L774.0,348.0 L787.5,330.0 L800.0,321.0 L827.0,309.0 L850.0,301.0 L888.0,300.0 L929.0,311.0 L958.0,327.0 L972.0,340.0 L1000.0,350.0 L1022.0,372.0 L1040.0,405.0 L1050.0,446.0 L1054.0,500.0 L1051.0,483.0 L1042.0,463.0 L1029.0,459.0 L1012.0,468.0 L1000.0,483.0 L995.0,489.0 L985.0,482.0 L975.0,466.0 L968.0,445.0 L963.0,420.0 L959.0,395.0 L935.0,404.0 L905.0,415.0 L871.0,426.0 L828.0,435.0 L785.0,442.0 L762.0,447.0 L748.0,455.0 L742.0,468.0 L742.0,485.0 Z" fill="#67391a"/><g clip-path="url(#tcn)"><ellipse cx="966" cy="366" rx="16" ry="22" fill="#1e0c02" filter="url(#b3n)"/><ellipse cx="968" cy="362" rx="9" ry="13" fill="#241004" filter="url(#b2n)"/><path d="M940,345 L965,350 L975,390 L955,395 Z" fill="#3a1c08" filter="url(#b2n)" opacity="0.7"/><path d="M960,350 L1000,365 L1030,420 L1050,480 L1000,470 L975,440 L962,395 Z" fill="#50290e" filter="url(#b3n)" opacity="0.7"/><path d="M716,480 L720,440 L728,415 L740,430 L748,465 L745,492 Z" fill="#2a1304" filter="url(#b2n)" opacity="0.85"/><path d="M976,378 L1003,420 L1012,445 L996,425 Z M1000,382 L1030,425 L1032,450 L1016,425 Z" fill="#4a260c" filter="url(#b1n)" opacity="0.8"/><path d="M890,330 Q930,315 960,345 Q925,330 890,340 Z M880,360 Q925,345 960,370 Q920,360 880,370 Z" fill="#5a3012" filter="url(#b1n)" opacity="0.6"/><path d="M789.0,333.0 L772.0,350.0 L759.0,371.0 L752.0,387.0 L766.0,385.0 L790.0,377.0 L808.0,377.0 L821.0,375.0 L792.0,391.0 L770.0,402.0 L762.0,410.0 L776.0,413.0 L769.0,419.0 L777.0,424.0 L771.0,431.0 L781.0,438.0 L820.0,433.0 L856.0,424.0 L877.0,412.0 L857.0,413.0 L879.0,399.0 L858.0,401.0 L874.0,390.0 L861.0,392.0 L875.0,379.0 L846.0,384.0 L856.0,367.0 L836.0,373.0 L846.0,360.0 L827.0,365.0 L844.0,353.0 L822.0,358.0 L839.0,345.0 L817.0,349.0 L825.0,328.0 L809.0,341.0 L817.0,324.0 L801.0,335.0 Z" fill="#c47f3e" filter="url(#b1n)"/><path d="M775,425 L850,400 L783,427 Z" fill="#9c5a26" filter="url(#b1n)" opacity="0.55"/><path d="M790,433 L862,414 L798,435 Z" fill="#9c5a26" filter="url(#b1n)" opacity="0.55"/><path d="M765,375 L822,350 L773,377 Z" fill="#9c5a26" filter="url(#b1n)" opacity="0.55"/><path d="M772,415 L840,397 L780,417 Z" fill="#9c5a26" filter="url(#b1n)" opacity="0.55"/></g><path d="M928,409 Q943,403 957,398.5" stroke="#ffffff" stroke-width="2" fill="none" opacity="0.7"/><path d="M860,433 Q880,430 895,424" stroke="#ffd9a8" stroke-width="2" fill="none" opacity="0.35"/><path d="M740.0,488.0 C738.3,486.3 732.8,481.3 730.0,478.0 C727.2,474.7 724.5,472.5 723.0,468.0 C721.5,463.5 720.7,457.0 721.0,451.0 C721.3,445.0 723.2,437.3 725.0,432.0 C726.8,426.7 729.5,423.5 732.0,419.0 C734.5,414.5 737.1,411.3 740.0,405.0 C742.9,398.7 746.2,387.8 749.5,381.0 C752.8,374.2 755.9,369.5 760.0,364.0 C764.1,358.5 769.4,353.7 774.0,348.0 C778.6,342.3 783.2,334.5 787.5,330.0 C791.8,325.5 793.4,324.5 800.0,321.0 C806.6,317.5 818.7,312.3 827.0,309.0 C835.3,305.7 846.2,302.3 850.0,301.0" stroke="#0a0a0a" stroke-width="2.50" fill="none" stroke-linejoin="round" stroke-linecap="round"/><path d="M827.0,309.0 C830.8,307.7 839.8,302.5 850.0,301.0 C860.2,299.5 874.8,298.3 888.0,300.0 C901.2,301.7 917.3,306.5 929.0,311.0 C940.7,315.5 950.8,322.2 958.0,327.0 C965.2,331.8 965.0,336.2 972.0,340.0 C979.0,343.8 995.3,348.3 1000.0,350.0" stroke="#2a1606" stroke-width="1" fill="none" opacity="0.6"/><path d="M972.0,340.0 C976.7,341.7 991.7,344.7 1000.0,350.0 C1008.3,355.3 1015.3,362.8 1022.0,372.0 C1028.7,381.2 1035.3,392.7 1040.0,405.0 C1044.7,417.3 1047.7,430.2 1050.0,446.0 C1052.3,461.8 1052.8,481.0 1054.0,500.0 C1055.2,519.0 1056.0,539.2 1057.0,560.0 C1058.0,580.8 1057.3,606.7 1060.0,625.0 C1062.7,643.3 1070.0,656.3 1073.0,670.0 C1076.0,683.7 1077.5,691.3 1078.0,707.0 C1078.5,722.7 1079.0,750.2 1076.0,764.0 C1073.0,777.8 1067.0,781.3 1060.0,790.0 C1053.0,798.7 1038.3,811.7 1034.0,816.0" stroke="#0a0a0a" stroke-width="2.50" fill="none" stroke-linejoin="round" stroke-linecap="round"/><path d="M980,583 L976,590" stroke="#0a0a0a" stroke-width="2.50" fill="none" stroke-linejoin="round" stroke-linecap="round"/><path d="M742.0,485.0 C742.0,482.2 741.0,473.0 742.0,468.0 C743.0,463.0 744.7,458.5 748.0,455.0 C751.3,451.5 755.8,449.2 762.0,447.0 C768.2,444.8 774.0,444.0 785.0,442.0 C796.0,440.0 813.7,437.7 828.0,435.0 C842.3,432.3 858.2,429.3 871.0,426.0 C883.8,422.7 894.3,418.7 905.0,415.0 C915.7,411.3 926.0,407.3 935.0,404.0 C944.0,400.7 955.0,396.5 959.0,395.0" stroke="#0a0a0a" stroke-width="2.75" fill="none" stroke-linejoin="round" stroke-linecap="round"/><path d="M959.0,395.0 C959.7,399.2 961.5,411.7 963.0,420.0 C964.5,428.3 966.0,437.3 968.0,445.0 C970.0,452.7 972.2,459.8 975.0,466.0 C977.8,472.2 981.7,478.2 985.0,482.0 C988.3,485.8 993.3,487.8 995.0,489.0" stroke="#0a0a0a" stroke-width="2.50" fill="none" stroke-linejoin="round" stroke-linecap="round"/><path d="M996.0,489.0 C997.2,487.3 999.7,482.8 1003.0,479.0 C1006.3,475.2 1010.8,469.2 1016.0,466.0 C1021.2,462.8 1029.2,459.6 1034.0,459.6 C1038.8,459.6 1042.3,462.3 1045.0,466.0 C1047.7,469.7 1049.0,472.5 1050.0,482.0 C1051.0,491.5 1051.8,513.2 1051.0,523.0 C1050.2,532.8 1048.5,535.7 1045.0,541.0 C1041.5,546.3 1035.5,551.0 1030.0,555.0 C1024.5,559.0 1018.5,561.7 1012.0,565.0 C1005.5,568.3 995.5,572.7 991.0,575.0 C986.5,577.3 986.0,578.3 985.0,579.0" stroke="#0a0a0a" stroke-width="2.50" fill="none" stroke-linejoin="round" stroke-linecap="round"/><path d="M1006.0,498.0 C1007.5,496.8 1011.8,492.7 1015.0,491.0 C1018.2,489.3 1023.3,488.5 1025.0,488.0" stroke="#0a0a0a" stroke-width="1.75" fill="none" stroke-linejoin="round" stroke-linecap="round"/><path d="M742.0,485.0 C742.3,492.3 743.8,516.8 744.0,529.0 C744.2,541.2 741.5,546.2 743.0,558.0 C744.5,569.8 748.0,587.5 753.0,600.0 C758.0,612.5 765.8,622.5 773.0,633.0 C780.2,643.5 789.2,655.8 796.0,663.0 C802.8,670.2 808.2,673.7 814.0,676.0 C819.8,678.3 824.7,677.7 831.0,677.0 C837.3,676.3 843.8,674.2 852.0,672.0 C860.2,669.8 870.0,668.7 880.0,664.0 C890.0,659.3 901.3,651.2 912.0,644.0 C922.7,636.8 934.8,628.8 944.0,621.0 C953.2,613.2 963.2,601.0 967.0,597.0" stroke="#0a0a0a" stroke-width="2.25" fill="none" stroke-linejoin="round" stroke-linecap="round"/><path d="M743.0,558.0 C740.0,565.8 731.3,588.7 725.0,605.0 C718.7,621.3 710.7,639.2 705.0,656.0 C699.3,672.8 693.5,690.8 691.0,706.0 C688.5,721.2 688.8,736.0 690.0,747.0 C691.2,758.0 694.8,765.0 698.0,772.0 C701.2,779.0 707.2,786.2 709.0,789.0" stroke="#0a0a0a" stroke-width="2.50" fill="none" stroke-linejoin="round" stroke-linecap="round"/><path d="M746.0,626.0 C743.7,631.7 736.3,647.5 732.0,660.0 C727.7,672.5 724.0,687.7 720.0,701.0 C716.0,714.3 710.5,729.8 708.0,740.0 C705.5,750.2 705.0,754.0 705.0,762.0 C705.0,770.0 707.5,783.7 708.0,788.0" stroke="#0a0a0a" stroke-width="2.50" fill="none" stroke-linejoin="round" stroke-linecap="round"/><path d="M776.0,671.0 C773.3,674.2 765.5,681.7 760.0,690.0 C754.5,698.3 748.0,711.3 743.0,721.0 C738.0,730.7 733.3,740.0 730.0,748.0 C726.7,756.0 724.0,761.0 723.0,769.0 C722.0,777.0 723.8,791.5 724.0,796.0" stroke="#0a0a0a" stroke-width="2.50" fill="none" stroke-linejoin="round" stroke-linecap="round"/><path d="M781.0,701.0 C779.5,704.2 774.2,713.2 772.0,720.0 C769.8,726.8 769.3,733.3 768.0,742.0 C766.7,750.7 764.7,767.0 764.0,772.0" stroke="#0a0a0a" stroke-width="2.25" fill="none" stroke-linejoin="round" stroke-linecap="round"/><path d="M812.0,681.0 C813.0,685.8 817.0,701.0 818.0,710.0 C819.0,719.0 818.0,730.8 818.0,735.0" stroke="#0a0a0a" stroke-width="2.00" fill="none" stroke-linejoin="round" stroke-linecap="round"/><path d="M725.0,777.0 C731.3,776.2 750.3,775.3 763.0,772.0 C775.7,768.7 790.5,764.7 801.0,757.0 C811.5,749.3 820.5,737.0 826.0,726.0 C831.5,715.0 833.2,699.2 834.0,691.0 C834.8,682.8 831.5,679.3 831.0,677.0" stroke="#0a0a0a" stroke-width="2.50" fill="none" stroke-linejoin="round" stroke-linecap="round"/><path d="M834,678 L834,696" stroke="#0a0a0a" stroke-width="1.88" fill="none" stroke-linejoin="round" stroke-linecap="round"/><path d="M724.0,778.0 C726.7,786.5 733.0,810.2 740.0,829.0 C747.0,847.8 760.7,879.5 766.0,891.0 C771.3,902.5 763.2,897.7 772.0,898.0 C780.8,898.3 799.3,895.3 819.0,893.0 C838.7,890.7 872.7,886.8 890.0,884.0 C907.3,881.2 906.8,881.3 923.0,876.0 C939.2,870.7 967.8,861.0 987.0,852.0 C1006.2,843.0 1029.5,827.0 1038.0,822.0" stroke="#0a0a0a" stroke-width="2.50" fill="none" stroke-linejoin="round" stroke-linecap="round"/><path d="M980.0,583.0 C977.7,592.2 970.2,620.8 966.0,638.0 C961.8,655.2 955.5,672.0 955.0,686.0 C954.5,700.0 957.3,708.5 963.0,722.0 C968.7,735.5 978.2,752.2 989.0,767.0 C999.8,781.8 1020.5,802.8 1028.0,811.0 C1035.5,819.2 1033.0,815.2 1034.0,816.0" stroke="#0a0a0a" stroke-width="2.50" fill="none" stroke-linejoin="round" stroke-linecap="round"/><path d="M989.0,576.0 C989.5,586.3 989.8,622.0 992.0,638.0 C994.2,654.0 997.3,660.7 1002.0,672.0 C1006.7,683.3 1014.3,694.2 1020.0,706.0 C1025.7,717.8 1032.8,732.5 1036.0,743.0 C1039.2,753.5 1039.3,758.0 1039.0,769.0 C1038.7,780.0 1034.8,802.3 1034.0,809.0" stroke="#0a0a0a" stroke-width="2.75" fill="none" stroke-linejoin="round" stroke-linecap="round"/><path d="M983.0,668.0 C983.8,676.7 985.3,701.8 988.0,720.0 C990.7,738.2 997.2,767.5 999.0,777.0" stroke="#0a0a0a" stroke-width="1.88" fill="none" stroke-linejoin="round" stroke-linecap="round"/><path d="M1064.0,704.0 C1064.3,708.3 1066.0,721.0 1066.0,730.0 C1066.0,739.0 1066.3,748.8 1064.0,758.0 C1061.7,767.2 1056.7,776.2 1052.0,785.0 C1047.3,793.8 1038.7,806.7 1036.0,811.0" stroke="#0a0a0a" stroke-width="2.25" fill="none" stroke-linejoin="round" stroke-linecap="round"/><path d="M967,597 L976,581 L987,579 L978,606 Z" fill="#0a0a0a"/><path d="M768,896 L800,892 L775,900 Z" fill="#0a0a0a"/><circle cx="996" cy="489" r="2.6" fill="#0a0a0a"/><circle cx="992" cy="497" r="0.9" fill="#0a0a0a"/></g></svg>
</body></html>
